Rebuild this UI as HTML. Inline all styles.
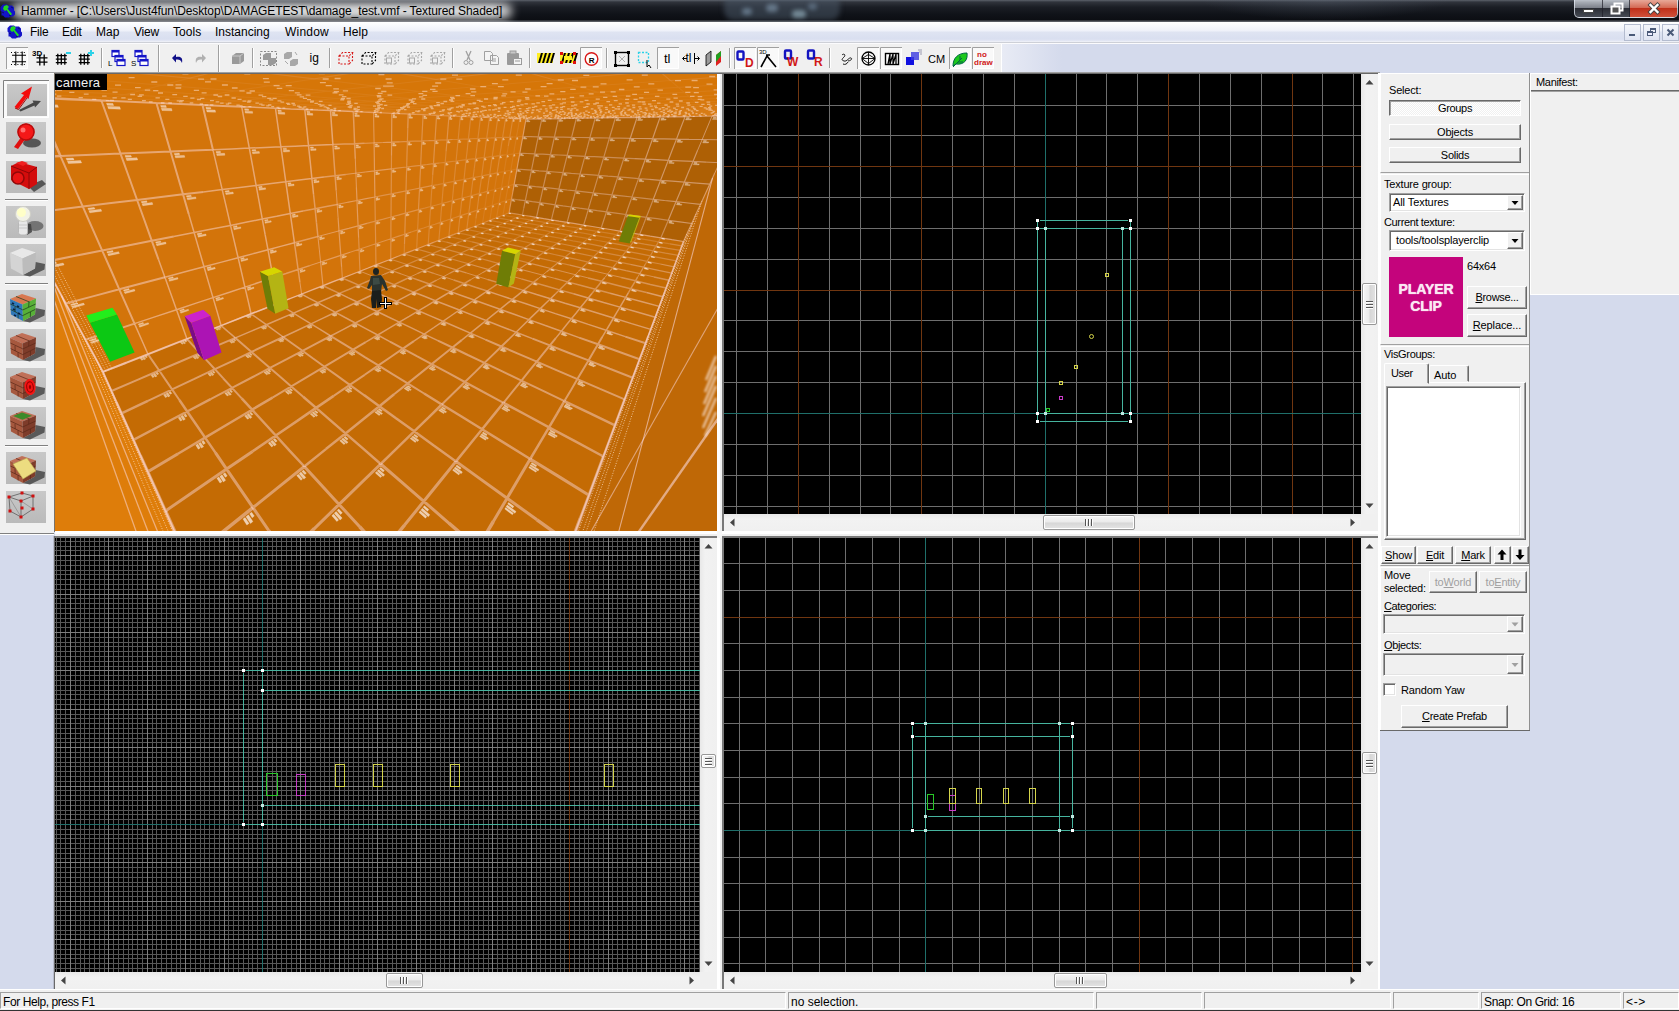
<!DOCTYPE html><html><head><meta charset="utf-8"><title>Hammer</title><style>html,body{margin:0;padding:0;background:#d4daec;overflow:hidden}body{width:1679px;height:1011px;position:relative;font-family:"Liberation Sans",sans-serif}u{text-decoration:underline}</style></head><body>
<div style="position:absolute;left:0px;top:0px;width:1679px;height:1011px;background:#d4daec"></div><div style="position:absolute;left:55px;top:73px;width:1325px;height:917px;background:#f0f0f0"></div><div style="position:absolute;left:0px;top:72px;width:1380px;height:1px;background:#a0a0a0"></div><div style="position:absolute;left:54px;top:73px;width:1326px;height:1px;background:#696969"></div><div style="position:absolute;left:52px;top:74px;width:2px;height:457px;background:#f8f8f8"></div><div style="position:absolute;left:54px;top:73px;width:1px;height:459px;background:#7a7268"></div><div style="position:absolute;left:717px;top:74px;width:3px;height:916px;background:#fff"></div><div style="position:absolute;left:720px;top:74px;width:2px;height:916px;background:#f0f0f0"></div><div style="position:absolute;left:722px;top:74px;width:2px;height:916px;background:#787878"></div><div style="position:absolute;left:55px;top:531px;width:1323px;height:3px;background:#fff"></div><div style="position:absolute;left:55px;top:534px;width:1323px;height:2px;background:#f0f0f0"></div><div style="position:absolute;left:55px;top:536px;width:1323px;height:2px;background:#787878"></div><div style="position:absolute;left:717px;top:531px;width:5px;height:7px;background:#f6f6f6"></div><div style="position:absolute;left:54px;top:536px;width:1px;height:454px;background:#696969"></div><div style="position:absolute;left:53px;top:536px;width:1px;height:454px;background:#b8bccb"></div><div style="position:absolute;left:1361px;top:74px;width:17px;height:440px;background:linear-gradient(90deg,#e8e8e8,#f2f2f2 30%,#f0f0f0)"></div><svg style="position:absolute;left:1361px;top:74px" width="17" height="440"><polygon points="4.5,10.5 12.5,10.5 8.5,6.0" fill="#444"/><polygon points="4.5,429.5 12.5,429.5 8.5,434.0" fill="#444"/></svg><div style="position:absolute;left:1362px;top:283px;width:13px;height:40px;border:1px solid #979797;border-radius:2px;background:linear-gradient(90deg,#f6f6f6,#eaeaea 48%,#d6d6d6 52%,#e4e4e4);box-shadow:inset 0 0 0 1px #fff"><div style="position:absolute;left:3px;top:17px;width:7px;height:1px;background:#555;border-bottom:1px solid #fff"></div><div style="position:absolute;left:3px;top:20px;width:7px;height:1px;background:#555;border-bottom:1px solid #fff"></div><div style="position:absolute;left:3px;top:23px;width:7px;height:1px;background:#555;border-bottom:1px solid #fff"></div></div><div style="position:absolute;left:724px;top:514px;width:637px;height:17px;background:linear-gradient(180deg,#e8e8e8,#f2f2f2 30%,#f0f0f0)"></div><svg style="position:absolute;left:724px;top:514px" width="637" height="17"><polygon points="10.5,4.5 10.5,12.5 6.0,8.5" fill="#444"/><polygon points="626.5,4.5 626.5,12.5 631.0,8.5" fill="#444"/></svg><div style="position:absolute;left:1043px;top:515px;width:90px;height:13px;border:1px solid #979797;border-radius:2px;background:linear-gradient(180deg,#f6f6f6,#eaeaea 48%,#d6d6d6 52%,#e4e4e4);box-shadow:inset 0 0 0 1px #fff"><div style="position:absolute;top:3px;left:41px;height:7px;width:1px;background:#555;border-right:1px solid #fff"></div><div style="position:absolute;top:3px;left:44px;height:7px;width:1px;background:#555;border-right:1px solid #fff"></div><div style="position:absolute;top:3px;left:47px;height:7px;width:1px;background:#555;border-right:1px solid #fff"></div></div><div style="position:absolute;left:1361px;top:514px;width:17px;height:17px;background:#f0f0f0"></div><div style="position:absolute;left:700px;top:538px;width:17px;height:434px;background:linear-gradient(90deg,#e8e8e8,#f2f2f2 30%,#f0f0f0)"></div><svg style="position:absolute;left:700px;top:538px" width="17" height="434"><polygon points="4.5,10.5 12.5,10.5 8.5,6.0" fill="#444"/><polygon points="4.5,423.5 12.5,423.5 8.5,428.0" fill="#444"/></svg><div style="position:absolute;left:701px;top:754px;width:13px;height:12px;border:1px solid #979797;border-radius:2px;background:linear-gradient(90deg,#f6f6f6,#eaeaea 48%,#d6d6d6 52%,#e4e4e4);box-shadow:inset 0 0 0 1px #fff"><div style="position:absolute;left:3px;top:3px;width:7px;height:1px;background:#555;border-bottom:1px solid #fff"></div><div style="position:absolute;left:3px;top:6px;width:7px;height:1px;background:#555;border-bottom:1px solid #fff"></div><div style="position:absolute;left:3px;top:9px;width:7px;height:1px;background:#555;border-bottom:1px solid #fff"></div></div><div style="position:absolute;left:55px;top:972px;width:645px;height:17px;background:linear-gradient(180deg,#e8e8e8,#f2f2f2 30%,#f0f0f0)"></div><svg style="position:absolute;left:55px;top:972px" width="645" height="17"><polygon points="10.5,4.5 10.5,12.5 6.0,8.5" fill="#444"/><polygon points="634.5,4.5 634.5,12.5 639.0,8.5" fill="#444"/></svg><div style="position:absolute;left:386px;top:973px;width:35px;height:13px;border:1px solid #979797;border-radius:2px;background:linear-gradient(180deg,#f6f6f6,#eaeaea 48%,#d6d6d6 52%,#e4e4e4);box-shadow:inset 0 0 0 1px #fff"><div style="position:absolute;top:3px;left:13px;height:7px;width:1px;background:#555;border-right:1px solid #fff"></div><div style="position:absolute;top:3px;left:16px;height:7px;width:1px;background:#555;border-right:1px solid #fff"></div><div style="position:absolute;top:3px;left:19px;height:7px;width:1px;background:#555;border-right:1px solid #fff"></div></div><div style="position:absolute;left:700px;top:972px;width:17px;height:17px;background:#f0f0f0"></div><div style="position:absolute;left:1361px;top:538px;width:17px;height:434px;background:linear-gradient(90deg,#e8e8e8,#f2f2f2 30%,#f0f0f0)"></div><svg style="position:absolute;left:1361px;top:538px" width="17" height="434"><polygon points="4.5,10.5 12.5,10.5 8.5,6.0" fill="#444"/><polygon points="4.5,423.5 12.5,423.5 8.5,428.0" fill="#444"/></svg><div style="position:absolute;left:1362px;top:752px;width:13px;height:20px;border:1px solid #979797;border-radius:2px;background:linear-gradient(90deg,#f6f6f6,#eaeaea 48%,#d6d6d6 52%,#e4e4e4);box-shadow:inset 0 0 0 1px #fff"><div style="position:absolute;left:3px;top:7px;width:7px;height:1px;background:#555;border-bottom:1px solid #fff"></div><div style="position:absolute;left:3px;top:10px;width:7px;height:1px;background:#555;border-bottom:1px solid #fff"></div><div style="position:absolute;left:3px;top:13px;width:7px;height:1px;background:#555;border-bottom:1px solid #fff"></div></div><div style="position:absolute;left:724px;top:972px;width:637px;height:17px;background:linear-gradient(180deg,#e8e8e8,#f2f2f2 30%,#f0f0f0)"></div><svg style="position:absolute;left:724px;top:972px" width="637" height="17"><polygon points="10.5,4.5 10.5,12.5 6.0,8.5" fill="#444"/><polygon points="626.5,4.5 626.5,12.5 631.0,8.5" fill="#444"/></svg><div style="position:absolute;left:1054px;top:973px;width:51px;height:13px;border:1px solid #979797;border-radius:2px;background:linear-gradient(180deg,#f6f6f6,#eaeaea 48%,#d6d6d6 52%,#e4e4e4);box-shadow:inset 0 0 0 1px #fff"><div style="position:absolute;top:3px;left:21px;height:7px;width:1px;background:#555;border-right:1px solid #fff"></div><div style="position:absolute;top:3px;left:24px;height:7px;width:1px;background:#555;border-right:1px solid #fff"></div><div style="position:absolute;top:3px;left:27px;height:7px;width:1px;background:#555;border-right:1px solid #fff"></div></div><div style="position:absolute;left:1361px;top:972px;width:17px;height:17px;background:#f0f0f0"></div><div style="position:absolute;left:1378px;top:73px;width:2px;height:917px;background:#fff"></div>
<div style="position:absolute;left:0px;top:0px;width:1679px;height:22px;background:linear-gradient(180deg,#5d626b 0,#30343c 2px,#1b1e25 7px,#101319 14px,#0c0e13 20px,#585c63 21px)"></div><div style="position:absolute;left:724px;top:-6px;width:116px;height:26px;background:rgba(78,92,108,.5);border-radius:9px;filter:blur(2.500px)"></div><div style="position:absolute;left:742px;top:8px;width:10px;height:7px;background:rgba(140,165,190,.55);border-radius:4px;filter:blur(2px)"></div><div style="position:absolute;left:766px;top:4px;width:12px;height:8px;background:rgba(150,175,200,.5);border-radius:4px;filter:blur(2px)"></div><div style="position:absolute;left:792px;top:10px;width:14px;height:8px;background:rgba(170,200,215,.55);border-radius:4px;filter:blur(2px)"></div><div style="position:absolute;left:808px;top:3px;width:9px;height:7px;background:rgba(130,155,180,.45);border-radius:4px;filter:blur(2px)"></div><div style="position:absolute;left:1200px;top:0px;width:250px;height:20px;background:radial-gradient(ellipse at 50% 0%,rgba(90,100,115,.35),rgba(0,0,0,0) 70%)"></div><div style="position:absolute;left:12px;top:3px;width:500px;height:16px;background:rgba(255,255,255,.78);filter:blur(5px);border-radius:8px"></div><div style="position:absolute;left:24px;top:6px;width:474px;height:10px;background:rgba(255,255,255,.4);filter:blur(3px);border-radius:6px"></div><svg style="position:absolute;left:0px;top:3px" width="16" height="16" viewBox="0 0 16 16"><path d="M3 1.5h4l1 1h4l2 2v3l1 1v3l-2 2h-3l-1 1H5l-2-2H1.5v-4l-1-1V4z" fill="#1414c8"/><path d="M4 3l3-1 2 2-1.5 1.5L12 11l-1.5 1.5L6.5 7 5 8 3 6z" fill="#22d822"/><path d="M2 9l2 1M11 4l2 1M9 12l2 1" stroke="#0a0a70" stroke-width="1"/></svg><div style="position:absolute;left:21px;top:4px;font:12px 'Liberation Sans',sans-serif;color:#000;white-space:nowrap;letter-spacing:-0.092px">Hammer - [C:\Users\Just4fun\Desktop\DAMAGETEST\damage_test.vmf - Textured Shaded]</div><div style="position:absolute;left:1574px;top:0px;width:104px;height:18px;border:1px solid rgba(230,235,245,.75);border-top:none;border-radius:0 0 5px 5px;box-sizing:border-box;background:linear-gradient(180deg,rgba(205,210,218,.85) 0,rgba(150,155,165,.8) 45%,rgba(45,48,56,.85) 50%,rgba(80,85,95,.85) 100%)"></div><div style="position:absolute;left:1630px;top:0px;width:47px;height:17px;border-radius:0 0 4px 0;background:linear-gradient(180deg,#e8a898 0,#d46a55 45%,#c0301a 50%,#d0503a 100%)"></div><div style="position:absolute;left:1602px;top:0px;width:1px;height:17px;background:rgba(30,30,40,.7)"></div><div style="position:absolute;left:1629px;top:0px;width:1px;height:17px;background:rgba(30,30,40,.7)"></div><svg style="position:absolute;left:1574px;top:0" width="104" height="18"><rect x="9.5" y="9.5" width="10" height="3" fill="#fff" stroke="#444" stroke-width="1"/><rect x="40.500" y="3.5" width="8" height="7" fill="none" stroke="#fff" stroke-width="2"/><rect x="37.5" y="6.500" width="8" height="7" fill="#555" stroke="#fff" stroke-width="2"/><path d="M76.500 5l7 7M83.500 5l-7 7" stroke="#444" stroke-width="4.200" stroke-linecap="square"/><path d="M76.500 5l7 7M83.500 5l-7 7" stroke="#fff" stroke-width="2.400" stroke-linecap="square"/></svg>
<div style="position:absolute;left:0px;top:22px;width:1679px;height:21px;background:linear-gradient(180deg,#fff 0,#fbfcfe 2px,#eef1f9 9px,#dfe4f2 10px,#d9dff0 17px,#e4e8f4 19px,#f4f5f9 20px,#a7abb5 21px)"></div><svg style="position:absolute;left:7px;top:24px" width="16" height="16" viewBox="0 0 16 16"><path d="M3 1.5h4l1 1h4l2 2v3l1 1v3l-2 2h-3l-1 1H5l-2-2H1.5v-4l-1-1V4z" fill="#1414c8"/><path d="M4 3l3-1 2 2-1.5 1.5L12 11l-1.5 1.5L6.5 7 5 8 3 6z" fill="#22d822"/><path d="M2 9l2 1M11 4l2 1M9 12l2 1" stroke="#0a0a70" stroke-width="1"/></svg><span style="position:absolute;left:30px;top:25px;font:12px 'Liberation Sans',sans-serif;color:#000;white-space:nowrap;letter-spacing:-0.261px">File</span><span style="position:absolute;left:62px;top:25px;font:12px 'Liberation Sans',sans-serif;color:#000;white-space:nowrap;letter-spacing:-0.243px">Edit</span><span style="position:absolute;left:96px;top:25px;font:12px 'Liberation Sans',sans-serif;color:#000;white-space:nowrap;letter-spacing:-0.015px">Map</span><span style="position:absolute;left:134px;top:25px;font:12px 'Liberation Sans',sans-serif;color:#000;white-space:nowrap;letter-spacing:-0.199px">View</span><span style="position:absolute;left:173px;top:25px;font:12px 'Liberation Sans',sans-serif;color:#000;white-space:nowrap;letter-spacing:0.057px">Tools</span><span style="position:absolute;left:215px;top:25px;font:12px 'Liberation Sans',sans-serif;color:#000;white-space:nowrap;letter-spacing:0.001px">Instancing</span><span style="position:absolute;left:285px;top:25px;font:12px 'Liberation Sans',sans-serif;color:#000;white-space:nowrap;letter-spacing:0.219px">Window</span><span style="position:absolute;left:343px;top:25px;font:12px 'Liberation Sans',sans-serif;color:#000;white-space:nowrap;letter-spacing:0.078px">Help</span><div style="position:absolute;left:1624px;top:24px;width:17px;height:17px;border:1px solid #b4bccf;box-sizing:border-box;background:linear-gradient(180deg,#f4f6fb,#dfe4f2)"></div><div style="position:absolute;left:1643px;top:24px;width:17px;height:17px;border:1px solid #b4bccf;box-sizing:border-box;background:linear-gradient(180deg,#f4f6fb,#dfe4f2)"></div><div style="position:absolute;left:1662px;top:24px;width:17px;height:17px;border:1px solid #b4bccf;box-sizing:border-box;background:linear-gradient(180deg,#f4f6fb,#dfe4f2)"></div><svg style="position:absolute;left:1624px;top:24px" width="56" height="17"><rect x="5" y="10" width="6" height="2" fill="#4a5a78"/><rect x="26.5" y="4.500" width="5" height="4" fill="none" stroke="#4a5a78"/><rect x="23.5" y="7.500" width="5" height="4" fill="#eef" stroke="#4a5a78"/><rect x="26" y="4" width="6" height="2" fill="#4a5a78"/><rect x="23" y="7" width="6" height="2" fill="#4a5a78"/><path d="M43.500 5.500l6 6M49.500 5.500l-6 6" stroke="#4a5a78" stroke-width="2"/></svg>
<div style="position:absolute;left:0px;top:43px;width:1679px;height:30px;background:#d4daec"></div><div style="position:absolute;left:0px;top:43px;width:1001px;height:30px;background:#f0f0f0;border-right:1px solid #fff"></div><div style="position:absolute;left:1002px;top:43px;width:60px;height:30px;background:linear-gradient(90deg,#e8ebf5,#d4daec)"></div><div style="position:absolute;left:0px;top:43px;width:1679px;height:1px;background:#fbfbfd"></div><div style="position:absolute;left:0px;top:72px;width:1380px;height:1px;background:#a0a0a0"></div><svg style="position:absolute;left:0;top:43px" width="1001" height="30" viewBox="0 43 1001 30"><path d="M158.5 45V72" stroke="#a0a0a0"/><path d="M159.5 45V72" stroke="#fff"/><path d="M218.5 45V72" stroke="#a0a0a0"/><path d="M219.5 45V72" stroke="#fff"/><path d="M101.5 48V68" stroke="#a0a0a0"/><path d="M102.5 48V68" stroke="#fff"/><path d="M252.5 48V68" stroke="#a0a0a0"/><path d="M253.5 48V68" stroke="#fff"/><path d="M329.5 48V68" stroke="#a0a0a0"/><path d="M330.5 48V68" stroke="#fff"/><path d="M452.5 48V68" stroke="#a0a0a0"/><path d="M453.5 48V68" stroke="#fff"/><path d="M529.5 48V68" stroke="#a0a0a0"/><path d="M530.5 48V68" stroke="#fff"/><path d="M606.5 48V68" stroke="#a0a0a0"/><path d="M607.5 48V68" stroke="#fff"/><path d="M729.5 48V68" stroke="#a0a0a0"/><path d="M730.5 48V68" stroke="#fff"/><path d="M829.5 48V68" stroke="#a0a0a0"/><path d="M830.5 48V68" stroke="#fff"/><rect x="6" y="47" width="22" height="22" fill="#f9f9f9"/><path d="M6.5 69V47.5H28" stroke="#a0a0a0" fill="none"/><path d="M27.5 48V68.5H7" stroke="#fff" fill="none"/><path d="M15.8 51.5V65.5M22.2 51.5V65.5M12 55.3H26M12 61.7H26" stroke="#000" stroke-width="1.1" fill="none"/><path d="M11 52.500h16M11 64.500h16" stroke="#000" stroke-dasharray="1 2.200"/><text x="32" y="56" font-family="Liberation Sans, sans-serif" font-size="8" fill="#000" font-weight="bold">3D</text><path d="M39.8 54.5V65.5M44.2 54.5V65.5M36.5 57.8H47.5M36.5 62.2H47.5" stroke="#000" stroke-width="1.3" fill="none"/><path d="M57.8 53.7V64.7M55.8 55.7H66.8M61.3 53.7V64.7M55.8 59.2H66.8M64.8 53.7V64.7M55.8 62.7H66.8" stroke="#000" stroke-width="1.300" fill="none"/><rect x="66" y="52" width="5" height="2" fill="#2cd2e8"/><path d="M80.8 53.7V64.7M78.8 55.7H89.8M84.3 53.7V64.7M78.8 59.2H89.8M87.8 53.7V64.7M78.8 62.7H89.8" stroke="#000" stroke-width="1.300" fill="none"/><path d="M88 53h6M91 50v6" stroke="#2cd2e8" stroke-width="2"/><rect x="112" y="50.500" width="7" height="6" fill="#fff" stroke="#1414c8" stroke-width="1.200"/><rect x="115" y="55.500" width="8" height="6" fill="#fff" stroke="#1414c8" stroke-width="1.200"/><rect x="117" y="59.500" width="8" height="6" fill="#fff" stroke="#1414c8" stroke-width="1.200"/><path d="M112 51.500h7M115 56.500h8M117 60.500h8" stroke="#1414c8" stroke-width="2"/><text x="108" y="65.5" font-family="Liberation Sans, sans-serif" font-size="8" fill="#000" >L</text><rect x="135" y="50.500" width="7" height="6" fill="#fff" stroke="#1414c8" stroke-width="1.200"/><rect x="138" y="55.500" width="8" height="6" fill="#fff" stroke="#1414c8" stroke-width="1.200"/><rect x="140" y="59.500" width="8" height="6" fill="#fff" stroke="#1414c8" stroke-width="1.200"/><path d="M135 51.500h7M138 56.500h8M140 60.500h8" stroke="#1414c8" stroke-width="2"/><text x="131" y="65.5" font-family="Liberation Sans, sans-serif" font-size="8" fill="#000" >S</text><path d="M172 58l4-4v3c5-1 7 1 6 6c-1-3-3-4-6-3.500v3z" fill="#101088"/><path d="M206 58l-4-4v3c-5-1-7 1-6 6c1-3 3-4 6-3.500v3z" fill="#b0b0b0"/><path d="M232 56l4-3h8v8l-4 3h-8z" fill="#9a9a9a"/><path d="M232 56h8l4-3M240 56v8" stroke="#c8c8c8" fill="none"/><rect x="260.500" y="51.500" width="16" height="14" fill="none" stroke="#8a8a8a" stroke-dasharray="2 1.500"/><path d="M263 55l3-2h5v5l-3 2h-5zM268 60l3-2h5v5l-3 2h-5z" fill="#9a9a9a"/><path d="M284 54l3-2h5v5l-3 2h-5zM290 61l3-2h5v5l-3 2h-5z" fill="#a8a8a8"/><path d="M295 52l2 3M285 61l3 3" stroke="#a8a8a8"/><text x="309.5" y="62" font-family="Liberation Sans, sans-serif" font-size="12" fill="#000" >ig</text><path d="M339.0 56.0h10v8h-10zM339.0 56.0l3.500-3.500h10l-3.500 3.500M352.5 52.5v8l-3.500 3.500" stroke="#d81818" stroke-width="1.100" fill="none" stroke-dasharray="2 1.5"/><path d="M362.0 56.0h10v8h-10zM362.0 56.0l3.500-3.500h10l-3.500 3.500M375.5 52.5v8l-3.500 3.500" stroke="#000" stroke-width="1.100" fill="none" stroke-dasharray="2 1.5"/><path d="M385.0 56.0h10v8h-10zM385.0 56.0l3.500-3.500h10l-3.500 3.500M398.5 52.5v8l-3.500 3.500" stroke="#a8a8a8" stroke-width="1.100" fill="none" stroke-dasharray="2 1.5"/><rect x="386.5" y="58" width="5" height="5" fill="none" stroke="#a8a8a8"/><path d="M408.0 56.0h10v8h-10zM408.0 56.0l3.500-3.500h10l-3.500 3.500M421.5 52.5v8l-3.500 3.500" stroke="#a8a8a8" stroke-width="1.100" fill="none" stroke-dasharray="2 1.5"/><rect x="409.5" y="58" width="5" height="5" fill="none" stroke="#a8a8a8"/><path d="M431.0 56.0h10v8h-10zM431.0 56.0l3.500-3.500h10l-3.500 3.500M444.5 52.5v8l-3.500 3.500" stroke="#a8a8a8" stroke-width="1.100" fill="none" stroke-dasharray="2 1.5"/><rect x="432.5" y="58" width="5" height="5" fill="none" stroke="#a8a8a8"/><path d="M466 51l4 9M471 51l-4 9" stroke="#a0a0a0" stroke-width="1.300"/><circle cx="466" cy="62.500" r="2" fill="none" stroke="#a0a0a0"/><circle cx="471" cy="62.500" r="2" fill="none" stroke="#a0a0a0"/><path d="M484.500 51.500h6l2 2v7h-8zM490.500 55.500h6l2 2v7h-8z" fill="#f4f4f4" stroke="#a0a0a0"/><path d="M492 59h4M492 61h4" stroke="#a0a0a0"/><rect x="507" y="53" width="12" height="12" rx="1" fill="#9a9a9a"/><rect x="510" y="51" width="6" height="3" fill="#c8c8c8" stroke="#9a9a9a"/><rect x="513.500" y="58.500" width="8" height="6" fill="#f4f4f4" stroke="#9a9a9a"/><path d="M515 61h5" stroke="#9a9a9a"/><rect x="537" y="53" width="16" height="10" fill="#ffee22"/><path d="M538 63l3-10h2l-3 10z" fill="#000"/><path d="M542 63l3-10h2l-3 10z" fill="#000"/><path d="M546 63l3-10h2l-3 10z" fill="#000"/><path d="M550 63l3-10h2l-3 10z" fill="#000"/><rect x="560" y="53" width="16" height="10" fill="#ffee22"/><path d="M561 63l3-10h2l-3 10z" fill="#000"/><path d="M565 63l3-10h2l-3 10z" fill="#000"/><path d="M569 63l3-10h2l-3 10z" fill="#000"/><path d="M573 63l3-10h2l-3 10z" fill="#000"/><rect x="560" y="52" width="3" height="3" fill="#e01010"/><rect x="573" y="52" width="3" height="3" fill="#e01010"/><rect x="560" y="61" width="3" height="3" fill="#e01010"/><rect x="573" y="61" width="3" height="3" fill="#e01010"/><rect x="564" y="56" width="8" height="4" fill="#ffee22"/><rect x="580" y="47" width="22" height="22" fill="#f9f9f9"/><path d="M580.5 69V47.5H602" stroke="#a0a0a0" fill="none"/><path d="M601.5 48V68.5H581" stroke="#fff" fill="none"/><circle cx="591.500" cy="59" r="6.300" fill="#fff" stroke="#d81818" stroke-width="1.400"/><text x="588.7" y="62.5" font-family="Liberation Sans, sans-serif" font-size="8" fill="#000" font-weight="bold">R</text><rect x="615.500" y="52.500" width="13" height="13" fill="none" stroke="#000" stroke-width="1.400"/><path d="M619 56l6 6M625 56l-6 6" stroke="#b0b0b0"/><rect x="614" y="51" width="3" height="3" fill="#000"/><rect x="627" y="51" width="3" height="3" fill="#000"/><rect x="614" y="64" width="3" height="3" fill="#000"/><rect x="627" y="64" width="3" height="3" fill="#000"/><rect x="638.500" y="52.500" width="10" height="10" fill="none" stroke="#2cd2e8" stroke-width="1.300" stroke-dasharray="2 1.500"/><path d="M647 60v7l2-2 2 3" stroke="#000" fill="none"/><rect x="657" y="47" width="22" height="22" fill="#f9f9f9"/><path d="M657.5 69V47.5H679" stroke="#a0a0a0" fill="none"/><path d="M678.5 48V68.5H658" stroke="#fff" fill="none"/><text x="664" y="63" font-family="Liberation Sans, sans-serif" font-size="13" fill="#000" >tl</text><text x="685.5" y="62" font-family="Liberation Sans, sans-serif" font-size="12" fill="#000" >tl</text><path d="M683 58.500h4M682.500 58.500l2-2M682.500 58.500l2 2M695 58.500h4M699.500 58.500l-2-2M699.500 58.500l-2 2M694.500 53v11" stroke="#000" fill="none"/><path d="M706 55l5-4v11l-5 4z" fill="#9a9a9a" stroke="#000" stroke-width=".8"/><path d="M716 55l5-4v11l-5 4z" fill="#e02020"/><path d="M716 55l5-4v5l-5 6z" fill="#20a020"/><rect x="734" y="47" width="22" height="22" fill="#f9f9f9"/><path d="M734.5 69V47.5H756" stroke="#a0a0a0" fill="none"/><path d="M755.5 48V68.5H735" stroke="#fff" fill="none"/><rect x="737.5" y="51.5" width="6" height="8" rx="1" fill="none" stroke="#1414c0" stroke-width="2.400"/><text x="745" y="67" font-family="Liberation Sans, sans-serif" font-size="12" fill="#d01818" font-weight="bold">D</text><rect x="757" y="47" width="22" height="22" fill="#f9f9f9"/><path d="M757.5 69V47.5H779" stroke="#a0a0a0" fill="none"/><path d="M778.5 48V68.5H758" stroke="#fff" fill="none"/><text x="759" y="54" font-family="Liberation Sans, sans-serif" font-size="6" fill="#000" >3D</text><path d="M761 67l6-11 9 11M766 55h4" stroke="#000" stroke-width="1.600" fill="none"/><rect x="785" y="50.5" width="6" height="8" rx="1" fill="none" stroke="#1414c0" stroke-width="2.400"/><text x="787" y="66" font-family="Liberation Sans, sans-serif" font-size="12" fill="#d01818" font-weight="bold">W</text><rect x="808" y="50.5" width="6" height="8" rx="1" fill="none" stroke="#1414c0" stroke-width="2.400"/><text x="814" y="66" font-family="Liberation Sans, sans-serif" font-size="12" fill="#d01818" font-weight="bold">R</text><path d="M842 55c2-2 4 0 2 2s-3 3 0 4 5-4 7-3-1 3-3 3M843 64c2 1 4 0 5-2" stroke="#000" fill="none" stroke-width=".9"/><rect x="857" y="47" width="22" height="22" fill="#f9f9f9"/><path d="M857.5 69V47.5H879" stroke="#a0a0a0" fill="none"/><path d="M878.5 48V68.5H858" stroke="#fff" fill="none"/><circle cx="868.500" cy="58.500" r="6.500" fill="none" stroke="#000" stroke-width="1.300"/><path d="M862 58.500l6.500-4 6.500 4-6.500 5zM868.500 52v13M862 58.500h13" stroke="#000" fill="none" stroke-width=".9"/><rect x="880" y="47" width="22" height="22" fill="#f9f9f9"/><path d="M880.5 69V47.5H902" stroke="#a0a0a0" fill="none"/><path d="M901.5 48V68.5H881" stroke="#fff" fill="none"/><rect x="885.500" y="53.500" width="13" height="11" fill="#fff" stroke="#000" stroke-width="1.400"/><path d="M888 64l2-10v10l3-10v10l3-10v10" stroke="#000" fill="none" stroke-width="1.300"/><rect x="906" y="57" width="8" height="8" fill="#1010e0"/><rect x="911" y="52" width="8" height="8" fill="#3c3ce0" fill-opacity=".8"/><path d="M918 50l4 0M919 52h3M920 54h2" stroke="#9a9ab0"/><text x="928" y="62.5" font-family="Liberation Sans, sans-serif" font-size="11" fill="#000" >CM</text><rect x="949" y="47" width="22" height="22" fill="#f9f9f9"/><path d="M949.5 69V47.5H971" stroke="#a0a0a0" fill="none"/><path d="M970.5 48V68.5H950" stroke="#fff" fill="none"/><path d="M953 66c0-8 5-13 14-13c1 7-3 12-11 11z" fill="#1cc81c" stroke="#064" stroke-width="1"/><path d="M953 67l9-9M958 62h5M960 60v-4" stroke="#064" fill="none"/><rect x="972" y="47" width="22" height="22" fill="#f9f9f9"/><path d="M972.5 69V47.5H994" stroke="#a0a0a0" fill="none"/><path d="M993.5 48V68.5H973" stroke="#fff" fill="none"/><text x="977" y="57" font-family="Liberation Sans, sans-serif" font-size="8" fill="#d01818" font-weight="bold">no</text><text x="974" y="65" font-family="Liberation Sans, sans-serif" font-size="8" fill="#d01818" font-weight="bold">draw</text></svg>
<div style="position:absolute;left:0px;top:73px;width:54px;height:461px;background:#f0f0f0;border-top:1px solid #fff;border-bottom:1px solid #808080;box-sizing:border-box"></div><div style="position:absolute;left:0px;top:534px;width:54px;height:1px;background:#fff"></div><svg style="position:absolute;left:0;top:73px" width="54" height="459" viewBox="0 73 54 459"><defs><linearGradient id="ibg" x1="0" y1="0" x2="0" y2="1"><stop offset="0" stop-color="#c8c8c8"/><stop offset="1" stop-color="#bababa"/></linearGradient></defs><rect x="3" y="80" width="46" height="38" fill="#fafafa"/><path d="M3.500 118V80.500H49" stroke="#808080" fill="none"/><path d="M48.500 81V117.500H4" stroke="#fff" fill="none"/><rect x="7" y="84" width="40" height="32" fill="url(#ibg)"/><rect x="6" y="122" width="40" height="32" fill="url(#ibg)"/><rect x="6" y="161" width="40" height="32" fill="url(#ibg)"/><rect x="6" y="206" width="40" height="32" fill="url(#ibg)"/><rect x="6" y="244" width="40" height="32" fill="url(#ibg)"/><rect x="6" y="290" width="40" height="32" fill="url(#ibg)"/><rect x="6" y="329" width="40" height="32" fill="url(#ibg)"/><rect x="6" y="368" width="40" height="32" fill="url(#ibg)"/><rect x="6" y="407" width="40" height="32" fill="url(#ibg)"/><rect x="6" y="452" width="40" height="32" fill="url(#ibg)"/><rect x="6" y="491" width="40" height="32" fill="url(#ibg)"/><path d="M5 199.5H48" stroke="#808080"/><path d="M5 200.5H48" stroke="#fff"/><path d="M5 283.5H48" stroke="#808080"/><path d="M5 284.5H48" stroke="#fff"/><path d="M5 445.5H48" stroke="#808080"/><path d="M5 446.5H48" stroke="#fff"/><path d="M19 110l1.500 1.500 14-6 .5 2 6-6.500-8.500-.5 1 2z" fill="#3a3a3a" fill-opacity=".9"/><path d="M14.500 107l9.500-12-3-1.500 11-7-3.500 12.500-2-1.500-8.500 11.500z" fill="#f40c0c"/><path d="M15 108l3.500 1.500 8.500-11.500" stroke="#a40808" fill="none"/><ellipse cx="32" cy="143" rx="9" ry="4.500" fill="#3c3c3c" fill-opacity=".8"/><path d="M14 147l8-11 4 2-8 11z" fill="#e01010"/><circle cx="26" cy="132" r="8.500" fill="#f41818"/><circle cx="26" cy="132" r="8" fill="none" stroke="#b80c0c" stroke-width="1.500"/><circle cx="23" cy="130" r="2.500" fill="#ff7070"/><path d="M28 186l14-6 4 4-12 8z" fill="#3c3c3c" fill-opacity=".8"/><path d="M11 166l8-4 18 5 0 17-8 5-18-9z" fill="#d40c0c"/><path d="M11 166l18 7 8-6M29 173v16" stroke="#8c0606" fill="none"/><circle cx="18" cy="178" r="6" fill="#e81414" stroke="#900808" stroke-width="1.500"/><path d="M16 163l6-2 6 2-5 3z" fill="#f02020"/><ellipse cx="35" cy="226" rx="8.500" ry="5" fill="#5a5a5a" fill-opacity=".75"/><path d="M26 224l5 0 1 8-5 3z" fill="#3a3a3a" fill-opacity=".8"/><rect x="18.500" y="220" width="9" height="15" rx="2.500" fill="#e8e8e8" stroke="#b8b8b8"/><path d="M19 225h8M19 228h8" stroke="#c0c0c0" stroke-width=".8"/><circle cx="23" cy="214" r="7.500" fill="#f2f2e6" stroke="#d0d0c8"/><circle cx="21.500" cy="212.500" r="4.500" fill="#ffffc8"/><path d="M23 275l12-6.500 .5-6.500 9.500 2-.5 5.500-14.500 7z" fill="#484848" fill-opacity=".85"/><path d="M10 253l12-5 14 4.500-13.500 6z" fill="#e8e8e8"/><path d="M10 253l12.500 5.500 .5 16.500-12-6.500z" fill="#d4d4d4"/><path d="M22.5 258.5l13.500-6-1 16-12 6.500z" fill="#bcbcbc"/><path d="M23 321l12-6.500 .5-6.500 9.500 2-.5 5.500-14.500 7z" fill="#484848" fill-opacity=".85"/><path d="M10 299l12-5 14 4.500-13.500 6z" fill="#d87850"/><path d="M10 299l12.500 5.500 .5 16.500-12-6.500z" fill="#3078b8"/><path d="M22.5 304.5l13.500-6-1 16-12 6.500z" fill="#58b038"/><path d="M10.3 304l12.400 5.800M10.6 309.5l12.200 6.200M22.7 310l13-6M22.9 315.5l12.500-6.200M16 296.5l13.500 5.500M15 307l.2 5M18 313.5l.2 5M29 301.5l-.3 5.500M30.5 312l-.2 5" stroke="#1a3a1a" stroke-width=".7" fill="none"/><path d="M12 303l2 1M17 306l2 1M13 309l2 1M18 313l2 1M14 315l2 1" stroke="#0a2040" stroke-width="1.800"/><path d="M23 360l12-6.500 .5-6.500 9.500 2-.5 5.500-14.500 7z" fill="#484848" fill-opacity=".85"/><path d="M10 338l12-5 14 4.500-13.500 6z" fill="#c07058"/><path d="M10 338l12.500 5.500 .5 16.500-12-6.500z" fill="#a6583e"/><path d="M22.5 343.5l13.500-6-1 16-12 6.500z" fill="#7e3c2a"/><path d="M10.3 343l12.400 5.800M10.6 348.5l12.200 6.200M22.7 349l13-6M22.9 354.5l12.500-6.200M16 335.5l13.500 5.500M15 346l.2 5M18 352.5l.2 5M29 340.5l-.3 5.500M30.5 351l-.2 5" stroke="#5a2818" stroke-width=".7" fill="none"/><path d="M23 399l12-6.500 .5-6.500 9.500 2-.5 5.500-14.500 7z" fill="#484848" fill-opacity=".85"/><path d="M10 377l12-5 14 4.500-13.500 6z" fill="#c07058"/><path d="M10 377l12.500 5.500 .5 16.500-12-6.500z" fill="#a6583e"/><path d="M22.5 382.5l13.500-6-1 16-12 6.500z" fill="#7e3c2a"/><path d="M10.3 382l12.400 5.800M10.6 387.5l12.200 6.200M22.7 388l13-6M22.9 393.5l12.500-6.200M16 374.5l13.500 5.500M15 385l.2 5M18 391.5l.2 5M29 379.5l-.3 5.500M30.5 390l-.2 5" stroke="#5a2818" stroke-width=".7" fill="none"/><ellipse cx="30" cy="387" rx="5.500" ry="8" fill="#f41414" transform="rotate(-8 30 387)"/><ellipse cx="30" cy="387" rx="3.300" ry="5.200" fill="none" stroke="#900" stroke-width="1.100" transform="rotate(-8 30 387)"/><ellipse cx="30" cy="387" rx="1.200" ry="2" fill="#900"/><path d="M23 438l12-6.500 .5-6.500 9.500 2-.5 5.500-14.500 7z" fill="#484848" fill-opacity=".85"/><path d="M10 416l12-5 14 4.500-13.500 6z" fill="#c07058"/><path d="M10 416l12.500 5.500 .5 16.500-12-6.500z" fill="#a6583e"/><path d="M22.5 421.5l13.500-6-1 16-12 6.500z" fill="#7e3c2a"/><path d="M10.3 421l12.400 5.800M10.6 426.5l12.200 6.200M22.7 427l13-6M22.9 432.5l12.500-6.200M16 413.5l13.500 5.500M15 424l.2 5M18 430.5l.2 5M29 418.5l-.3 5.500M30.5 429l-.2 5" stroke="#5a2818" stroke-width=".7" fill="none"/><path d="M13 416l9-3.500 10 3.200-9.500 4z" fill="#3e8a2a"/><path d="M23 483l12-6.500 .5-6.500 9.500 2-.5 5.500-14.500 7z" fill="#484848" fill-opacity=".85"/><path d="M10 461l12-5 14 4.500-13.500 6z" fill="#c07058"/><path d="M10 461l12.500 5.500 .5 16.500-12-6.500z" fill="#a6583e"/><path d="M22.5 466.5l13.500-6-1 16-12 6.500z" fill="#7e3c2a"/><path d="M10.3 466l12.400 5.800M10.6 471.5l12.200 6.200M22.7 472l13-6M22.9 477.5l12.500-6.200M16 458.5l13.500 5.500M15 469l.2 5M18 475.5l.2 5M29 463.5l-.3 5.500M30.5 474l-.2 5" stroke="#5a2818" stroke-width=".7" fill="none"/><path d="M13 464l14-6 9 13-13 8z" fill="#ecdc80" stroke="#b8a850" stroke-width=".6"/><path d="M9 497l12 4v16l-11-6zM21 501l12-5v13l-12 8M9 497l13-4 11 3" stroke="#686868" fill="none" stroke-width=".9"/><path d="M9 497l12 20M21 501l12 8" stroke="#8a8a8a" fill="none" stroke-width=".7"/><rect x="7.5" y="495.5" width="3" height="3" fill="#d01010"/><rect x="19.5" y="499.5" width="3" height="3" fill="#d01010"/><rect x="31.5" y="494.5" width="3" height="3" fill="#d01010"/><rect x="20.5" y="491.5" width="3" height="3" fill="#d01010"/><rect x="8.5" y="509.5" width="3" height="3" fill="#d01010"/><rect x="19.5" y="515.5" width="3" height="3" fill="#d01010"/><rect x="31.5" y="507.5" width="3" height="3" fill="#d01010"/><rect x="20.5" y="506.5" width="3" height="3" fill="#d01010"/></svg>
<svg style="position:absolute;left:55px;top:74px" width="662" height="457" viewBox="55 74 662 457">
<rect x="55" y="74" width="662" height="457" fill="#d9760b"/>
<polygon points="-48.1,94.0 -3704.5,-2916.0 4476.3,-2916.0 741.0,115.7 526.0,119.2" fill="#d67608" />
<polygon points="102.9,371.9 393.9,1018.7 683.5,241.5 509.1,212.8" fill="#c46b04" />
<polygon points="509.1,212.8 683.5,241.5 741.0,115.7 526.0,119.2" fill="#ae6005" />
<polygon points="102.9,371.9 509.1,212.8 526.0,119.2 -48.1,94.0" fill="#d3740a" />
<polygon points="393.9,1018.7 683.5,241.5 741.0,115.7 4476.3,-2916.0 681.9,5624.7" fill="#bf6806" />
<polygon points="102.9,371.9 393.9,1018.7 681.9,5624.7 -3704.5,-2916.0 -48.1,94.0" fill="#de7d0a" />
<path d="M-48.1 94.0L34.7 97.6M34.7 97.6L101.4 100.6M101.4 100.6L156.4 103.0M156.4 103.0L202.5 105.0M202.5 105.0L241.7 106.7M241.7 106.7L275.4 108.2M275.4 108.2L304.8 109.5M304.8 109.5L330.5 110.6M330.5 110.6L353.3 111.6M353.3 111.6L373.6 112.5M373.6 112.5L391.8 113.3M391.8 113.3L408.2 114.0M408.2 114.0L423.1 114.7M423.1 114.7L436.6 115.3M436.6 115.3L449.0 115.8M449.0 115.8L460.4 116.3M460.4 116.3L470.8 116.8M470.8 116.8L480.5 117.2M480.5 117.2L489.5 117.6M489.5 117.6L497.8 118.0M497.8 118.0L505.6 118.3M505.6 118.3L512.8 118.6M512.8 118.6L519.6 118.9M519.6 118.9L526.0 119.2M-53.3 89.7L39.2 94.3M39.2 94.3L112.1 97.9M112.1 97.9L171.0 100.7M171.0 100.7L219.5 103.1M219.5 103.1L260.3 105.1M260.3 105.1L295.0 106.8M295.0 106.8L324.9 108.3M324.9 108.3L350.8 109.6M350.8 109.6L373.7 110.7M373.7 110.7L393.9 111.7M393.9 111.7L411.9 112.6M411.9 112.6L428.1 113.4M428.1 113.4L442.6 114.1M442.6 114.1L455.9 114.7M455.9 114.7L467.9 115.3M467.9 115.3L478.9 115.9M478.9 115.9L489.0 116.4M489.0 116.4L498.3 116.8M498.3 116.8L506.9 117.2M506.9 117.2L514.9 117.6M514.9 117.6L522.3 118.0M522.3 118.0L529.3 118.3M529.3 118.3L535.7 118.7M535.7 118.7L541.8 119.0M-59.9 84.3L44.9 90.1M44.9 90.1L125.1 94.6M125.1 94.6L188.4 98.1M188.4 98.1L239.6 100.9M239.6 100.9L281.9 103.3M281.9 103.3L317.4 105.3M317.4 105.3L347.7 106.9M347.7 106.9L373.8 108.4M373.8 108.4L396.5 109.7M396.5 109.7L416.5 110.8M416.5 110.8L434.2 111.8M434.2 111.8L449.9 112.6M449.9 112.6L464.1 113.4M464.1 113.4L476.9 114.1M476.9 114.1L488.4 114.8M488.4 114.8L499.0 115.4M499.0 115.4L508.7 115.9M508.7 115.9L517.5 116.4M517.5 116.4L525.7 116.9M525.7 116.9L533.2 117.3M533.2 117.3L540.2 117.7M540.2 117.7L546.8 118.0M546.8 118.0L552.8 118.4M552.8 118.4L558.5 118.7M-68.8 76.9L52.3 84.7M52.3 84.7L141.3 90.4M141.3 90.4L209.6 94.8M209.6 94.8L263.6 98.3M263.6 98.3L307.3 101.1M307.3 101.1L343.5 103.4M343.5 103.4L374.0 105.4M374.0 105.4L399.9 107.1M399.9 107.1L422.3 108.5M422.3 108.5L441.8 109.7M441.8 109.7L458.9 110.8M458.9 110.8L474.1 111.8M474.1 111.8L487.7 112.7M487.7 112.7L499.9 113.5M499.9 113.5L510.8 114.2M510.8 114.2L520.8 114.8M520.8 114.8L529.9 115.4M529.9 115.4L538.2 115.9M538.2 115.9L545.8 116.4M545.8 116.4L552.9 116.9M552.9 116.9L559.4 117.3M559.4 117.3L565.4 117.7M565.4 117.7L571.0 118.0M571.0 118.0L576.3 118.4M62.0 77.6L162.1 85.2M162.1 85.2L236.0 90.8M236.0 90.8L292.7 95.1M292.7 95.1L337.7 98.5M337.7 98.5L374.2 101.3M374.2 101.3L404.4 103.6M404.4 103.6L429.8 105.5M429.8 105.5L451.6 107.2M451.6 107.2L470.3 108.6M470.3 108.6L486.6 109.8M486.6 109.8L501.0 110.9M501.0 110.9L513.8 111.9M513.8 111.9L525.1 112.7M525.1 112.7L535.4 113.5M535.4 113.5L544.6 114.2M544.6 114.2L553.0 114.9M553.0 114.9L560.6 115.4M560.6 115.4L567.6 116.0M567.6 116.0L574.0 116.5M574.0 116.5L579.9 116.9M579.9 116.9L585.4 117.3M585.4 117.3L590.5 117.7M590.5 117.7L595.2 118.1M189.7 78.2L269.7 85.6M269.7 85.6L328.9 91.1M328.9 91.1L374.5 95.4M374.5 95.4L410.7 98.7M410.7 98.7L440.1 101.5M440.1 101.5L464.6 103.7M464.6 103.7L485.1 105.6M485.1 105.6L502.7 107.3M502.7 107.3L517.9 108.7M517.9 108.7L531.1 109.9M531.1 109.9L542.8 111.0M542.8 111.0L553.1 111.9M553.1 111.9L562.3 112.8M562.3 112.8L570.6 113.6M570.6 113.6L578.1 114.3M578.1 114.3L584.9 114.9M584.9 114.9L591.1 115.5M591.1 115.5L596.8 116.0M596.8 116.0L602.0 116.5M602.0 116.5L606.8 116.9M606.8 116.9L611.3 117.4M611.3 117.4L615.4 117.7M314.2 78.8L375.0 86.1M375.0 86.1L420.1 91.5M420.1 91.5L455.0 95.6M455.0 95.6L482.7 98.9M482.7 98.9L505.3 101.6M505.3 101.6L524.0 103.9M524.0 103.9L539.8 105.8M539.8 105.8L553.3 107.4M553.3 107.4L565.0 108.8M565.0 108.8L575.2 110.0M575.2 110.0L584.1 111.1M584.1 111.1L592.1 112.0M592.1 112.0L599.2 112.9M599.2 112.9L605.6 113.6M605.6 113.6L611.4 114.3M611.4 114.3L616.7 114.9M616.7 114.9L621.5 115.5M621.5 115.5L625.9 116.0M625.9 116.0L629.9 116.5M629.9 116.5L633.6 117.0M633.6 117.0L637.1 117.4M435.8 79.4L478.2 86.5M478.2 86.5L509.7 91.8M509.7 91.8L534.2 95.9M534.2 95.9L553.6 99.1M553.6 99.1L569.5 101.8M569.5 101.8L582.7 104.0M582.7 104.0L593.9 105.9M593.9 105.9L603.4 107.5M603.4 107.5L611.6 108.9M611.6 108.9L618.8 110.1M618.8 110.1L625.2 111.1M625.2 111.1L630.8 112.1M630.8 112.1L635.9 112.9M635.9 112.9L640.4 113.7M640.4 113.7L644.5 114.4M644.5 114.4L648.2 115.0M648.2 115.0L651.6 115.6M651.6 115.6L654.7 116.1M654.7 116.1L657.6 116.6M657.6 116.6L660.2 117.0M554.5 80.0L579.2 86.9M579.2 86.9L597.8 92.1M597.8 92.1L612.1 96.1M612.1 96.1L623.6 99.3M623.6 99.3L633.0 102.0M633.0 102.0L640.8 104.2M640.8 104.2L647.3 106.0M647.3 106.0L653.0 107.6M653.0 107.6L657.9 108.9M657.9 108.9L662.1 110.1M662.1 110.1L665.9 111.2M665.9 111.2L669.2 112.1M669.2 112.1L672.2 113.0M672.2 113.0L674.9 113.7M674.9 113.7L677.4 114.4M677.4 114.4L679.6 115.0M679.6 115.0L681.6 115.6M681.6 115.6L683.4 116.1M683.4 116.1L685.1 116.6M670.4 80.5L678.3 87.3M678.3 87.3L684.3 92.4M684.3 92.4L688.9 96.4M688.9 96.4L692.6 99.5M692.6 99.5L695.6 102.1M695.6 102.1L698.1 104.3M698.1 104.3L700.2 106.1M700.2 106.1L702.1 107.7M702.1 107.7L703.7 109.0M703.7 109.0L705.0 110.2M705.0 110.2L706.3 111.3M706.3 111.3L707.4 112.2M707.4 112.2L708.3 113.0M708.3 113.0L709.2 113.8M709.2 113.8L710.0 114.5M710.0 114.5L710.7 115.1M710.7 115.1L711.4 115.6M711.4 115.6L712.0 116.1M757.4 102.3L754.8 104.4M754.8 104.4L752.6 106.2M752.6 106.2L750.7 107.8M750.7 107.8L749.0 109.1M749.0 109.1L747.6 110.3M747.6 110.3L746.3 111.3M746.3 111.3L745.2 112.3M745.2 112.3L744.2 113.1M744.2 113.1L743.2 113.8M743.2 113.8L742.4 114.5M742.4 114.5L741.7 115.1M741.7 115.1L741.0 115.7M34.7 97.6L39.2 94.3M39.2 94.3L44.9 90.1M44.9 90.1L52.3 84.7M52.3 84.7L62.0 77.6M101.4 100.6L112.1 97.9M112.1 97.9L125.1 94.6M125.1 94.6L141.3 90.4M141.3 90.4L162.1 85.2M162.1 85.2L189.7 78.2M156.4 103.0L171.0 100.7M171.0 100.7L188.4 98.1M188.4 98.1L209.6 94.8M209.6 94.8L236.0 90.8M236.0 90.8L269.7 85.6M269.7 85.6L314.2 78.8M202.5 105.0L219.5 103.1M219.5 103.1L239.6 100.9M239.6 100.9L263.6 98.3M263.6 98.3L292.7 95.1M292.7 95.1L328.9 91.1M328.9 91.1L375.0 86.1M375.0 86.1L435.8 79.4M241.7 106.7L260.3 105.1M260.3 105.1L281.9 103.3M281.9 103.3L307.3 101.1M307.3 101.1L337.7 98.5M337.7 98.5L374.5 95.4M374.5 95.4L420.1 91.5M420.1 91.5L478.2 86.5M478.2 86.5L554.5 80.0M275.4 108.2L295.0 106.8M295.0 106.8L317.4 105.3M317.4 105.3L343.5 103.4M343.5 103.4L374.2 101.3M374.2 101.3L410.7 98.7M410.7 98.7L455.0 95.6M455.0 95.6L509.7 91.8M509.7 91.8L579.2 86.9M579.2 86.9L670.4 80.5M304.8 109.5L324.9 108.3M324.9 108.3L347.7 106.9M347.7 106.9L374.0 105.4M374.0 105.4L404.4 103.6M404.4 103.6L440.1 101.5M440.1 101.5L482.7 98.9M482.7 98.9L534.2 95.9M534.2 95.9L597.8 92.1M597.8 92.1L678.3 87.3M678.3 87.3L783.6 81.1M330.5 110.6L350.8 109.6M350.8 109.6L373.8 108.4M373.8 108.4L399.9 107.1M399.9 107.1L429.8 105.5M429.8 105.5L464.6 103.7M464.6 103.7L505.3 101.6M505.3 101.6L553.6 99.1M553.6 99.1L612.1 96.1M612.1 96.1L684.3 92.4M684.3 92.4L775.4 87.7M353.3 111.6L373.7 110.7M373.7 110.7L396.5 109.7M396.5 109.7L422.3 108.5M422.3 108.5L451.6 107.2M451.6 107.2L485.1 105.6M485.1 105.6L524.0 103.9M524.0 103.9L569.5 101.8M569.5 101.8L623.6 99.3M623.6 99.3L688.9 96.4M688.9 96.4L769.2 92.7M373.6 112.5L393.9 111.7M393.9 111.7L416.5 110.8M416.5 110.8L441.8 109.7M441.8 109.7L470.3 108.6M470.3 108.6L502.7 107.3M502.7 107.3L539.8 105.8M539.8 105.8L582.7 104.0M582.7 104.0L633.0 102.0M633.0 102.0L692.6 99.5M692.6 99.5L764.4 96.6M391.8 113.3L411.9 112.6M411.9 112.6L434.2 111.8M434.2 111.8L458.9 110.8M458.9 110.8L486.6 109.8M486.6 109.8L517.9 108.7M517.9 108.7L553.3 107.4M553.3 107.4L593.9 105.9M593.9 105.9L640.8 104.2M640.8 104.2L695.6 102.1M695.6 102.1L760.6 99.7M408.2 114.0L428.1 113.4M428.1 113.4L449.9 112.6M449.9 112.6L474.1 111.8M474.1 111.8L501.0 110.9M501.0 110.9L531.1 109.9M531.1 109.9L565.0 108.8M565.0 108.8L603.4 107.5M603.4 107.5L647.3 106.0M647.3 106.0L698.1 104.3M698.1 104.3L757.4 102.3M423.1 114.7L442.6 114.1M442.6 114.1L464.1 113.4M464.1 113.4L487.7 112.7M487.7 112.7L513.8 111.9M513.8 111.9L542.8 111.0M542.8 111.0L575.2 110.0M575.2 110.0L611.6 108.9M611.6 108.9L653.0 107.6M653.0 107.6L700.2 106.1M700.2 106.1L754.8 104.4M436.6 115.3L455.9 114.7M455.9 114.7L476.9 114.1M476.9 114.1L499.9 113.5M499.9 113.5L525.1 112.7M525.1 112.7L553.1 111.9M553.1 111.9L584.1 111.1M584.1 111.1L618.8 110.1M618.8 110.1L657.9 108.9M657.9 108.9L702.1 107.7M702.1 107.7L752.6 106.2M449.0 115.8L467.9 115.3M467.9 115.3L488.4 114.8M488.4 114.8L510.8 114.2M510.8 114.2L535.4 113.5M535.4 113.5L562.3 112.8M562.3 112.8L592.1 112.0M592.1 112.0L625.2 111.1M625.2 111.1L662.1 110.1M662.1 110.1L703.7 109.0M703.7 109.0L750.7 107.8M460.4 116.3L478.9 115.9M478.9 115.9L499.0 115.4M499.0 115.4L520.8 114.8M520.8 114.8L544.6 114.2M544.6 114.2L570.6 113.6M570.6 113.6L599.2 112.9M599.2 112.9L630.8 112.1M630.8 112.1L665.9 111.2M665.9 111.2L705.0 110.2M705.0 110.2L749.0 109.1M470.8 116.8L489.0 116.4M489.0 116.4L508.7 115.9M508.7 115.9L529.9 115.4M529.9 115.4L553.0 114.9M553.0 114.9L578.1 114.3M578.1 114.3L605.6 113.6M605.6 113.6L635.9 112.9M635.9 112.9L669.2 112.1M669.2 112.1L706.3 111.3M706.3 111.3L747.6 110.3M480.5 117.2L498.3 116.8M498.3 116.8L517.5 116.4M517.5 116.4L538.2 115.9M538.2 115.9L560.6 115.4M560.6 115.4L584.9 114.9M584.9 114.9L611.4 114.3M611.4 114.3L640.4 113.7M640.4 113.7L672.2 113.0M672.2 113.0L707.4 112.2M707.4 112.2L746.3 111.3M489.5 117.6L506.9 117.2M506.9 117.2L525.7 116.9M525.7 116.9L545.8 116.4M545.8 116.4L567.6 116.0M567.6 116.0L591.1 115.5M591.1 115.5L616.7 114.9M616.7 114.9L644.5 114.4M644.5 114.4L674.9 113.7M674.9 113.7L708.3 113.0M708.3 113.0L745.2 112.3M497.8 118.0L514.9 117.6M514.9 117.6L533.2 117.3M533.2 117.3L552.9 116.9M552.9 116.9L574.0 116.5M574.0 116.5L596.8 116.0M596.8 116.0L621.5 115.5M621.5 115.5L648.2 115.0M648.2 115.0L677.4 114.4M677.4 114.4L709.2 113.8M709.2 113.8L744.2 113.1M505.6 118.3L522.3 118.0M522.3 118.0L540.2 117.7M540.2 117.7L559.4 117.3M559.4 117.3L579.9 116.9M579.9 116.9L602.0 116.5M602.0 116.5L625.9 116.0M625.9 116.0L651.6 115.6M651.6 115.6L679.6 115.0M679.6 115.0L710.0 114.5M710.0 114.5L743.2 113.8M512.8 118.6L529.3 118.3M529.3 118.3L546.8 118.0M546.8 118.0L565.4 117.7M565.4 117.7L585.4 117.3M585.4 117.3L606.8 116.9M606.8 116.9L629.9 116.5M629.9 116.5L654.7 116.1M654.7 116.1L681.6 115.6M681.6 115.6L710.7 115.1M710.7 115.1L742.4 114.5M519.6 118.9L535.7 118.7M535.7 118.7L552.8 118.4M552.8 118.4L571.0 118.0M571.0 118.0L590.5 117.7M590.5 117.7L611.3 117.4M611.3 117.4L633.6 117.0M633.6 117.0L657.6 116.6M657.6 116.6L683.4 116.1M683.4 116.1L711.4 115.6M711.4 115.6L741.7 115.1M526.0 119.2L541.8 119.0M541.8 119.0L558.5 118.7M558.5 118.7L576.3 118.4M576.3 118.4L595.2 118.1M595.2 118.1L615.4 117.7M615.4 117.7L637.1 117.4M637.1 117.4L660.2 117.0M660.2 117.0L685.1 116.6M685.1 116.6L712.0 116.1M712.0 116.1L741.0 115.7" stroke="#ffe2ec" stroke-width="1.2" stroke-opacity="0.06" fill="none"/>
<path d="M-81.3 66.7L62.0 77.6M-100.0 51.3L75.7 67.6M75.7 67.6L189.7 78.2M96.0 52.7L228.0 68.5M228.0 68.5L314.2 78.8M129.6 28.1L284.8 54.1M284.8 54.1L375.9 69.4M375.9 69.4L435.8 79.4M377.9 30.5L466.9 55.4M466.9 55.4L519.6 70.2M519.6 70.2L554.5 80.0M614.6 32.8L642.5 56.7M642.5 56.7L659.2 71.0M659.2 71.0L670.4 80.5M62.0 77.6L75.7 67.6M75.7 67.6L96.0 52.7M189.7 78.2L228.0 68.5M228.0 68.5L284.8 54.1M284.8 54.1L377.9 30.5M314.2 78.8L375.9 69.4M375.9 69.4L466.9 55.4M466.9 55.4L614.6 32.8M435.8 79.4L519.6 70.2M519.6 70.2L642.5 56.7M642.5 56.7L840.4 35.0M554.5 80.0L659.2 71.0M659.2 71.0L812.1 57.9M670.4 80.5L795.0 71.8" stroke="#ffe2ec" stroke-width="1.2" stroke-opacity="0.12" fill="none"/>
<path d="M-131.2 25.6L96.0 52.7M96.0 52.7L129.6 28.1" stroke="#ffe2ec" stroke-width="1.2" stroke-opacity="0.18" fill="none"/>
<path d="M78.6 97.6h4.3M92.2 99.3h4.1M56.9 96.1h4.5M105.8 100.7h3.9M110.0 100.5h3.9M142.0 100.7h3.9M148.9 101.8h3.7M127.8 99.4h4.1M160.9 103.0h3.6M168.3 103.0h3.6M189.7 102.9h3.6M199.7 104.0h3.4M178.9 101.9h3.7M204.9 105.1h3.3M210.1 105.0h3.3M236.4 105.1h3.3M239.5 105.8h3.2M225.8 104.1h3.4M242.5 106.8h3.0M248.4 106.7h3.0M271.2 106.7h3.0M276.5 107.5h2.9M266.2 105.9h3.1M277.9 108.3h2.8M282.5 108.2h2.8M301.7 108.2h2.8M305.6 108.9h2.7M298.8 107.5h2.9M305.8 109.5h2.6M310.3 109.5h2.6M330.2 109.6h2.6M333.5 110.0h2.6M326.9 108.9h2.7M333.6 110.6h2.5M338.3 110.6h2.5M356.1 110.6h2.5M354.9 111.1h2.4M355.8 111.6h2.3M360.3 111.7h2.3M376.2 111.6h2.3M373.9 111.1h2.4M373.7 112.5h2.2M379.7 112.5h2.2M396.5 112.6h2.2M393.2 112.9h2.1M392.2 113.3h2.1M397.8 113.3h2.1M411.8 112.9h2.1M408.6 114.1h2.0M429.1 114.1h2.0M428.6 113.7h2.0M442.1 114.7h2.0M440.1 115.0h2.0M454.5 115.2h2.0M452.8 115.5h2.0M454.5 115.1h2.0M450.1 115.8h2.0M453.0 115.9h2.0M464.7 115.8h2.0M462.9 116.1h2.0M461.2 116.4h2.0M464.4 116.4h2.0M475.8 116.3h2.0M473.1 116.6h2.0M472.0 116.8h2.0M473.9 116.8h2.0M486.2 116.8h2.0M484.5 117.0h2.0M487.8 116.5h2.0M483.4 117.2h2.0M495.1 117.2h2.0M490.4 117.6h2.0M501.6 117.8h2.0M511.6 118.0h2.0M509.2 118.1h2.0M518.4 118.3h2.0M516.2 118.5h2.0M514.1 118.6h2.0M526.2 118.5h2.0M519.2 118.9h2.0M51.5 94.1h4.8M83.8 94.1h4.8M102.1 96.1h4.5M69.3 92.3h5.1M112.5 97.9h4.3M121.3 97.9h4.3M155.5 97.8h4.3M165.3 99.3h4.1M137.6 96.4h4.5M176.7 100.8h3.9M180.0 100.7h3.9M210.0 100.7h3.9M215.6 101.9h3.7M196.9 99.5h4.1M220.1 103.1h3.5M227.9 103.1h3.5M255.4 103.2h3.5M259.1 104.1h3.4M246.9 102.2h3.7M261.3 105.1h3.3M268.1 105.0h3.3M292.7 105.1h3.3M296.9 106.1h3.1M287.0 104.3h3.4M298.4 107.0h3.0M303.4 106.8h3.0M323.5 106.9h3.0M325.8 107.6h2.9M319.5 106.0h3.1M327.0 108.3h2.8M333.5 108.3h2.8M353.5 108.4h2.8M355.0 109.0h2.7M349.0 107.6h2.9M353.5 109.6h2.6M357.3 109.6h2.6M375.5 109.6h2.6M376.9 110.1h2.6M374.8 108.9h2.7M373.8 110.7h2.5M397.9 110.7h2.5M396.1 110.1h2.5M397.3 111.7h2.3M417.2 111.7h2.3M415.2 111.2h2.4M412.5 112.6h2.2M433.6 112.5h2.2M433.2 112.2h2.2M430.7 113.4h2.1M432.9 113.4h2.1M447.8 113.4h2.1M447.6 113.0h2.1M448.6 114.1h2.0M463.0 114.1h2.0M461.7 114.7h2.0M472.6 115.0h2.0M475.2 114.4h2.0M467.8 115.3h2.0M482.5 115.6h2.0M486.8 115.1h2.0M479.3 115.9h2.0M497.0 115.9h2.0M497.2 115.6h2.0M492.9 116.4h2.0M505.3 116.3h2.0M513.6 116.9h2.0M510.7 117.1h2.0M508.2 117.2h2.0M520.8 117.2h2.0M519.1 117.5h2.0M522.9 117.0h2.0M515.3 117.7h2.0M518.8 117.6h2.0M528.2 117.6h2.0M523.0 118.0h2.0M525.4 118.0h2.0M536.8 118.0h2.0M537.5 117.8h2.0M532.7 118.3h2.0M538.9 118.5h2.0M538.1 118.7h2.0M549.6 118.5h2.0M50.9 90.5h5.3M56.7 90.0h5.4M101.5 90.2h5.4M112.5 92.1h5.1M73.7 87.3h5.8M130.2 94.5h4.8M139.1 94.9h4.7M172.3 94.6h4.8M183.2 96.3h4.5M158.0 93.0h5.0M190.3 98.1h4.2M200.2 98.3h4.2M231.5 98.0h4.3M237.5 99.4h4.1M217.7 96.5h4.5M242.5 101.1h3.8M247.6 100.9h3.9M277.5 100.9h3.9M280.5 102.1h3.7M269.3 99.8h4.0M286.1 103.4h3.5M291.4 103.5h3.5M314.4 103.3h3.5M317.8 104.4h3.4M310.0 102.2h3.7M321.3 105.2h3.2M328.4 105.3h3.2M349.5 105.3h3.2M349.2 106.2h3.1M346.3 104.3h3.4M347.7 107.0h3.0M356.9 107.0h3.0M377.0 106.9h3.0M378.1 107.7h2.9M372.9 106.2h3.1M377.3 108.5h2.8M381.2 108.5h2.8M401.5 108.4h2.8M400.5 109.0h2.7M400.0 107.7h2.9M398.2 109.6h2.6M403.9 109.7h2.6M422.9 109.7h2.6M421.0 109.0h2.7M417.9 110.8h2.5M423.1 110.7h2.5M441.8 110.8h2.4M439.2 111.3h2.4M441.8 110.2h2.5M457.7 111.8h2.3M456.2 111.3h2.4M450.0 112.7h2.2M472.7 112.7h2.2M468.9 113.1h2.1M473.5 112.2h2.2M465.5 113.4h2.1M468.4 113.5h2.1M481.7 114.2h2.0M493.6 114.5h2.0M489.7 114.8h2.0M494.3 114.8h2.0M507.3 114.8h2.0M508.5 114.5h2.0M499.4 115.4h2.0M503.4 115.4h2.0M518.0 115.4h2.0M518.5 115.1h2.0M525.0 115.9h2.0M522.6 116.1h2.0M518.1 116.4h2.0M536.6 116.2h2.0M530.2 116.9h2.0M534.0 117.3h2.0M544.4 117.5h2.0M540.2 117.7h2.0M554.2 117.7h2.0M547.7 118.0h2.0M560.9 118.0h2.0M557.0 118.2h2.0M563.6 118.5h2.0M568.7 118.2h2.0M58.2 84.6h6.0M65.6 84.4h6.0M115.0 85.1h6.0M135.0 87.7h5.7M91.0 81.3h6.0M144.8 90.2h5.4M153.1 90.6h5.3M193.8 90.4h5.3M201.6 92.8h5.0M175.5 88.0h5.7M213.4 95.0h4.7M224.7 95.0h4.7M258.5 95.1h4.7M261.9 96.7h4.5M246.4 93.0h5.0M267.2 98.3h4.2M272.5 98.3h4.2M302.9 98.3h4.2M306.9 99.7h4.0M299.6 96.8h4.4M310.2 101.2h3.8M318.8 101.3h3.8M347.3 101.1h3.8M347.0 102.2h3.7M340.2 99.8h4.0M347.7 103.4h3.5M354.3 103.4h3.5M376.3 103.5h3.5M379.4 104.5h3.3M375.2 102.3h3.7M377.1 105.4h3.2M384.1 105.3h3.2M405.5 105.6h3.2M403.2 106.3h3.1M406.1 104.5h3.4M402.4 107.1h3.0M407.0 107.1h3.0M429.8 107.0h3.0M425.7 107.8h2.9M429.4 106.2h3.1M423.8 108.6h2.8M430.8 108.5h2.8M449.4 108.5h2.8M447.0 109.1h2.7M450.8 107.8h2.9M442.4 109.8h2.6M448.4 109.8h2.6M468.2 109.7h2.6M464.3 110.3h2.5M467.1 109.2h2.7M460.3 110.8h2.4M465.7 110.8h2.4M482.0 110.9h2.4M479.9 111.4h2.4M484.4 110.4h2.5M476.7 111.8h2.3M479.9 111.8h2.3M497.7 111.4h2.4M509.2 112.7h2.2M507.0 113.1h2.1M512.1 112.3h2.2M504.6 113.5h2.1M519.5 113.5h2.1M517.0 113.9h2.0M522.2 113.1h2.1M520.4 114.8h2.0M546.9 115.4h2.0M544.7 115.6h2.0M543.0 115.9h2.0M554.8 116.0h2.0M550.4 116.2h2.0M557.3 115.7h2.0M546.3 116.4h2.0M558.9 116.6h2.0M554.7 116.9h2.0M557.5 116.9h2.0M568.1 116.9h2.0M570.8 116.7h2.0M563.8 117.3h2.0M573.3 117.3h2.0M576.2 117.1h2.0M566.2 117.7h2.0M568.6 117.7h2.0M572.0 118.1h2.0M575.2 118.0h2.0M581.6 118.2h2.0M586.5 117.9h2.0M74.6 78.3h6.0M77.5 77.6h6.0M128.6 77.7h6.0M151.3 82.0h6.0M111.3 73.0h6.0M167.3 85.0h6.0M175.5 84.9h6.0M221.9 85.0h6.0M231.9 88.0h5.7M205.0 81.9h6.0M239.4 90.8h5.3M249.6 91.0h5.3M288.8 90.7h5.3M294.8 92.8h5.0M276.7 88.3h5.6M296.8 94.9h4.7M305.7 95.1h4.7M338.8 94.8h4.7M341.9 96.7h4.5M332.5 92.9h5.0M340.8 98.5h4.2M346.5 98.5h4.2M379.4 98.8h4.2M378.1 99.9h4.0M377.0 96.9h4.4M376.8 101.3h3.8M382.0 101.3h3.8M410.9 101.3h3.8M410.2 102.4h3.6M408.7 100.0h4.0M406.6 103.7h3.5M413.0 103.7h3.5M440.4 103.5h3.5M436.6 104.7h3.3M436.2 102.6h3.6M433.6 105.6h3.2M436.9 105.5h3.2M461.6 105.5h3.2M458.4 106.2h3.1M461.5 104.6h3.3M455.9 107.2h3.0M460.0 107.2h3.0M482.8 107.2h3.0M475.6 107.9h2.9M481.2 106.4h3.1M473.6 108.6h2.8M476.1 108.6h2.8M497.8 108.5h2.8M494.5 109.2h2.7M497.7 107.9h2.9M488.3 109.8h2.6M492.1 109.8h2.6M511.5 109.8h2.6M513.3 109.2h2.7M506.5 111.0h2.4M524.6 111.0h2.4M519.2 111.4h2.4M526.9 110.4h2.5M531.4 112.3h2.2M538.3 111.5h2.3M526.2 112.7h2.2M531.0 112.8h2.2M542.9 113.1h2.1M549.2 112.4h2.2M550.5 113.9h2.0M558.1 113.1h2.1M548.8 114.2h2.0M563.4 114.3h2.0M560.3 114.6h2.0M567.3 113.9h2.0M555.1 114.9h2.0M570.7 114.9h2.0M575.2 114.5h2.0M566.1 115.4h2.0M577.2 115.5h2.0M573.4 115.7h2.0M571.1 116.0h2.0M583.7 116.0h2.0M580.2 116.2h2.0M587.5 115.7h2.0M578.0 116.5h2.0M590.0 116.5h2.0M592.7 116.3h2.0M579.8 116.9h2.0M583.3 116.9h2.0M596.1 116.9h2.0M601.1 117.3h2.0M602.4 117.1h2.0M589.9 117.7h2.0M593.9 117.7h2.0M601.1 117.9h2.0M606.5 117.5h2.0M182.4 73.9h6.0M198.1 79.1h6.0M210.5 79.0h6.0M262.9 78.7h6.0M263.8 82.2h6.0M244.3 73.9h6.0M273.6 85.6h6.0M285.7 85.6h6.0M325.7 85.7h6.0M333.3 88.9h5.6M319.9 82.6h6.0M333.8 91.6h5.2M342.8 90.8h5.3M381.2 91.5h5.2M377.7 93.3h4.9M375.2 88.5h5.6M376.6 95.6h4.6M387.5 95.1h4.7M422.5 95.3h4.6M418.9 96.9h4.4M418.4 93.6h4.9M411.9 98.8h4.2M421.2 99.0h4.1M450.7 98.7h4.2M449.0 100.0h4.0M450.0 97.4h4.4M443.4 101.5h3.8M450.5 101.4h3.8M479.0 101.4h3.8M472.6 102.8h3.6M476.7 100.3h3.9M468.3 103.9h3.4M472.4 103.7h3.5M499.9 103.8h3.4M492.9 104.7h3.3M501.9 102.7h3.6M488.0 105.6h3.2M493.9 105.5h3.2M516.4 105.7h3.2M512.0 106.5h3.1M520.3 104.8h3.3M503.6 107.3h2.9M510.0 107.3h3.0M531.8 107.3h2.9M527.9 107.9h2.9M534.2 106.5h3.1M518.7 108.7h2.7M525.9 108.7h2.8M544.8 108.8h2.7M539.4 109.2h2.7M549.5 108.0h2.8M531.8 110.0h2.6M536.1 110.0h2.6M554.4 109.9h2.6M552.0 110.4h2.5M560.2 109.4h2.6M545.5 111.0h2.4M562.0 111.5h2.4M569.8 110.5h2.5M555.8 111.9h2.3M559.3 112.0h2.3M570.3 112.4h2.2M564.0 112.8h2.2M567.9 112.8h2.2M582.6 112.8h2.2M579.8 113.2h2.1M587.8 112.3h2.2M570.7 113.6h2.0M574.8 113.6h2.1M591.8 113.6h2.1M594.2 113.2h2.1M578.7 114.3h2.0M583.7 114.3h2.0M596.3 114.3h2.0M586.2 114.9h2.0M603.0 114.9h2.0M599.2 115.2h2.0M611.9 115.2h2.0M597.0 116.1h2.0M601.6 116.0h2.0M614.5 116.0h2.0M609.5 116.2h2.0M616.6 115.8h2.0M602.3 116.5h2.0M606.5 116.5h2.0M612.8 116.7h2.0M608.3 116.9h2.0M609.7 116.9h2.0M611.8 117.3h2.0M615.2 117.4h2.0M318.8 73.7h6.0M322.7 79.0h6.0M334.6 78.5h6.0M385.6 79.0h6.0M386.7 82.9h6.0M378.4 74.6h6.0M383.1 86.2h5.9M387.8 86.2h6.0M432.1 86.1h6.0M430.0 89.3h5.5M435.2 83.0h6.0M422.2 91.3h5.2M432.4 91.4h5.2M471.1 91.8h5.2M465.6 93.7h4.9M469.9 89.0h5.6M455.5 95.7h4.6M470.4 95.7h4.6M501.3 95.8h4.6M493.5 97.5h4.3M502.3 93.9h4.9M484.0 99.0h4.1M493.4 98.9h4.1M525.4 99.1h4.1M517.4 100.1h4.0M524.9 97.6h4.3M509.8 101.7h3.7M516.9 101.6h3.8M541.4 101.6h3.7M536.3 102.8h3.6M547.8 100.3h3.9M524.5 103.9h3.4M531.5 103.9h3.4M559.7 103.9h3.4M551.9 104.8h3.3M562.4 102.8h3.6M542.4 105.7h3.2M548.7 105.8h3.2M571.1 105.8h3.2M562.2 106.6h3.0M574.0 105.0h3.3M555.5 107.5h2.9M560.1 107.4h2.9M583.2 107.3h2.9M573.6 108.2h2.8M585.4 106.7h3.0M567.1 108.8h2.7M570.6 108.9h2.7M590.8 108.8h2.7M597.7 108.0h2.8M575.9 110.0h2.6M599.0 110.0h2.6M593.9 110.5h2.5M605.3 109.4h2.7M585.2 111.1h2.4M608.0 111.1h2.4M600.0 111.6h2.3M612.1 110.6h2.5M594.9 112.0h2.3M607.7 112.4h2.2M620.7 111.6h2.3M599.5 112.9h2.1M604.6 112.9h2.2M619.7 112.9h2.1M613.7 113.2h2.1M624.1 112.5h2.2M609.7 113.6h2.0M624.2 113.6h2.0M620.4 113.9h2.0M625.5 114.6h2.0M634.1 114.0h2.0M620.4 115.0h2.0M635.6 115.0h2.0M628.0 115.2h2.0M638.4 114.7h2.0M622.6 115.5h2.0M626.5 115.5h2.0M632.6 115.8h2.0M644.2 115.2h2.0M642.0 116.1h2.0M638.2 116.3h2.0M647.3 115.8h2.0M630.1 116.5h2.0M648.9 116.3h2.0M635.5 117.0h2.0M637.8 117.0h2.0M648.1 117.0h2.0M643.6 117.2h2.0M652.3 116.8h2.0M452.0 75.1h6.0M440.3 79.1h6.0M456.3 79.1h6.0M502.3 79.8h6.0M491.9 83.7h6.0M515.8 75.2h6.0M480.3 86.6h5.9M497.9 86.6h5.9M540.6 86.6h5.9M525.1 89.0h5.6M546.6 83.6h6.0M510.5 91.9h5.1M522.4 92.1h5.1M560.2 91.6h5.2M549.4 93.9h4.9M570.2 89.4h5.5M535.4 95.9h4.6M544.0 96.1h4.5M579.5 95.8h4.6M569.8 97.3h4.4M588.7 93.8h4.9M556.8 99.1h4.1M561.9 99.2h4.1M595.7 99.2h4.1M584.6 100.4h3.9M603.1 97.4h4.3M570.8 102.0h3.7M579.7 101.9h3.7M606.4 101.7h3.7M595.4 103.0h3.6M613.8 100.7h3.9M586.4 104.0h3.4M593.1 104.0h3.4M618.6 103.9h3.4M609.0 104.9h3.3M625.2 103.0h3.6M597.2 105.8h3.2M599.8 105.9h3.1M626.5 105.8h3.2M617.1 106.6h3.0M631.9 105.1h3.3M604.8 107.4h2.9M611.8 107.4h2.9M632.4 107.5h2.9M623.5 108.2h2.8M638.3 106.8h3.0M614.5 108.9h2.7M617.5 109.0h2.7M639.1 108.8h2.7M628.7 109.5h2.6M644.6 108.2h2.8M622.0 110.1h2.5M627.4 110.1h2.5M645.6 110.1h2.5M636.9 110.5h2.5M651.2 109.5h2.6M631.2 111.2h2.4M640.2 111.6h2.3M631.6 112.1h2.3M652.9 112.1h2.3M644.2 112.6h2.2M660.3 111.6h2.3M637.1 112.9h2.1M642.4 112.9h2.2M655.5 113.0h2.1M648.4 113.3h2.1M662.8 112.5h2.2M645.2 113.7h2.0M652.9 114.1h2.0M664.7 113.3h2.1M644.4 114.4h2.0M650.5 114.4h2.0M663.1 114.4h2.0M656.5 114.7h2.0M648.1 115.0h2.0M653.6 115.0h2.0M667.6 114.9h2.0M659.2 115.3h2.0M671.0 114.7h2.0M652.2 115.6h2.0M668.0 115.6h2.0M662.3 115.9h2.0M673.3 115.3h2.0M659.1 116.1h2.0M672.5 116.1h2.0M666.5 116.3h2.0M674.7 115.8h2.0M657.4 116.6h2.0M673.5 116.6h2.0M667.2 116.8h2.0M583.3 75.3h6.0M557.8 80.0h6.0M572.0 80.5h6.0M626.6 79.8h6.0M600.5 83.8h6.0M641.8 75.2h6.0M580.5 87.1h5.8M592.8 86.8h5.9M633.8 86.9h5.9M618.9 89.5h5.5M648.3 83.9h6.0M600.0 92.2h5.1M610.6 91.9h5.1M644.0 92.3h5.1M632.2 94.4h4.8M657.5 90.2h5.4M612.6 96.3h4.5M625.9 96.2h4.5M654.9 96.4h4.5M639.1 97.9h4.3M672.4 94.3h4.8M625.1 99.4h4.1M633.5 99.4h4.1M666.3 99.2h4.1M652.1 100.7h3.9M673.5 98.1h4.3M637.6 101.9h3.7M641.6 102.0h3.7M669.6 102.0h3.7M657.0 103.2h3.5M678.9 101.0h3.8M642.5 104.1h3.4M648.0 104.2h3.4M675.6 104.1h3.4M664.4 105.0h3.3M686.3 103.0h3.6M649.7 106.1h3.1M653.9 106.1h3.1M676.2 106.1h3.1M667.2 106.8h3.0M687.3 105.2h3.2M654.9 107.6h2.9M661.7 107.6h2.9M681.2 107.5h2.9M673.1 108.2h2.8M691.3 106.8h3.0M658.5 109.0h2.7M665.3 108.9h2.7M686.2 108.9h2.7M675.2 109.6h2.6M692.9 108.4h2.8M662.6 110.2h2.5M668.7 110.2h2.5M688.0 110.1h2.5M679.5 110.6h2.5M693.8 109.6h2.6M667.1 111.3h2.4M670.8 111.3h2.4M690.8 111.1h2.4M678.7 111.7h2.3M696.0 110.7h2.5M669.6 112.1h2.3M674.8 112.2h2.2M684.6 112.5h2.2M673.5 113.0h2.1M678.7 113.0h2.1M691.9 113.0h2.1M685.3 113.3h2.1M674.7 113.7h2.0M679.1 113.8h2.0M695.5 113.7h2.0M688.0 114.0h2.0M700.7 113.4h2.1M678.2 114.4h2.0M703.3 114.1h2.0M684.5 115.1h2.0M698.7 115.0h2.0M689.1 115.3h2.0M682.6 115.6h2.0M704.9 115.3h2.0M683.4 116.1h2.0M699.7 116.1h2.0M692.7 116.4h2.0M709.2 76.5h6.0M675.0 80.6h6.0M691.6 80.5h6.0M706.5 84.1h6.0M685.3 87.2h5.8M693.1 87.6h5.8M713.6 89.9h5.4M685.3 92.4h5.1M693.8 92.6h5.0M714.1 94.5h4.8M690.0 96.3h4.5M697.7 96.6h4.5M716.4 98.1h4.3M697.7 99.4h4.1M700.3 99.8h4.0M718.1 100.7h3.9M694.9 102.4h3.6M706.5 102.1h3.7M718.1 103.1h3.5M701.2 104.4h3.4M707.0 104.4h3.4M715.1 105.3h3.2M699.6 106.3h3.1M709.1 106.1h3.1M719.2 106.9h3.0M703.7 107.8h2.9M708.0 107.7h2.9M719.0 108.4h2.8M705.7 109.0h2.7M708.8 109.0h2.7M708.3 110.2h2.5M710.4 110.3h2.5M712.7 111.3h2.4M712.0 112.3h2.2M710.6 113.0h2.1M720.2 113.4h2.1M715.1 113.8h2.0M720.6 114.1h2.0M714.0 114.4h2.0M714.6 115.1h2.0M719.8 115.4h2.0M712.4 115.6h2.0M716.0 115.6h2.0" stroke="#ffe4d6" stroke-width="1.300" stroke-opacity=".5" fill="none"/>
<path d="M342.4 278.1L351.4 274.6M351.4 274.6L360.0 271.2M376.3 277.6L384.5 274.1M410.0 277.1L417.4 273.6M436.6 280.2L443.5 276.6M443.5 276.6L450.0 273.1M470.7 279.7L476.7 276.1M476.7 276.1L482.5 272.7M504.5 279.2L509.7 275.6M509.7 275.6L514.7 272.2M538.1 278.7L542.6 275.1M542.6 275.1L546.8 271.7M571.5 278.2L575.2 274.7M575.2 274.7L578.6 271.3M604.7 277.7L607.5 274.2M607.5 274.2L610.2 270.8M637.6 277.2L639.7 273.7M669.0 280.3L670.4 276.7M670.4 276.7L671.7 273.2M360.0 271.2L368.0 274.3M368.0 274.3L376.3 277.6M401.0 273.9L410.0 277.1M433.7 273.4L443.5 276.6M443.5 276.6L453.7 280.0M466.3 272.9L476.7 276.1M476.7 276.1L487.6 279.5M498.6 272.4L509.7 275.6M509.7 275.6L521.4 278.9M530.8 272.0L542.6 275.1M542.6 275.1L554.9 278.4M562.7 271.5L575.2 274.7M575.2 274.7L588.1 277.9M594.4 271.1L607.5 274.2M607.5 274.2L621.2 277.4M639.7 273.7L654.0 276.9" stroke="#ffe2ec" stroke-width="1.0" stroke-opacity="0.34" fill="none"/>
<path d="M499.8 216.5L503.0 215.2M503.0 215.2L506.1 214.0M506.1 214.0L509.1 212.8M516.6 217.5L519.5 216.3M519.5 216.3L522.4 215.0M503.0 215.2L509.7 216.4M509.7 216.4L516.6 217.5M509.1 212.8L515.7 213.9M515.7 213.9L522.4 215.0M522.4 215.0L529.4 216.2M529.4 216.2L536.5 217.4" stroke="#ffe2ec" stroke-width="1.2" stroke-opacity="0.09" fill="none"/>
<path d="M433.6 242.4L438.9 240.3M438.9 240.3L444.0 238.3M444.0 238.3L448.9 236.4M448.9 236.4L453.6 234.6M453.6 234.6L458.2 232.8M458.2 232.8L462.6 231.0M462.6 231.0L466.8 229.4M466.8 229.4L471.0 227.8M471.0 227.8L475.0 226.2M475.0 226.2L478.9 224.7M478.9 224.7L482.6 223.2M482.6 223.2L486.3 221.8M486.3 221.8L489.8 220.4M489.8 220.4L493.3 219.0M493.3 219.0L496.6 217.7M496.6 217.7L499.8 216.5M459.3 242.1L464.1 240.0M464.1 240.0L468.7 238.1M468.7 238.1L473.1 236.2M473.1 236.2L477.4 234.3M477.4 234.3L481.6 232.5M481.6 232.5L485.6 230.8M485.6 230.8L489.5 229.1M489.5 229.1L493.3 227.5M493.3 227.5L496.9 226.0M496.9 226.0L500.4 224.5M500.4 224.5L503.9 223.0M503.9 223.0L507.2 221.6M507.2 221.6L510.4 220.2M510.4 220.2L513.5 218.8M513.5 218.8L516.6 217.5M480.3 243.9L484.8 241.8M484.8 241.8L489.1 239.8M489.1 239.8L493.3 237.8M493.3 237.8L497.3 235.9M497.3 235.9L501.2 234.1M501.2 234.1L504.9 232.3M504.9 232.3L508.5 230.6M508.5 230.6L512.0 228.9M512.0 228.9L515.4 227.3M515.4 227.3L518.7 225.8M518.7 225.8L521.9 224.3M521.9 224.3L525.0 222.8M525.0 222.8L528.0 221.4M528.0 221.4L530.9 220.0M530.9 220.0L533.8 218.7M533.8 218.7L536.5 217.4M506.2 243.6L510.2 241.5M510.2 241.5L514.0 239.5M514.0 239.5L517.7 237.5M517.7 237.5L521.3 235.6M521.3 235.6L524.8 233.8M524.8 233.8L528.1 232.0M528.1 232.0L531.4 230.3M531.4 230.3L534.5 228.7M534.5 228.7L537.5 227.1M537.5 227.1L540.5 225.5M540.5 225.5L543.3 224.0M543.3 224.0L546.1 222.6M546.1 222.6L548.8 221.2M548.8 221.2L551.4 219.8M531.9 243.3L535.4 241.2M535.4 241.2L538.8 239.2M538.8 239.2L542.1 237.2M542.1 237.2L545.2 235.4M545.2 235.4L548.3 233.6M548.3 233.6L551.2 231.8M551.2 231.8L554.1 230.1M554.1 230.1L556.8 228.5M556.8 228.5L559.5 226.9M559.5 226.9L562.1 225.3M562.1 225.3L564.6 223.8M564.6 223.8L567.1 222.4M557.5 243.0L560.5 240.9M560.5 240.9L563.5 238.9M563.5 238.9L566.3 237.0M566.3 237.0L569.0 235.1M569.0 235.1L571.7 233.3M571.7 233.3L574.2 231.6M574.2 231.6L576.7 229.9M576.7 229.9L579.1 228.2M579.1 228.2L581.4 226.7M581.4 226.7L583.6 225.1M582.9 242.7L585.5 240.6M585.5 240.6L588.0 238.6M588.0 238.6L590.4 236.7M590.4 236.7L592.7 234.9M592.7 234.9L595.0 233.1M595.0 233.1L597.1 231.3M597.1 231.3L599.2 229.6M599.2 229.6L601.2 228.0M608.3 242.4L610.4 240.4M610.4 240.4L612.4 238.4M612.4 238.4L614.4 236.5M614.4 236.5L616.3 234.6M616.3 234.6L618.1 232.8M618.1 232.8L619.9 231.1M633.5 242.1L635.1 240.1M635.1 240.1L636.7 238.1M636.7 238.1L638.3 236.2M638.3 236.2L639.7 234.3M658.5 241.8L659.7 239.8M659.7 239.8L660.9 237.8M682.7 243.6L683.5 241.5M438.9 240.3L446.5 242.2M448.9 236.4L456.3 238.2M456.3 238.2L464.1 240.0M464.1 240.0L472.1 241.9M458.2 232.8L465.5 234.4M465.5 234.4L473.1 236.2M473.1 236.2L481.0 237.9M481.0 237.9L489.1 239.8M489.1 239.8L497.5 241.6M497.5 241.6L506.2 243.6M466.8 229.4L474.1 230.9M474.1 230.9L481.6 232.5M481.6 232.5L489.3 234.2M489.3 234.2L497.3 235.9M497.3 235.9L505.5 237.7M505.5 237.7L514.0 239.5M514.0 239.5L522.8 241.4M522.8 241.4L531.9 243.3M475.0 226.2L482.1 227.6M482.1 227.6L489.5 229.1M489.5 229.1L497.1 230.7M497.1 230.7L504.9 232.3M504.9 232.3L513.0 233.9M513.0 233.9L521.3 235.6M521.3 235.6L529.9 237.4M529.9 237.4L538.8 239.2M538.8 239.2L548.0 241.1M548.0 241.1L557.5 243.0M482.6 223.2L489.7 224.6M489.7 224.6L496.9 226.0M496.9 226.0L504.4 227.4M504.4 227.4L512.0 228.9M512.0 228.9L520.0 230.5M520.0 230.5L528.1 232.0M528.1 232.0L536.5 233.7M536.5 233.7L545.2 235.4M545.2 235.4L554.2 237.1M554.2 237.1L563.5 238.9M563.5 238.9L573.0 240.8M573.0 240.8L582.9 242.7M489.8 220.4L496.7 221.7M496.7 221.7L503.9 223.0M503.9 223.0L511.2 224.4M511.2 224.4L518.7 225.8M518.7 225.8L526.5 227.2M526.5 227.2L534.5 228.7M534.5 228.7L542.7 230.2M542.7 230.2L551.2 231.8M551.2 231.8L560.0 233.4M560.0 233.4L569.0 235.1M569.0 235.1L578.4 236.9M578.4 236.9L588.0 238.6M588.0 238.6L598.0 240.5M598.0 240.5L608.3 242.4M496.6 217.7L503.4 218.9M503.4 218.9L510.4 220.2M510.4 220.2L517.6 221.5M517.6 221.5L525.0 222.8M525.0 222.8L532.6 224.1M532.6 224.1L540.5 225.5M540.5 225.5L548.5 227.0M548.5 227.0L556.8 228.5M556.8 228.5L565.4 230.0M565.4 230.0L574.2 231.6M574.2 231.6L583.3 233.2M583.3 233.2L592.7 234.9M592.7 234.9L602.4 236.6M602.4 236.6L612.4 238.4M612.4 238.4L622.8 240.2M622.8 240.2L633.5 242.1M516.6 217.5L523.7 218.8M523.7 218.8L530.9 220.0M530.9 220.0L538.4 221.3M538.4 221.3L546.1 222.6M546.1 222.6L554.0 223.9M554.0 223.9L562.1 225.3M562.1 225.3L570.5 226.8M570.5 226.8L579.1 228.2M579.1 228.2L588.0 229.8M588.0 229.8L597.1 231.3M597.1 231.3L606.6 232.9M606.6 232.9L616.3 234.6M616.3 234.6L626.3 236.3M626.3 236.3L636.7 238.1M636.7 238.1L647.4 239.9M647.4 239.9L658.5 241.8M658.5 241.8L670.0 243.8M536.5 217.4L543.8 218.6M543.8 218.6L551.4 219.8M551.4 219.8L559.1 221.1M559.1 221.1L567.1 222.4M567.1 222.4L575.2 223.7M575.2 223.7L583.6 225.1M583.6 225.1L592.3 226.5M592.3 226.5L601.2 228.0M601.2 228.0L610.4 229.5M610.4 229.5L619.9 231.1M619.9 231.1L629.7 232.7M629.7 232.7L639.7 234.3M639.7 234.3L650.2 236.1M650.2 236.1L660.9 237.8M660.9 237.8L672.0 239.7M672.0 239.7L683.5 241.5" stroke="#ffe2ec" stroke-width="1.2" stroke-opacity="0.17" fill="none"/>
<path d="M376.0 264.9L383.5 262.0M383.5 262.0L390.7 259.2M390.7 259.2L397.6 256.5M397.6 256.5L404.2 253.9M404.2 253.9L410.6 251.4M410.6 251.4L416.7 249.0M416.7 249.0L422.5 246.7M422.5 246.7L428.2 244.5M428.2 244.5L433.6 242.4M406.9 264.5L413.7 261.6M413.7 261.6L420.2 258.8M420.2 258.8L426.5 256.1M426.5 256.1L432.5 253.5M432.5 253.5L438.3 251.1M438.3 251.1L443.8 248.7M443.8 248.7L449.2 246.4M449.2 246.4L454.3 244.2M454.3 244.2L459.3 242.1M437.5 264.1L443.7 261.2M443.7 261.2L449.6 258.4M449.6 258.4L455.2 255.8M455.2 255.8L460.6 253.2M460.6 253.2L465.8 250.7M465.8 250.7L470.9 248.4M470.9 248.4L475.7 246.1M475.7 246.1L480.3 243.9M468.0 263.7L473.5 260.8M473.5 260.8L478.7 258.0M478.7 258.0L483.8 255.4M483.8 255.4L488.6 252.8M488.6 252.8L493.3 250.4M493.3 250.4L497.7 248.0M497.7 248.0L502.0 245.8M502.0 245.8L506.2 243.6M498.3 263.3L503.1 260.4M503.1 260.4L507.7 257.7M507.7 257.7L512.2 255.0M512.2 255.0L516.4 252.5M516.4 252.5L520.5 250.1M520.5 250.1L524.5 247.7M524.5 247.7L528.2 245.5M528.2 245.5L531.9 243.3M528.4 262.9L532.6 260.0M532.6 260.0L536.6 257.3M536.6 257.3L540.4 254.7M540.4 254.7L544.1 252.1M544.1 252.1L547.6 249.7M547.6 249.7L551.0 247.4M551.0 247.4L554.3 245.2M554.3 245.2L557.5 243.0M558.3 262.5L561.9 259.6M561.9 259.6L565.2 256.9M565.2 256.9L568.5 254.3M568.5 254.3L571.6 251.8M571.6 251.8L574.6 249.4M574.6 249.4L577.5 247.1M577.5 247.1L580.3 244.9M580.3 244.9L582.9 242.7M585.1 265.0L588.1 262.1M588.1 262.1L591.0 259.2M591.0 259.2L593.8 256.5M593.8 256.5L596.4 254.0M596.4 254.0L599.0 251.5M599.0 251.5L601.4 249.1M601.4 249.1L603.8 246.8M603.8 246.8L606.1 244.5M606.1 244.5L608.3 242.4M615.3 264.6L617.7 261.7M617.7 261.7L619.9 258.9M619.9 258.9L622.1 256.2M622.1 256.2L624.2 253.6M624.2 253.6L626.2 251.1M626.2 251.1L628.1 248.7M628.1 248.7L630.0 246.5M630.0 246.5L631.7 244.2M631.7 244.2L633.5 242.1M645.3 264.2L647.1 261.3M647.1 261.3L648.7 258.5M648.7 258.5L650.3 255.8M650.3 255.8L651.8 253.2M651.8 253.2L653.2 250.8M653.2 250.8L654.6 248.4M654.6 248.4L656.0 246.1M656.0 246.1L657.3 243.9M657.3 243.9L658.5 241.8M675.2 263.8L676.3 260.9M676.3 260.9L677.3 258.1M677.3 258.1L678.3 255.4M678.3 255.4L679.2 252.9M679.2 252.9L680.2 250.4M680.2 250.4L681.0 248.1M681.0 248.1L681.9 245.8M681.9 245.8L682.7 243.6M390.7 259.2L398.6 261.8M398.6 261.8L406.9 264.5M404.2 253.9L412.1 256.3M412.1 256.3L420.2 258.8M420.2 258.8L428.7 261.4M428.7 261.4L437.5 264.1M416.7 249.0L424.4 251.2M424.4 251.2L432.5 253.5M432.5 253.5L440.9 255.9M440.9 255.9L449.6 258.4M449.6 258.4L458.6 261.0M458.6 261.0L468.0 263.7M428.2 244.5L435.9 246.6M435.9 246.6L443.8 248.7M443.8 248.7L452.1 250.9M452.1 250.9L460.6 253.2M460.6 253.2L469.5 255.6M469.5 255.6L478.7 258.0M478.7 258.0L488.3 260.6M488.3 260.6L498.3 263.3M446.5 242.2L454.3 244.2M454.3 244.2L462.4 246.2M462.4 246.2L470.9 248.4M470.9 248.4L479.6 250.6M479.6 250.6L488.6 252.8M488.6 252.8L498.0 255.2M498.0 255.2L507.7 257.7M507.7 257.7L517.9 260.2M517.9 260.2L528.4 262.9M472.1 241.9L480.3 243.9M480.3 243.9L488.9 245.9M488.9 245.9L497.7 248.0M497.7 248.0L506.9 250.2M506.9 250.2L516.4 252.5M516.4 252.5L526.3 254.8M526.3 254.8L536.6 257.3M536.6 257.3L547.2 259.8M547.2 259.8L558.3 262.5M558.3 262.5L569.9 265.2M506.2 243.6L515.2 245.6M515.2 245.6L524.5 247.7M524.5 247.7L534.1 249.9M534.1 249.9L544.1 252.1M544.1 252.1L554.5 254.5M554.5 254.5L565.2 256.9M565.2 256.9L576.4 259.4M576.4 259.4L588.1 262.1M588.1 262.1L600.2 264.8M531.9 243.3L541.3 245.3M541.3 245.3L551.0 247.4M551.0 247.4L561.1 249.6M561.1 249.6L571.6 251.8M571.6 251.8L582.5 254.1M582.5 254.1L593.8 256.5M593.8 256.5L605.5 259.1M605.5 259.1L617.7 261.7M617.7 261.7L630.3 264.4M557.5 243.0L567.3 245.0M567.3 245.0L577.5 247.1M577.5 247.1L588.0 249.2M588.0 249.2L599.0 251.5M599.0 251.5L610.3 253.8M610.3 253.8L622.1 256.2M622.1 256.2L634.3 258.7M634.3 258.7L647.1 261.3M647.1 261.3L660.3 264.0M582.9 242.7L593.2 244.7M593.2 244.7L603.8 246.8M603.8 246.8L614.8 248.9M614.8 248.9L626.2 251.1M626.2 251.1L638.0 253.4M638.0 253.4L650.3 255.8M650.3 255.8L663.0 258.3M663.0 258.3L676.3 260.9M608.3 242.4L618.9 244.4M618.9 244.4L630.0 246.5M630.0 246.5L641.4 248.6M641.4 248.6L653.2 250.8M653.2 250.8L665.5 253.1M665.5 253.1L678.3 255.4M633.5 242.1L644.5 244.1M644.5 244.1L656.0 246.1M656.0 246.1L667.9 248.3M667.9 248.3L680.2 250.4M670.0 243.8L681.9 245.8" stroke="#ffe2ec" stroke-width="1.2" stroke-opacity="0.26" fill="none"/>
<path d="M360.0 271.2L368.2 268.0M368.2 268.0L376.0 264.9M384.5 274.1L392.3 270.8M392.3 270.8L399.7 267.6M399.7 267.6L406.9 264.5M417.4 273.6L424.4 270.3M424.4 270.3L431.1 267.1M431.1 267.1L437.5 264.1M450.0 273.1L456.3 269.9M456.3 269.9L462.3 266.7M462.3 266.7L468.0 263.7M482.5 272.7L488.0 269.4M488.0 269.4L493.3 266.3M493.3 266.3L498.3 263.3M514.7 272.2L519.5 269.0M519.5 269.0L524.1 265.8M524.1 265.8L528.4 262.9M546.8 271.7L550.8 268.5M550.8 268.5L554.7 265.4M554.7 265.4L558.3 262.5M578.6 271.3L581.9 268.1M581.9 268.1L585.1 265.0M610.2 270.8L612.8 267.6M612.8 267.6L615.3 264.6M639.7 273.7L641.7 270.4M641.7 270.4L643.5 267.2M643.5 267.2L645.3 264.2M671.7 273.2L672.9 269.9M672.9 269.9L674.1 266.8M674.1 266.8L675.2 263.8M376.0 264.9L384.0 267.8M384.0 267.8L392.3 270.8M392.3 270.8L401.0 273.9M406.9 264.5L415.4 267.4M415.4 267.4L424.4 270.3M424.4 270.3L433.7 273.4M437.5 264.1L446.7 266.9M446.7 266.9L456.3 269.9M456.3 269.9L466.3 272.9M468.0 263.7L477.8 266.5M477.8 266.5L488.0 269.4M488.0 269.4L498.6 272.4M498.3 263.3L508.7 266.1M508.7 266.1L519.5 269.0M519.5 269.0L530.8 272.0M528.4 262.9L539.4 265.6M539.4 265.6L550.8 268.5M550.8 268.5L562.7 271.5M569.9 265.2L581.9 268.1M581.9 268.1L594.4 271.1M600.2 264.8L612.8 267.6M612.8 267.6L626.0 270.6M626.0 270.6L639.7 273.7M630.3 264.4L643.5 267.2M643.5 267.2L657.3 270.1M657.3 270.1L671.7 273.2M660.3 264.0L674.1 266.8" stroke="#ffe2ec" stroke-width="1.2" stroke-opacity="0.34" fill="none"/>
<path d="M301.6 294.1L312.6 289.8M312.6 289.8L323.0 285.7M323.0 285.7L332.9 281.8M332.9 281.8L342.4 278.1M339.3 293.4L349.3 289.2M349.3 289.2L358.7 285.1M358.7 285.1L367.7 281.3M367.7 281.3L376.3 277.6M376.7 292.8L385.6 288.6M385.6 288.6L394.2 284.6M394.2 284.6L402.3 280.7M402.3 280.7L410.0 277.1M413.8 292.2L421.8 288.0M421.8 288.0L429.4 284.0M429.4 284.0L436.6 280.2M450.6 291.6L457.6 287.5M457.6 287.5L464.3 283.5M464.3 283.5L470.7 279.7M487.2 291.0L493.3 286.9M493.3 286.9L499.0 282.9M499.0 282.9L504.5 279.2M523.5 290.4L528.6 286.3M528.6 286.3L533.5 282.4M533.5 282.4L538.1 278.7M555.1 294.2L559.5 289.9M559.5 289.9L563.7 285.8M563.7 285.8L567.7 281.9M567.7 281.9L571.5 278.2M591.9 293.5L595.3 289.3M595.3 289.3L598.6 285.2M598.6 285.2L601.7 281.3M601.7 281.3L604.7 277.7M628.3 292.9L630.8 288.7M630.8 288.7L633.2 284.7M633.2 284.7L635.5 280.8M635.5 280.8L637.6 277.2M664.5 292.3L666.1 288.1M666.1 288.1L667.6 284.1M667.6 284.1L669.0 280.3M323.0 285.7L331.0 289.5M331.0 289.5L339.3 293.4M342.4 278.1L350.4 281.5M350.4 281.5L358.7 285.1M358.7 285.1L367.5 288.9M367.5 288.9L376.7 292.8M376.3 277.6L385.0 281.0M385.0 281.0L394.2 284.6M394.2 284.6L403.7 288.3M403.7 288.3L413.8 292.2M410.0 277.1L419.5 280.5M419.5 280.5L429.4 284.0M429.4 284.0L439.7 287.7M439.7 287.7L450.6 291.6M453.7 280.0L464.3 283.5M464.3 283.5L475.5 287.2M475.5 287.2L487.2 291.0M487.6 279.5L499.0 282.9M499.0 282.9L511.0 286.6M511.0 286.6L523.5 290.4M521.4 278.9L533.5 282.4M533.5 282.4L546.2 286.0M546.2 286.0L559.5 289.9M559.5 289.9L573.5 293.8M554.9 278.4L567.7 281.9M567.7 281.9L581.2 285.5M581.2 285.5L595.3 289.3M595.3 289.3L610.1 293.2M588.1 277.9L601.7 281.3M601.7 281.3L615.9 284.9M615.9 284.9L630.8 288.7M630.8 288.7L646.5 292.6M621.2 277.4L635.5 280.8M635.5 280.8L650.4 284.4M650.4 284.4L666.1 288.1M654.0 276.9L669.0 280.3" stroke="#ffe2ec" stroke-width="1.5" stroke-opacity="0.34" fill="none"/>
<path d="M187.0 338.9L204.6 332.0M204.6 332.0L221.1 325.6M221.1 325.6L236.6 319.5M236.6 319.5L251.1 313.8M251.1 313.8L264.9 308.5M264.9 308.5L277.8 303.4M277.8 303.4L290.0 298.6M290.0 298.6L301.6 294.1M235.4 337.9L251.3 331.1M251.3 331.1L266.3 324.7M266.3 324.7L280.3 318.7M280.3 318.7L293.5 313.1M293.5 313.1L305.9 307.7M305.9 307.7L317.7 302.7M317.7 302.7L328.8 298.0M328.8 298.0L339.3 293.4M283.2 337.0L297.6 330.2M297.6 330.2L311.0 323.9M311.0 323.9L323.6 317.9M323.6 317.9L335.5 312.3M335.5 312.3L346.7 307.0M346.7 307.0L357.2 302.0M357.2 302.0L367.2 297.3M367.2 297.3L376.7 292.8M330.7 336.0L343.4 329.3M343.4 329.3L355.3 323.0M355.3 323.0L366.6 317.1M366.6 317.1L377.1 311.5M377.1 311.5L387.1 306.3M387.1 306.3L396.5 301.3M396.5 301.3L405.4 296.7M405.4 296.7L413.8 292.2M365.7 342.1L377.7 335.0M377.7 335.0L388.8 328.4M388.8 328.4L399.3 322.1M399.3 322.1L409.2 316.3M409.2 316.3L418.4 310.8M418.4 310.8L427.2 305.6M427.2 305.6L435.4 300.7M435.4 300.7L443.2 296.0M443.2 296.0L450.6 291.6M413.9 341.1L424.2 334.1M424.2 334.1L433.9 327.5M433.9 327.5L442.9 321.3M442.9 321.3L451.4 315.5M451.4 315.5L459.4 310.0M459.4 310.0L466.9 304.9M466.9 304.9L474.1 300.0M474.1 300.0L480.8 295.4M480.8 295.4L487.2 291.0M461.7 340.1L470.4 333.1M470.4 333.1L478.5 326.6M478.5 326.6L486.1 320.5M486.1 320.5L493.3 314.7M493.3 314.7L500.0 309.3M500.0 309.3L506.4 304.2M506.4 304.2L512.4 299.4M512.4 299.4L518.1 294.8M518.1 294.8L523.5 290.4M509.0 339.1L516.1 332.2M516.1 332.2L522.7 325.7M522.7 325.7L528.9 319.6M528.9 319.6L534.8 313.9M534.8 313.9L540.3 308.6M540.3 308.6L545.5 303.5M545.5 303.5L550.5 298.7M550.5 298.7L555.1 294.2M555.8 338.1L561.4 331.2M561.4 331.2L566.5 324.8M566.5 324.8L571.4 318.8M571.4 318.8L576.0 313.2M576.0 313.2L580.3 307.8M580.3 307.8L584.4 302.8M584.4 302.8L588.2 298.0M588.2 298.0L591.9 293.5M602.2 337.1L606.2 330.3M606.2 330.3L610.0 324.0M610.0 324.0L613.5 318.0M613.5 318.0L616.8 312.4M616.8 312.4L620.0 307.1M620.0 307.1L622.9 302.1M622.9 302.1L625.7 297.4M625.7 297.4L628.3 292.9M648.2 336.1L650.7 329.4M650.7 329.4L653.1 323.1M653.1 323.1L655.3 317.2M655.3 317.2L657.3 311.6M657.3 311.6L659.3 306.4M659.3 306.4L661.1 301.4M661.1 301.4L662.9 296.8M662.9 296.8L664.5 292.3M221.1 325.6L228.0 331.6M228.0 331.6L235.4 337.9M251.1 313.8L258.5 319.1M258.5 319.1L266.3 324.7M266.3 324.7L274.5 330.6M274.5 330.6L283.2 337.0M277.8 303.4L285.4 308.1M285.4 308.1L293.5 313.1M293.5 313.1L302.0 318.3M302.0 318.3L311.0 323.9M311.0 323.9L320.5 329.7M320.5 329.7L330.7 336.0M301.6 294.1L309.4 298.3M309.4 298.3L317.7 302.7M317.7 302.7L326.3 307.4M326.3 307.4L335.5 312.3M335.5 312.3L345.1 317.5M345.1 317.5L355.3 323.0M355.3 323.0L366.2 328.8M366.2 328.8L377.7 335.0M377.7 335.0L389.9 341.6M339.3 293.4L348.0 297.6M348.0 297.6L357.2 302.0M357.2 302.0L366.9 306.7M366.9 306.7L377.1 311.5M377.1 311.5L387.9 316.7M387.9 316.7L399.3 322.1M399.3 322.1L411.4 327.9M411.4 327.9L424.2 334.1M424.2 334.1L437.9 340.6M376.7 292.8L386.3 297.0M386.3 297.0L396.5 301.3M396.5 301.3L407.1 305.9M407.1 305.9L418.4 310.8M418.4 310.8L430.3 315.9M430.3 315.9L442.9 321.3M442.9 321.3L456.2 327.0M456.2 327.0L470.4 333.1M470.4 333.1L485.4 339.6M413.8 292.2L424.3 296.3M424.3 296.3L435.4 300.7M435.4 300.7L447.1 305.2M447.1 305.2L459.4 310.0M459.4 310.0L472.4 315.1M472.4 315.1L486.1 320.5M486.1 320.5L500.6 326.2M500.6 326.2L516.1 332.2M516.1 332.2L532.5 338.6M450.6 291.6L462.0 295.7M462.0 295.7L474.1 300.0M474.1 300.0L486.7 304.5M486.7 304.5L500.0 309.3M500.0 309.3L514.1 314.3M514.1 314.3L528.9 319.6M528.9 319.6L544.7 325.3M544.7 325.3L561.4 331.2M561.4 331.2L579.1 337.6M487.2 291.0L499.5 295.1M499.5 295.1L512.4 299.4M512.4 299.4L526.0 303.8M526.0 303.8L540.3 308.6M540.3 308.6L555.4 313.6M555.4 313.6L571.4 318.8M571.4 318.8L588.3 324.4M588.3 324.4L606.2 330.3M606.2 330.3L625.3 336.6M523.5 290.4L536.6 294.5M536.6 294.5L550.5 298.7M550.5 298.7L565.0 303.2M565.0 303.2L580.3 307.8M580.3 307.8L596.5 312.8M596.5 312.8L613.5 318.0M613.5 318.0L631.6 323.6M631.6 323.6L650.7 329.4M573.5 293.8L588.2 298.0M588.2 298.0L603.7 302.5M603.7 302.5L620.0 307.1M620.0 307.1L637.1 312.0M637.1 312.0L655.3 317.2M610.1 293.2L625.7 297.4M625.7 297.4L642.1 301.8M642.1 301.8L659.3 306.4M646.5 292.6L662.9 296.8" stroke="#ffe2ec" stroke-width="1.5" stroke-opacity="0.43" fill="none"/>
<path d="M102.9 371.9L126.3 362.7M126.3 362.7L148.0 354.2M148.0 354.2L168.2 346.3M168.2 346.3L187.0 338.9M111.5 391.0L136.3 380.3M136.3 380.3L159.2 370.5M159.2 370.5L180.4 361.5M180.4 361.5L200.0 353.1M200.0 353.1L218.3 345.2M218.3 345.2L235.4 337.9M147.9 400.8L172.1 389.4M172.1 389.4L194.4 378.9M194.4 378.9L214.9 369.2M214.9 369.2L233.9 360.3M233.9 360.3L251.5 351.9M251.5 351.9L267.9 344.2M267.9 344.2L283.2 337.0M210.6 399.2L232.0 387.9M232.0 387.9L251.8 377.5M251.8 377.5L270.0 367.9M270.0 367.9L286.8 359.1M286.8 359.1L302.5 350.8M302.5 350.8L317.1 343.1M317.1 343.1L330.7 336.0M272.5 397.6L291.3 386.4M291.3 386.4L308.5 376.1M308.5 376.1L324.5 366.7M324.5 366.7L339.2 357.9M339.2 357.9L353.0 349.7M353.0 349.7L365.7 342.1M333.7 395.9L349.8 384.9M349.8 384.9L364.7 374.8M364.7 374.8L378.4 365.4M378.4 365.4L391.1 356.7M391.1 356.7L402.9 348.6M402.9 348.6L413.9 341.1M394.1 394.3L407.7 383.4M407.7 383.4L420.2 373.4M420.2 373.4L431.7 364.1M431.7 364.1L442.4 355.5M442.4 355.5L452.4 347.5M452.4 347.5L461.7 340.1M441.8 404.5L453.8 392.8M453.8 392.8L464.9 382.0M464.9 382.0L475.1 372.1M475.1 372.1L484.5 362.9M484.5 362.9L493.3 354.4M493.3 354.4L501.4 346.5M501.4 346.5L509.0 339.1M503.5 402.8L512.9 391.2M512.9 391.2L521.5 380.6M521.5 380.6L529.4 370.7M529.4 370.7L536.8 361.7M536.8 361.7L543.6 353.2M543.6 353.2L549.9 345.4M549.9 345.4L555.8 338.1M564.4 401.1L571.2 389.7M571.2 389.7L577.4 379.1M577.4 379.1L583.1 369.4M583.1 369.4L588.5 360.4M588.5 360.4L593.4 352.1M593.4 352.1L598.0 344.3M598.0 344.3L602.2 337.1M624.6 399.4L628.8 388.1M628.8 388.1L632.7 377.7M632.7 377.7L636.3 368.1M636.3 368.1L639.6 359.2M639.6 359.2L642.7 351.0M642.7 351.0L645.6 343.3M645.6 343.3L648.2 336.1M102.9 371.9L107.0 381.1M107.0 381.1L111.5 391.0M111.5 391.0L116.3 401.7M148.0 354.2L153.4 362.1M153.4 362.1L159.2 370.5M159.2 370.5L165.4 379.6M165.4 379.6L172.1 389.4M172.1 389.4L179.4 400.0M187.0 338.9L193.3 345.8M193.3 345.8L200.0 353.1M200.0 353.1L207.2 360.9M207.2 360.9L214.9 369.2M214.9 369.2L223.1 378.2M223.1 378.2L232.0 387.9M232.0 387.9L241.7 398.4M235.4 337.9L243.2 344.7M243.2 344.7L251.5 351.9M251.5 351.9L260.4 359.7M260.4 359.7L270.0 367.9M270.0 367.9L280.2 376.8M280.2 376.8L291.3 386.4M291.3 386.4L303.2 396.7M283.2 337.0L292.6 343.7M292.6 343.7L302.5 350.8M302.5 350.8L313.1 358.5M313.1 358.5L324.5 366.7M324.5 366.7L336.7 375.4M336.7 375.4L349.8 384.9M349.8 384.9L364.0 395.1M330.7 336.0L341.5 342.6M341.5 342.6L353.0 349.7M353.0 349.7L365.2 357.3M365.2 357.3L378.4 365.4M378.4 365.4L392.5 374.1M392.5 374.1L407.7 383.4M407.7 383.4L424.1 393.5M389.9 341.6L402.9 348.6M402.9 348.6L416.8 356.1M416.8 356.1L431.7 364.1M431.7 364.1L447.7 372.7M447.7 372.7L464.9 382.0M464.9 382.0L483.4 392.0M483.4 392.0L503.5 402.8M437.9 340.6L452.4 347.5M452.4 347.5L467.9 355.0M467.9 355.0L484.5 362.9M484.5 362.9L502.3 371.4M502.3 371.4L521.5 380.6M521.5 380.6L542.1 390.4M542.1 390.4L564.4 401.1M485.4 339.6L501.4 346.5M501.4 346.5L518.5 353.8M518.5 353.8L536.8 361.7M536.8 361.7L556.4 370.1M556.4 370.1L577.4 379.1M577.4 379.1L600.1 388.9M600.1 388.9L624.6 399.4M532.5 338.6L549.9 345.4M549.9 345.4L568.5 352.7M568.5 352.7L588.5 360.4M588.5 360.4L609.8 368.8M609.8 368.8L632.7 377.7M579.1 337.6L598.0 344.3M598.0 344.3L618.1 351.5M618.1 351.5L639.6 359.2M625.3 336.6L645.6 343.3" stroke="#ffe2ec" stroke-width="2.0" stroke-opacity="0.43" fill="none"/>
<path d="M121.5 413.3L147.9 400.8M133.5 439.8L161.6 425.0M161.6 425.0L187.2 411.5M187.2 411.5L210.6 399.2M178.0 453.8L205.1 437.6M205.1 437.6L229.7 423.0M229.7 423.0L252.1 409.7M252.1 409.7L272.5 397.6M252.5 451.4L275.8 435.5M275.8 435.5L296.9 421.1M296.9 421.1L316.1 407.9M316.1 407.9L333.7 395.9M304.3 466.5L325.9 449.1M325.9 449.1L345.5 433.4M345.5 433.4L363.2 419.2M363.2 419.2L379.4 406.2M379.4 406.2L394.1 394.3M380.7 464.0L398.3 446.8M398.3 446.8L414.2 431.3M414.2 431.3L428.7 417.3M428.7 417.3L441.8 404.5M456.0 461.4L469.7 444.5M469.7 444.5L482.1 429.3M482.1 429.3L493.3 415.4M493.3 415.4L503.5 402.8M530.2 459.0L540.1 442.3M540.1 442.3L549.0 427.3M549.0 427.3L557.1 413.6M557.1 413.6L564.4 401.1M603.4 456.5L609.5 440.1M609.5 440.1L615.0 425.3M615.0 425.3L620.0 411.8M620.0 411.8L624.6 399.4M116.3 401.7L121.5 413.3M121.5 413.3L127.2 426.0M127.2 426.0L133.5 439.8M133.5 439.8L140.3 455.0M179.4 400.0L187.2 411.5M187.2 411.5L195.8 424.0M195.8 424.0L205.1 437.6M205.1 437.6L215.4 452.6M241.7 398.4L252.1 409.7M252.1 409.7L263.4 422.0M263.4 422.0L275.8 435.5M275.8 435.5L289.3 450.3M289.3 450.3L304.3 466.5M303.2 396.7L316.1 407.9M316.1 407.9L330.2 420.1M330.2 420.1L345.5 433.4M345.5 433.4L362.3 447.9M362.3 447.9L380.7 464.0M364.0 395.1L379.4 406.2M379.4 406.2L396.0 418.2M396.0 418.2L414.2 431.3M414.2 431.3L434.1 445.7M434.1 445.7L456.0 461.4M424.1 393.5L441.8 404.5M441.8 404.5L461.1 416.3M461.1 416.3L482.1 429.3M482.1 429.3L505.0 443.4M505.0 443.4L530.2 459.0M503.5 402.8L525.3 414.5M525.3 414.5L549.0 427.3M549.0 427.3L574.9 441.2M574.9 441.2L603.4 456.5M564.4 401.1L588.6 412.7M588.6 412.7L615.0 425.3" stroke="#ffe2ec" stroke-width="2.5" stroke-opacity="0.43" fill="none"/>
<path d="M147.8 471.7L178.0 453.8M165.5 510.9L197.8 488.8M197.8 488.8L226.6 469.1M226.6 469.1L252.5 451.4M253.0 507.6L280.1 485.9M280.1 485.9L304.3 466.5M314.3 528.6L339.1 504.4M339.1 504.4L361.1 483.0M361.1 483.0L380.7 464.0M404.6 525.0L423.8 501.3M423.8 501.3L440.8 480.2M440.8 480.2L456.0 461.4M493.3 521.5L507.1 498.2M507.1 498.2L519.3 477.5M519.3 477.5L530.2 459.0M580.4 518.1L589.0 495.2M589.0 495.2L596.6 474.8M596.6 474.8L603.4 456.5M140.3 455.0L147.8 471.7M147.8 471.7L156.2 490.2M156.2 490.2L165.5 510.9M215.4 452.6L226.6 469.1M226.6 469.1L239.1 487.3M239.1 487.3L253.0 507.6M253.0 507.6L268.6 530.4M304.3 466.5L320.8 484.5M320.8 484.5L339.1 504.4M339.1 504.4L359.7 526.8M380.7 464.0L401.1 481.6M401.1 481.6L423.8 501.3M423.8 501.3L449.1 523.3M456.0 461.4L480.2 478.9M480.2 478.9L507.1 498.2M507.1 498.2L537.0 519.8M530.2 459.0L558.1 476.1M558.1 476.1L589.0 495.2" stroke="#ffe2ec" stroke-width="3.0" stroke-opacity="0.43" fill="none"/>
<path d="M187.6 560.2L222.4 532.2M222.4 532.2L253.0 507.6M253.8 587.5L286.2 556.0M286.2 556.0L314.3 528.6M357.8 582.8L382.8 552.0M382.8 552.0L404.6 525.0M459.8 578.3L477.7 548.0M477.7 548.0L493.3 521.5M559.7 573.8L570.7 544.1M570.7 544.1L580.4 518.1M165.5 510.9L175.9 534.0M175.9 534.0L187.6 560.2M187.6 560.2L201.0 589.9M268.6 530.4L286.2 556.0M286.2 556.0L306.1 585.2M359.7 526.8L382.8 552.0M382.8 552.0L409.1 580.5M449.1 523.3L477.7 548.0M477.7 548.0L510.0 576.0M537.0 519.8L570.7 544.1" stroke="#ffe2ec" stroke-width="3.5" stroke-opacity="0.43" fill="none"/>
<g fill="#fff6f4" stroke="#fff6f4" stroke-opacity=".25" stroke-width=".9"><polygon points="509.4,213.1 510.6,213.3 510.4,213.3 509.2,213.2" fill-opacity="0.35"/><polygon points="509.1,213.2 511.1,213.5 510.8,213.6 508.8,213.3" fill-opacity="0.35"/><polygon points="508.8,213.3 510.5,213.6 510.3,213.7 508.6,213.4" fill-opacity="0.35"/><polygon points="503.3,215.5 504.5,215.7 504.3,215.7 503.1,215.5" fill-opacity="0.35"/><polygon points="503.0,215.6 505.0,215.9 504.8,216.0 502.8,215.7" fill-opacity="0.35"/><polygon points="502.7,215.7 504.4,216.0 504.2,216.1 502.4,215.8" fill-opacity="0.36"/><polygon points="496.9,218.0 498.2,218.2 497.9,218.3 496.7,218.1" fill-opacity="0.36"/><polygon points="496.6,218.1 498.6,218.5 498.3,218.6 496.3,218.2" fill-opacity="0.36"/><polygon points="496.2,218.3 498.0,218.6 497.7,218.7 496.0,218.4" fill-opacity="0.36"/><polygon points="490.2,220.6 491.4,220.9 491.1,221.0 489.9,220.7" fill-opacity="0.36"/><polygon points="489.8,220.8 491.8,221.2 491.6,221.3 489.5,220.9" fill-opacity="0.36"/><polygon points="489.4,220.9 491.2,221.3 490.9,221.4 489.1,221.0" fill-opacity="0.36"/><polygon points="482.9,223.5 484.2,223.7 483.9,223.8 482.7,223.6" fill-opacity="0.36"/><polygon points="482.5,223.6 484.6,224.0 484.3,224.2 482.2,223.8" fill-opacity="0.36"/><polygon points="482.1,223.8 483.9,224.2 483.7,224.3 481.9,223.9" fill-opacity="0.36"/><polygon points="475.3,226.5 476.6,226.7 476.3,226.9 475.0,226.6" fill-opacity="0.37"/><polygon points="474.9,226.7 477.0,227.1 476.7,227.2 474.5,226.8" fill-opacity="0.37"/><polygon points="474.4,226.8 476.3,227.2 476.0,227.3 474.1,226.9" fill-opacity="0.37"/><polygon points="467.1,229.7 468.4,230.0 468.1,230.1 466.8,229.8" fill-opacity="0.37"/><polygon points="466.7,229.9 468.8,230.3 468.5,230.5 466.3,230.0" fill-opacity="0.37"/><polygon points="466.2,230.1 468.1,230.5 467.8,230.6 465.9,230.2" fill-opacity="0.37"/><polygon points="458.4,233.1 459.7,233.4 459.4,233.5 458.1,233.2" fill-opacity="0.38"/><polygon points="457.9,233.3 460.1,233.8 459.8,234.0 457.6,233.5" fill-opacity="0.38"/><polygon points="457.4,233.5 459.3,233.9 459.0,234.1 457.1,233.6" fill-opacity="0.38"/><polygon points="449.1,236.8 450.4,237.1 450.1,237.2 448.8,236.9" fill-opacity="0.38"/><polygon points="448.6,237.0 450.8,237.5 450.4,237.7 448.2,237.1" fill-opacity="0.38"/><polygon points="448.1,237.2 450.0,237.7 449.6,237.8 447.7,237.3" fill-opacity="0.38"/><polygon points="439.1,240.7 440.5,241.0 440.1,241.2 438.8,240.8" fill-opacity="0.38"/><polygon points="438.6,240.9 440.8,241.5 440.4,241.7 438.1,241.1" fill-opacity="0.39"/><polygon points="438.0,241.2 439.9,241.7 439.6,241.8 437.6,241.3" fill-opacity="0.39"/><polygon points="428.4,244.9 429.8,245.3 429.4,245.4 428.0,245.1" fill-opacity="0.39"/><polygon points="427.8,245.2 430.1,245.8 429.6,246.0 427.3,245.3" fill-opacity="0.39"/><polygon points="427.2,245.4 429.2,245.9 428.8,246.1 426.8,245.6" fill-opacity="0.39"/><polygon points="416.8,249.5 418.2,249.9 417.8,250.0 416.4,249.6" fill-opacity="0.40"/><polygon points="416.2,249.7 418.5,250.4 418.0,250.6 415.7,249.9" fill-opacity="0.40"/><polygon points="415.5,250.0 417.5,250.6 417.1,250.7 415.1,250.2" fill-opacity="0.40"/><polygon points="404.3,254.4 405.7,254.8 405.3,255.0 403.9,254.6" fill-opacity="0.40"/><polygon points="403.6,254.7 405.9,255.4 405.4,255.6 403.1,254.9" fill-opacity="0.40"/><polygon points="402.9,255.0 404.9,255.6 404.5,255.8 402.4,255.1" fill-opacity="0.40"/><polygon points="390.8,259.7 392.2,260.2 391.7,260.4 390.3,259.9" fill-opacity="0.41"/><polygon points="390.0,260.0 392.3,260.8 391.8,261.0 389.4,260.2" fill-opacity="0.41"/><polygon points="389.2,260.3 391.3,261.0 390.8,261.2 388.7,260.5" fill-opacity="0.41"/><polygon points="376.0,265.5 377.4,266.0 376.9,266.2 375.5,265.7" fill-opacity="0.41"/><polygon points="375.2,265.9 377.5,266.7 376.9,267.0 374.6,266.1" fill-opacity="0.42"/><polygon points="374.3,266.2 376.4,266.9 375.8,267.1 373.8,266.4" fill-opacity="0.42"/><polygon points="359.9,271.9 361.3,272.4 360.7,272.6 359.3,272.1" fill-opacity="0.42"/><polygon points="359.0,272.2 361.4,273.2 360.7,273.4 358.3,272.5" fill-opacity="0.42"/><polygon points="358.0,272.6 360.1,273.4 359.5,273.6 357.5,272.8" fill-opacity="0.42"/><polygon points="342.2,278.8 343.7,279.4 343.0,279.7 341.6,279.1" fill-opacity="0.43"/><polygon points="341.2,279.2 343.6,280.2 342.8,280.5 340.5,279.5" fill-opacity="0.43"/><polygon points="340.2,279.6 342.2,280.5 341.6,280.8 339.5,279.9" fill-opacity="0.43"/><polygon points="322.8,286.5 324.2,287.1 323.5,287.4 322.1,286.7" fill-opacity="0.44"/><polygon points="321.7,286.9 324.0,288.0 323.2,288.4 320.8,287.2" fill-opacity="0.44"/><polygon points="320.5,287.3 322.6,288.3 321.8,288.6 319.8,287.6" fill-opacity="0.44"/><polygon points="301.3,294.9 302.6,295.7 301.8,296.0 300.5,295.2" fill-opacity="0.45"/><polygon points="300.0,295.4 302.3,296.7 301.4,297.0 299.1,295.8" fill-opacity="0.45"/><polygon points="298.7,295.9 300.7,297.0 299.9,297.3 297.9,296.2" fill-opacity="0.45"/><polygon points="277.3,304.3 278.6,305.2 277.7,305.5 276.4,304.7" fill-opacity="0.46"/><polygon points="275.9,304.9 278.1,306.3 277.1,306.7 274.9,305.3" fill-opacity="0.46"/><polygon points="274.5,305.4 276.4,306.7 275.5,307.0 273.6,305.8" fill-opacity="0.46"/><polygon points="250.4,314.9 251.7,315.8 250.7,316.2 249.4,315.3" fill-opacity="0.47"/><polygon points="248.9,315.5 251.0,317.1 249.9,317.6 247.7,316.0" fill-opacity="0.48"/><polygon points="247.3,316.1 249.2,317.5 248.1,317.9 246.3,316.5" fill-opacity="0.48"/><polygon points="220.2,326.8 221.4,327.9 220.3,328.3 219.1,327.2" fill-opacity="0.49"/><polygon points="218.4,327.5 220.4,329.3 219.1,329.8 217.1,328.0" fill-opacity="0.49"/><polygon points="216.6,328.2 218.4,329.8 217.2,330.2 215.5,328.6" fill-opacity="0.49"/><polygon points="185.8,340.3 186.9,341.5 185.6,342.0 184.5,340.8" fill-opacity="0.50"/><polygon points="183.8,341.1 185.6,343.2 184.1,343.8 182.3,341.7" fill-opacity="0.51"/><polygon points="181.8,341.9 183.3,343.7 182.0,344.2 180.4,342.4" fill-opacity="0.51"/><polygon points="146.4,355.8 147.4,357.2 145.9,357.8 145.0,356.4" fill-opacity="0.52"/><polygon points="144.1,356.7 145.7,359.1 143.9,359.8 142.4,357.4" fill-opacity="0.52"/><polygon points="141.8,357.6 143.1,359.7 141.6,360.3 140.2,358.2" fill-opacity="0.53"/><polygon points="522.8,215.3 524.1,215.5 523.9,215.6 522.6,215.4" fill-opacity="0.35"/><polygon points="522.5,215.4 524.6,215.8 524.4,215.9 522.3,215.5" fill-opacity="0.35"/><polygon points="522.2,215.6 524.0,215.8 523.8,215.9 522.0,215.6" fill-opacity="0.35"/><polygon points="517.0,217.8 518.3,218.0 518.0,218.1 516.8,217.9" fill-opacity="0.36"/><polygon points="516.7,217.9 518.8,218.3 518.5,218.4 516.4,218.0" fill-opacity="0.36"/><polygon points="516.3,218.1 518.2,218.4 517.9,218.5 516.1,218.2" fill-opacity="0.36"/><polygon points="510.8,220.5 512.1,220.7 511.9,220.8 510.6,220.5" fill-opacity="0.36"/><polygon points="510.5,220.6 512.6,221.0 512.4,221.1 510.2,220.7" fill-opacity="0.36"/><polygon points="510.1,220.8 512.0,221.1 511.7,221.2 509.9,220.8" fill-opacity="0.36"/><polygon points="504.3,223.3 505.6,223.5 505.3,223.6 504.0,223.4" fill-opacity="0.36"/><polygon points="503.9,223.4 506.1,223.8 505.8,224.0 503.6,223.5" fill-opacity="0.36"/><polygon points="503.5,223.6 505.4,223.9 505.2,224.1 503.3,223.7" fill-opacity="0.36"/><polygon points="497.3,226.3 498.6,226.5 498.4,226.6 497.0,226.4" fill-opacity="0.37"/><polygon points="496.9,226.4 499.1,226.9 498.8,227.0 496.6,226.6" fill-opacity="0.37"/><polygon points="496.5,226.6 498.4,227.0 498.2,227.1 496.2,226.7" fill-opacity="0.37"/><polygon points="489.9,229.5 491.2,229.7 490.9,229.9 489.6,229.6" fill-opacity="0.37"/><polygon points="489.4,229.6 491.7,230.1 491.4,230.2 489.1,229.8" fill-opacity="0.37"/><polygon points="489.0,229.8 491.0,230.2 490.7,230.3 488.7,229.9" fill-opacity="0.37"/><polygon points="481.9,232.9 483.3,233.2 483.0,233.3 481.6,233.0" fill-opacity="0.38"/><polygon points="481.5,233.1 483.8,233.6 483.5,233.7 481.2,233.2" fill-opacity="0.38"/><polygon points="481.0,233.3 483.0,233.7 482.7,233.8 480.7,233.4" fill-opacity="0.38"/><polygon points="473.5,236.5 474.9,236.8 474.6,237.0 473.2,236.6" fill-opacity="0.38"/><polygon points="473.0,236.7 475.3,237.3 475.0,237.4 472.6,236.9" fill-opacity="0.38"/><polygon points="472.5,236.9 474.5,237.4 474.2,237.5 472.2,237.1" fill-opacity="0.38"/><polygon points="464.4,240.4 465.8,240.8 465.5,240.9 464.1,240.6" fill-opacity="0.38"/><polygon points="463.9,240.6 466.2,241.2 465.9,241.4 463.5,240.8" fill-opacity="0.38"/><polygon points="463.3,240.9 465.4,241.4 465.1,241.5 463.0,241.0" fill-opacity="0.39"/><polygon points="454.6,244.6 456.1,245.0 455.7,245.1 454.3,244.8" fill-opacity="0.39"/><polygon points="454.1,244.9 456.5,245.5 456.1,245.6 453.7,245.0" fill-opacity="0.39"/><polygon points="453.5,245.1 455.6,245.6 455.2,245.8 453.1,245.3" fill-opacity="0.39"/><polygon points="444.1,249.1 445.6,249.5 445.2,249.7 443.7,249.3" fill-opacity="0.40"/><polygon points="443.5,249.4 446.0,250.1 445.5,250.3 443.1,249.6" fill-opacity="0.40"/><polygon points="442.9,249.7 445.0,250.2 444.6,250.4 442.5,249.8" fill-opacity="0.40"/><polygon points="432.7,254.0 434.2,254.5 433.8,254.6 432.3,254.2" fill-opacity="0.40"/><polygon points="432.1,254.3 434.6,255.0 434.1,255.2 431.6,254.5" fill-opacity="0.40"/><polygon points="431.4,254.6 433.6,255.2 433.2,255.4 431.0,254.8" fill-opacity="0.40"/><polygon points="420.4,259.3 421.9,259.8 421.5,260.0 420.0,259.5" fill-opacity="0.41"/><polygon points="419.7,259.6 422.2,260.4 421.7,260.6 419.2,259.9" fill-opacity="0.41"/><polygon points="419.0,259.9 421.2,260.6 420.7,260.8 418.5,260.1" fill-opacity="0.41"/><polygon points="407.0,265.1 408.5,265.6 408.0,265.8 406.5,265.3" fill-opacity="0.41"/><polygon points="406.2,265.4 408.8,266.3 408.2,266.5 405.7,265.7" fill-opacity="0.41"/><polygon points="405.5,265.8 407.7,266.5 407.2,266.7 405.0,266.0" fill-opacity="0.42"/><polygon points="392.4,271.4 393.9,271.9 393.4,272.2 391.8,271.6" fill-opacity="0.42"/><polygon points="391.5,271.8 394.1,272.7 393.5,273.0 390.9,272.0" fill-opacity="0.42"/><polygon points="390.7,272.1 392.9,272.9 392.4,273.2 390.1,272.4" fill-opacity="0.42"/><polygon points="376.3,278.3 377.9,278.9 377.3,279.2 375.7,278.5" fill-opacity="0.43"/><polygon points="375.4,278.7 378.0,279.7 377.3,280.0 374.7,279.0" fill-opacity="0.43"/><polygon points="374.5,279.1 376.7,280.0 376.1,280.2 373.9,279.3" fill-opacity="0.43"/><polygon points="358.7,285.9 360.2,286.6 359.6,286.8 358.0,286.2" fill-opacity="0.44"/><polygon points="357.6,286.3 360.2,287.5 359.5,287.8 356.9,286.7" fill-opacity="0.44"/><polygon points="356.6,286.8 358.9,287.8 358.2,288.0 355.9,287.1" fill-opacity="0.44"/><polygon points="339.1,294.3 340.7,295.0 339.9,295.4 338.4,294.6" fill-opacity="0.45"/><polygon points="338.0,294.8 340.6,296.0 339.7,296.4 337.1,295.1" fill-opacity="0.45"/><polygon points="336.8,295.3 339.1,296.4 338.3,296.7 336.1,295.6" fill-opacity="0.45"/><polygon points="317.4,303.7 318.9,304.5 318.1,304.8 316.6,304.0" fill-opacity="0.46"/><polygon points="316.1,304.2 318.7,305.6 317.7,306.0 315.2,304.6" fill-opacity="0.46"/><polygon points="314.8,304.7 317.0,306.0 316.2,306.3 314.0,305.1" fill-opacity="0.46"/><polygon points="293.0,314.1 294.5,315.1 293.6,315.4 292.1,314.5" fill-opacity="0.47"/><polygon points="291.6,314.7 294.1,316.3 293.1,316.8 290.6,315.2" fill-opacity="0.47"/><polygon points="290.2,315.3 292.3,316.7 291.4,317.1 289.3,315.7" fill-opacity="0.47"/><polygon points="265.6,325.9 267.1,327.0 266.0,327.4 264.6,326.4" fill-opacity="0.49"/><polygon points="264.0,326.6 266.4,328.4 265.2,328.9 262.8,327.1" fill-opacity="0.49"/><polygon points="262.4,327.3 264.5,328.9 263.4,329.3 261.3,327.8" fill-opacity="0.49"/><polygon points="234.5,339.3 235.8,340.5 234.7,341.0 233.3,339.8" fill-opacity="0.50"/><polygon points="232.6,340.1 234.9,342.1 233.6,342.7 231.3,340.7" fill-opacity="0.50"/><polygon points="230.8,340.9 232.8,342.7 231.6,343.2 229.6,341.4" fill-opacity="0.51"/><polygon points="198.8,354.6 200.1,356.0 198.7,356.6 197.5,355.2" fill-opacity="0.52"/><polygon points="196.7,355.5 198.8,357.9 197.2,358.6 195.2,356.2" fill-opacity="0.52"/><polygon points="194.6,356.5 196.4,358.5 195.0,359.1 193.2,357.1" fill-opacity="0.52"/><polygon points="157.6,372.4 158.7,374.0 157.1,374.7 156.0,373.0" fill-opacity="0.54"/><polygon points="155.1,373.4 156.9,376.2 155.1,376.9 153.3,374.2" fill-opacity="0.55"/><polygon points="152.7,374.5 154.2,376.9 152.6,377.6 151.1,375.2" fill-opacity="0.55"/><polygon points="537.0,217.6 538.3,217.8 538.1,217.9 536.8,217.7" fill-opacity="0.36"/><polygon points="536.7,217.8 538.9,218.1 538.6,218.2 536.4,217.9" fill-opacity="0.36"/><polygon points="536.4,217.9 538.3,218.2 538.1,218.3 536.2,218.0" fill-opacity="0.36"/><polygon points="531.4,220.3 532.7,220.5 532.5,220.6 531.2,220.4" fill-opacity="0.36"/><polygon points="531.1,220.4 533.3,220.8 533.1,220.9 530.8,220.5" fill-opacity="0.36"/><polygon points="530.7,220.6 532.7,220.9 532.5,221.0 530.5,220.7" fill-opacity="0.36"/><polygon points="525.5,223.1 526.8,223.3 526.6,223.4 525.3,223.2" fill-opacity="0.36"/><polygon points="525.1,223.2 527.4,223.6 527.2,223.8 524.9,223.3" fill-opacity="0.36"/><polygon points="524.8,223.4 526.8,223.7 526.5,223.8 524.6,223.5" fill-opacity="0.36"/><polygon points="519.2,226.1 520.6,226.3 520.3,226.4 518.9,226.2" fill-opacity="0.37"/><polygon points="518.8,226.2 521.1,226.7 520.9,226.8 518.6,226.3" fill-opacity="0.37"/><polygon points="518.5,226.4 520.5,226.8 520.2,226.9 518.2,226.5" fill-opacity="0.37"/><polygon points="512.5,229.2 513.9,229.5 513.6,229.6 512.2,229.3" fill-opacity="0.37"/><polygon points="512.1,229.4 514.5,229.9 514.2,230.0 511.8,229.5" fill-opacity="0.37"/><polygon points="511.7,229.6 513.8,230.0 513.5,230.1 511.5,229.7" fill-opacity="0.37"/><polygon points="505.3,232.6 506.8,232.9 506.5,233.0 505.1,232.7" fill-opacity="0.38"/><polygon points="504.9,232.8 507.3,233.3 507.0,233.5 504.6,233.0" fill-opacity="0.38"/><polygon points="504.5,233.0 506.6,233.4 506.3,233.6 504.3,233.1" fill-opacity="0.38"/><polygon points="497.7,236.3 499.2,236.6 498.9,236.7 497.4,236.4" fill-opacity="0.38"/><polygon points="497.3,236.5 499.7,237.0 499.4,237.1 496.9,236.6" fill-opacity="0.38"/><polygon points="496.8,236.7 498.9,237.1 498.7,237.3 496.5,236.8" fill-opacity="0.38"/><polygon points="489.5,240.1 491.0,240.5 490.7,240.6 489.2,240.3" fill-opacity="0.38"/><polygon points="489.0,240.4 491.5,240.9 491.2,241.1 488.7,240.5" fill-opacity="0.38"/><polygon points="488.6,240.6 490.7,241.1 490.4,241.2 488.3,240.7" fill-opacity="0.38"/><polygon points="480.7,244.3 482.2,244.7 481.9,244.8 480.4,244.5" fill-opacity="0.39"/><polygon points="480.2,244.6 482.7,245.2 482.4,245.3 479.8,244.7" fill-opacity="0.39"/><polygon points="479.7,244.8 481.9,245.3 481.6,245.5 479.4,244.9" fill-opacity="0.39"/><polygon points="471.2,248.8 472.8,249.2 472.4,249.4 470.9,249.0" fill-opacity="0.39"/><polygon points="470.7,249.1 473.3,249.7 472.9,249.9 470.3,249.3" fill-opacity="0.40"/><polygon points="470.1,249.3 472.4,249.9 472.0,250.1 469.8,249.5" fill-opacity="0.40"/><polygon points="461.0,253.7 462.6,254.1 462.2,254.3 460.6,253.9" fill-opacity="0.40"/><polygon points="460.4,254.0 463.0,254.7 462.6,254.9 460.0,254.2" fill-opacity="0.40"/><polygon points="459.8,254.2 462.1,254.9 461.7,255.0 459.4,254.4" fill-opacity="0.40"/><polygon points="449.9,258.9 451.5,259.4 451.1,259.6 449.5,259.1" fill-opacity="0.41"/><polygon points="449.2,259.2 451.9,260.0 451.5,260.2 448.8,259.5" fill-opacity="0.41"/><polygon points="448.6,259.6 450.9,260.2 450.5,260.4 448.2,259.7" fill-opacity="0.41"/><polygon points="437.8,264.7 439.4,265.2 439.0,265.4 437.4,264.9" fill-opacity="0.41"/><polygon points="437.1,265.0 439.8,265.9 439.3,266.1 436.6,265.2" fill-opacity="0.41"/><polygon points="436.4,265.3 438.8,266.1 438.3,266.3 436.0,265.6" fill-opacity="0.41"/><polygon points="424.6,270.9 426.3,271.5 425.8,271.7 424.1,271.2" fill-opacity="0.42"/><polygon points="423.9,271.3 426.6,272.2 426.1,272.5 423.3,271.6" fill-opacity="0.42"/><polygon points="423.1,271.7 425.5,272.5 425.0,272.7 422.6,271.9" fill-opacity="0.42"/><polygon points="410.2,277.8 411.9,278.4 411.3,278.6 409.6,278.0" fill-opacity="0.43"/><polygon points="409.3,278.2 412.2,279.2 411.5,279.5 408.7,278.5" fill-opacity="0.43"/><polygon points="408.5,278.6 410.9,279.5 410.4,279.7 408.0,278.8" fill-opacity="0.43"/><polygon points="394.3,285.3 396.0,286.0 395.4,286.3 393.7,285.6" fill-opacity="0.44"/><polygon points="393.4,285.8 396.2,286.9 395.5,287.2 392.7,286.1" fill-opacity="0.44"/><polygon points="392.4,286.2 394.9,287.2 394.3,287.5 391.8,286.5" fill-opacity="0.44"/><polygon points="376.7,293.7 378.4,294.4 377.8,294.7 376.0,294.0" fill-opacity="0.45"/><polygon points="375.7,294.2 378.5,295.4 377.8,295.8 374.9,294.5" fill-opacity="0.45"/><polygon points="374.6,294.7 377.1,295.7 376.5,296.1 374.0,295.0" fill-opacity="0.45"/><polygon points="357.1,303.0 358.8,303.8 358.1,304.1 356.4,303.3" fill-opacity="0.46"/><polygon points="356.0,303.5 358.9,304.9 358.0,305.3 355.2,303.9" fill-opacity="0.46"/><polygon points="354.8,304.0 357.3,305.3 356.6,305.6 354.1,304.4" fill-opacity="0.46"/><polygon points="335.3,313.3 337.0,314.3 336.2,314.7 334.4,313.7" fill-opacity="0.47"/><polygon points="334.0,314.0 336.8,315.5 335.9,316.0 333.0,314.4" fill-opacity="0.47"/><polygon points="332.7,314.6 335.2,315.9 334.3,316.3 331.9,315.0" fill-opacity="0.47"/><polygon points="310.6,325.0 312.3,326.1 311.4,326.5 309.7,325.5" fill-opacity="0.49"/><polygon points="309.2,325.7 312.0,327.5 310.9,328.0 308.1,326.2" fill-opacity="0.49"/><polygon points="307.7,326.4 310.2,328.0 309.2,328.4 306.8,326.9" fill-opacity="0.49"/><polygon points="282.7,338.3 284.3,339.5 283.3,340.0 281.6,338.8" fill-opacity="0.50"/><polygon points="281.0,339.1 283.8,341.1 282.5,341.7 279.8,339.7" fill-opacity="0.50"/><polygon points="279.4,339.9 281.7,341.6 280.7,342.1 278.3,340.4" fill-opacity="0.50"/><polygon points="250.7,353.5 252.2,354.9 251.0,355.4 249.5,354.1" fill-opacity="0.52"/><polygon points="248.8,354.4 251.4,356.7 250.0,357.4 247.4,355.1" fill-opacity="0.52"/><polygon points="246.9,355.3 249.1,357.3 247.9,357.9 245.6,355.9" fill-opacity="0.52"/><polygon points="213.7,371.0 215.1,372.6 213.7,373.3 212.3,371.7" fill-opacity="0.54"/><polygon points="211.5,372.1 213.9,374.8 212.3,375.6 209.9,372.9" fill-opacity="0.54"/><polygon points="209.3,373.1 211.3,375.5 209.9,376.2 207.9,373.8" fill-opacity="0.54"/><polygon points="170.5,391.6 171.8,393.4 170.1,394.2 168.8,392.3" fill-opacity="0.57"/><polygon points="167.9,392.8 170.0,396.0 168.1,396.9 166.0,393.7" fill-opacity="0.57"/><polygon points="165.3,394.0 167.1,396.8 165.4,397.6 163.6,394.8" fill-opacity="0.57"/><polygon points="551.9,220.1 553.3,220.3 553.1,220.4 551.7,220.2" fill-opacity="0.36"/><polygon points="551.6,220.2 553.9,220.6 553.7,220.7 551.4,220.3" fill-opacity="0.36"/><polygon points="551.3,220.4 553.3,220.7 553.1,220.8 551.1,220.5" fill-opacity="0.36"/><polygon points="546.6,222.9 548.0,223.1 547.8,223.2 546.4,223.0" fill-opacity="0.36"/><polygon points="546.3,223.0 548.6,223.4 548.4,223.5 546.1,223.1" fill-opacity="0.36"/><polygon points="546.0,223.2 548.0,223.5 547.8,223.6 545.8,223.3" fill-opacity="0.36"/><polygon points="541.0,225.8 542.4,226.1 542.2,226.2 540.8,225.9" fill-opacity="0.37"/><polygon points="540.7,226.0 543.1,226.4 542.8,226.6 540.4,226.1" fill-opacity="0.37"/><polygon points="540.3,226.2 542.4,226.6 542.2,226.7 540.1,226.3" fill-opacity="0.37"/><polygon points="535.0,229.0 536.5,229.3 536.3,229.4 534.8,229.1" fill-opacity="0.37"/><polygon points="534.7,229.2 537.1,229.6 536.9,229.8 534.4,229.3" fill-opacity="0.37"/><polygon points="534.3,229.4 536.4,229.8 536.2,229.9 534.1,229.5" fill-opacity="0.37"/><polygon points="528.6,232.4 530.1,232.7 529.9,232.8 528.4,232.5" fill-opacity="0.37"/><polygon points="528.3,232.6 530.8,233.1 530.5,233.2 528.0,232.7" fill-opacity="0.38"/><polygon points="527.9,232.8 530.1,233.2 529.8,233.3 527.7,232.9" fill-opacity="0.38"/><polygon points="521.8,236.0 523.3,236.3 523.1,236.4 521.6,236.1" fill-opacity="0.38"/><polygon points="521.4,236.2 524.0,236.7 523.7,236.9 521.1,236.3" fill-opacity="0.38"/><polygon points="521.0,236.4 523.2,236.9 523.0,237.0 520.8,236.5" fill-opacity="0.38"/><polygon points="514.5,239.9 516.1,240.2 515.8,240.3 514.2,240.0" fill-opacity="0.38"/><polygon points="514.1,240.1 516.7,240.6 516.4,240.8 513.8,240.2" fill-opacity="0.38"/><polygon points="513.7,240.3 515.9,240.8 515.7,240.9 513.4,240.4" fill-opacity="0.38"/><polygon points="506.6,244.0 508.2,244.4 508.0,244.5 506.4,244.2" fill-opacity="0.39"/><polygon points="506.2,244.3 508.9,244.9 508.6,245.0 505.9,244.4" fill-opacity="0.39"/><polygon points="505.7,244.5 508.1,245.0 507.8,245.2 505.5,244.6" fill-opacity="0.39"/><polygon points="498.2,248.5 499.8,248.9 499.5,249.0 497.9,248.7" fill-opacity="0.39"/><polygon points="497.7,248.7 500.4,249.4 500.1,249.6 497.4,248.9" fill-opacity="0.39"/><polygon points="497.2,249.0 499.6,249.6 499.3,249.7 496.9,249.2" fill-opacity="0.39"/><polygon points="489.1,253.3 490.7,253.7 490.4,253.9 488.7,253.5" fill-opacity="0.40"/><polygon points="488.5,253.6 491.3,254.3 491.0,254.5 488.2,253.8" fill-opacity="0.40"/><polygon points="488.0,253.9 490.4,254.5 490.1,254.7 487.7,254.1" fill-opacity="0.40"/><polygon points="479.2,258.6 480.9,259.0 480.5,259.2 478.8,258.8" fill-opacity="0.41"/><polygon points="478.6,258.9 481.5,259.6 481.0,259.9 478.2,259.1" fill-opacity="0.41"/><polygon points="478.0,259.2 480.5,259.8 480.1,260.0 477.7,259.4" fill-opacity="0.41"/><polygon points="468.4,264.3 470.1,264.8 469.8,265.0 468.0,264.5" fill-opacity="0.41"/><polygon points="467.8,264.6 470.7,265.4 470.2,265.7 467.3,264.8" fill-opacity="0.41"/><polygon points="467.2,264.9 469.7,265.6 469.3,265.9 466.8,265.1" fill-opacity="0.41"/><polygon points="456.7,270.5 458.4,271.0 458.0,271.3 456.2,270.7" fill-opacity="0.42"/><polygon points="456.0,270.8 459.0,271.8 458.5,272.0 455.5,271.1" fill-opacity="0.42"/><polygon points="455.3,271.2 457.9,272.0 457.4,272.2 454.9,271.4" fill-opacity="0.42"/><polygon points="443.8,277.3 445.6,277.9 445.1,278.1 443.3,277.5" fill-opacity="0.43"/><polygon points="443.1,277.7 446.1,278.7 445.5,279.0 442.5,278.0" fill-opacity="0.43"/><polygon points="442.3,278.1 444.9,279.0 444.5,279.2 441.8,278.3" fill-opacity="0.43"/><polygon points="429.6,284.8 431.5,285.4 431.0,285.7 429.1,285.1" fill-opacity="0.44"/><polygon points="428.8,285.2 431.9,286.3 431.3,286.7 428.2,285.5" fill-opacity="0.44"/><polygon points="428.0,285.7 430.7,286.6 430.1,286.9 427.5,285.9" fill-opacity="0.44"/><polygon points="414.0,293.1 415.9,293.8 415.3,294.1 413.4,293.4" fill-opacity="0.45"/><polygon points="413.1,293.6 416.2,294.8 415.5,295.1 412.4,293.9" fill-opacity="0.45"/><polygon points="412.2,294.0 414.9,295.1 414.3,295.4 411.6,294.3" fill-opacity="0.45"/><polygon points="396.6,302.3 398.5,303.1 397.8,303.4 395.9,302.6" fill-opacity="0.46"/><polygon points="395.6,302.8 398.7,304.2 398.0,304.6 394.8,303.2" fill-opacity="0.46"/><polygon points="394.6,303.4 397.3,304.6 396.7,304.9 393.9,303.7" fill-opacity="0.46"/><polygon points="377.1,312.6 379.0,313.5 378.3,313.9 376.4,313.0" fill-opacity="0.47"/><polygon points="376.0,313.2 379.2,314.7 378.4,315.2 375.2,313.6" fill-opacity="0.47"/><polygon points="374.9,313.8 377.6,315.1 376.9,315.5 374.1,314.2" fill-opacity="0.47"/><polygon points="355.2,324.2 357.2,325.2 356.3,325.7 354.4,324.6" fill-opacity="0.49"/><polygon points="354.0,324.9 357.2,326.6 356.2,327.1 353.0,325.4" fill-opacity="0.49"/><polygon points="352.7,325.5 355.4,327.1 354.6,327.5 351.8,326.0" fill-opacity="0.49"/><polygon points="330.4,337.3 332.3,338.5 331.4,339.0 329.5,337.8" fill-opacity="0.50"/><polygon points="328.9,338.1 332.1,340.1 331.1,340.7 327.9,338.7" fill-opacity="0.50"/><polygon points="327.5,338.9 330.2,340.6 329.3,341.1 326.5,339.4" fill-opacity="0.50"/><polygon points="302.0,352.4 303.9,353.7 302.8,354.3 300.9,352.9" fill-opacity="0.52"/><polygon points="300.3,353.3 303.4,355.5 302.2,356.2 299.1,353.9" fill-opacity="0.52"/><polygon points="298.6,354.2 301.3,356.1 300.2,356.7 297.5,354.7" fill-opacity="0.52"/><polygon points="269.2,369.7 271.0,371.3 269.8,372.0 268.0,370.4" fill-opacity="0.54"/><polygon points="267.3,370.8 270.3,373.4 268.8,374.2 265.8,371.5" fill-opacity="0.54"/><polygon points="265.3,371.8 267.9,374.1 266.6,374.8 264.0,372.5" fill-opacity="0.54"/><polygon points="230.9,390.0 232.6,391.9 231.1,392.6 229.4,390.8" fill-opacity="0.56"/><polygon points="228.6,391.2 231.4,394.4 229.7,395.3 226.9,392.1" fill-opacity="0.57"/><polygon points="226.3,392.4 228.7,395.2 227.2,396.0 224.8,393.2" fill-opacity="0.57"/><polygon points="185.6,414.0 187.1,416.2 185.3,417.1 183.9,414.9" fill-opacity="0.59"/><polygon points="182.9,415.4 185.3,419.2 183.3,420.3 180.8,416.5" fill-opacity="0.60"/><polygon points="180.1,416.9 182.2,420.2 180.4,421.1 178.3,417.8" fill-opacity="0.60"/><polygon points="567.6,222.7 569.1,222.9 568.9,223.0 567.5,222.8" fill-opacity="0.36"/><polygon points="567.4,222.8 569.8,223.2 569.6,223.3 567.2,222.9" fill-opacity="0.36"/><polygon points="567.1,223.0 569.2,223.3 569.0,223.4 566.9,223.1" fill-opacity="0.36"/><polygon points="562.7,225.6 564.2,225.9 564.0,226.0 562.5,225.7" fill-opacity="0.37"/><polygon points="562.4,225.8 564.9,226.2 564.7,226.3 562.2,225.9" fill-opacity="0.37"/><polygon points="562.1,226.0 564.3,226.3 564.1,226.4 561.9,226.1" fill-opacity="0.37"/><polygon points="557.4,228.8 558.9,229.0 558.8,229.2 557.2,228.9" fill-opacity="0.37"/><polygon points="557.1,229.0 559.7,229.4 559.5,229.5 556.9,229.1" fill-opacity="0.37"/><polygon points="556.8,229.1 559.0,229.5 558.8,229.6 556.6,229.2" fill-opacity="0.37"/><polygon points="551.8,232.1 553.4,232.4 553.2,232.6 551.6,232.3" fill-opacity="0.37"/><polygon points="551.5,232.3 554.1,232.8 553.9,233.0 551.2,232.5" fill-opacity="0.37"/><polygon points="551.2,232.5 553.4,232.9 553.2,233.1 551.0,232.6" fill-opacity="0.38"/><polygon points="545.8,235.7 547.4,236.0 547.2,236.2 545.6,235.9" fill-opacity="0.38"/><polygon points="545.5,235.9 548.1,236.5 547.9,236.6 545.2,236.1" fill-opacity="0.38"/><polygon points="545.1,236.1 547.4,236.6 547.2,236.7 544.9,236.3" fill-opacity="0.38"/><polygon points="539.4,239.6 541.0,239.9 540.8,240.1 539.1,239.7" fill-opacity="0.38"/><polygon points="539.0,239.8 541.7,240.4 541.5,240.5 538.7,240.0" fill-opacity="0.38"/><polygon points="538.6,240.0 541.0,240.5 540.8,240.6 538.4,240.2" fill-opacity="0.38"/><polygon points="532.5,243.7 534.1,244.1 533.9,244.2 532.2,243.9" fill-opacity="0.39"/><polygon points="532.1,243.9 534.9,244.6 534.6,244.7 531.8,244.1" fill-opacity="0.39"/><polygon points="531.7,244.2 534.1,244.7 533.9,244.9 531.4,244.3" fill-opacity="0.39"/><polygon points="525.0,248.2 526.7,248.6 526.5,248.7 524.8,248.3" fill-opacity="0.39"/><polygon points="524.6,248.4 527.5,249.1 527.2,249.3 524.3,248.6" fill-opacity="0.39"/><polygon points="524.2,248.7 526.7,249.2 526.4,249.4 523.9,248.8" fill-opacity="0.39"/><polygon points="517.0,253.0 518.7,253.4 518.5,253.6 516.7,253.1" fill-opacity="0.40"/><polygon points="516.5,253.2 519.5,254.0 519.1,254.2 516.2,253.5" fill-opacity="0.40"/><polygon points="516.1,253.5 518.6,254.1 518.3,254.3 515.8,253.7" fill-opacity="0.40"/><polygon points="508.3,258.2 510.1,258.6 509.8,258.8 508.0,258.4" fill-opacity="0.41"/><polygon points="507.8,258.5 510.8,259.2 510.4,259.5 507.4,258.7" fill-opacity="0.41"/><polygon points="507.3,258.8 509.9,259.4 509.6,259.6 507.0,259.0" fill-opacity="0.41"/><polygon points="498.8,263.8 500.7,264.3 500.3,264.6 498.5,264.1" fill-opacity="0.41"/><polygon points="498.3,264.2 501.4,265.0 501.0,265.2 497.9,264.4" fill-opacity="0.41"/><polygon points="497.7,264.5 500.4,265.2 500.1,265.4 497.4,264.7" fill-opacity="0.41"/><polygon points="488.5,270.0 490.4,270.6 490.0,270.8 488.1,270.3" fill-opacity="0.42"/><polygon points="487.9,270.4 491.1,271.3 490.6,271.6 487.5,270.6" fill-opacity="0.42"/><polygon points="487.3,270.7 490.1,271.5 489.7,271.8 486.9,271.0" fill-opacity="0.42"/><polygon points="477.2,276.8 479.1,277.4 478.7,277.6 476.8,277.0" fill-opacity="0.43"/><polygon points="476.5,277.2 479.8,278.2 479.3,278.5 476.1,277.5" fill-opacity="0.43"/><polygon points="475.9,277.6 478.7,278.4 478.3,278.7 475.5,277.8" fill-opacity="0.43"/><polygon points="464.8,284.2 466.7,284.9 466.3,285.2 464.3,284.5" fill-opacity="0.44"/><polygon points="464.0,284.7 467.4,285.8 466.8,286.1 463.5,285.0" fill-opacity="0.44"/><polygon points="463.3,285.1 466.2,286.1 465.7,286.3 462.9,285.4" fill-opacity="0.44"/><polygon points="451.0,292.5 453.0,293.2 452.5,293.5 450.5,292.8" fill-opacity="0.45"/><polygon points="450.2,292.9 453.6,294.2 453.0,294.5 449.6,293.3" fill-opacity="0.45"/><polygon points="449.4,293.4 452.4,294.5 451.8,294.8 448.9,293.7" fill-opacity="0.45"/><polygon points="435.7,301.6 437.8,302.4 437.3,302.8 435.2,301.9" fill-opacity="0.46"/><polygon points="434.9,302.1 438.3,303.5 437.7,303.9 434.2,302.5" fill-opacity="0.46"/><polygon points="434.0,302.7 437.0,303.9 436.4,304.2 433.4,303.0" fill-opacity="0.46"/><polygon points="418.7,311.8 420.8,312.7 420.1,313.1 418.0,312.2" fill-opacity="0.47"/><polygon points="417.7,312.4 421.2,314.0 420.5,314.4 416.9,312.9" fill-opacity="0.47"/><polygon points="416.7,313.0 419.7,314.4 419.1,314.7 416.0,313.4" fill-opacity="0.47"/><polygon points="399.5,323.3 401.6,324.3 400.9,324.8 398.8,323.7" fill-opacity="0.48"/><polygon points="398.3,324.0 401.9,325.7 401.1,326.2 397.5,324.5" fill-opacity="0.49"/><polygon points="397.2,324.7 400.3,326.2 399.6,326.6 396.5,325.1" fill-opacity="0.49"/><polygon points="377.7,336.3 379.9,337.5 379.0,338.0 376.9,336.8" fill-opacity="0.50"/><polygon points="376.4,337.1 380.0,339.1 379.1,339.7 375.5,337.7" fill-opacity="0.50"/><polygon points="375.1,337.9 378.3,339.6 377.4,340.1 374.3,338.4" fill-opacity="0.50"/><polygon points="352.8,351.2 355.0,352.6 354.1,353.2 351.9,351.8" fill-opacity="0.52"/><polygon points="351.3,352.1 355.0,354.4 353.9,355.0 350.3,352.8" fill-opacity="0.52"/><polygon points="349.9,353.0 353.0,355.0 352.0,355.6 348.9,353.6" fill-opacity="0.52"/><polygon points="324.1,368.4 326.3,370.0 325.2,370.6 323.0,369.1" fill-opacity="0.54"/><polygon points="322.4,369.4 326.0,372.1 324.7,372.8 321.2,370.2" fill-opacity="0.54"/><polygon points="320.7,370.5 323.8,372.8 322.7,373.5 319.6,371.1" fill-opacity="0.54"/><polygon points="290.6,388.5 292.7,390.3 291.4,391.1 289.3,389.2" fill-opacity="0.56"/><polygon points="288.6,389.7 292.1,392.8 290.6,393.7 287.1,390.6" fill-opacity="0.56"/><polygon points="286.6,390.9 289.6,393.6 288.3,394.4 285.3,391.7" fill-opacity="0.57"/><polygon points="251.0,412.2 253.0,414.4 251.5,415.3 249.5,413.1" fill-opacity="0.59"/><polygon points="248.6,413.6 251.9,417.3 250.2,418.4 246.9,414.7" fill-opacity="0.59"/><polygon points="246.2,415.1 249.1,418.3 247.5,419.2 244.7,416.0" fill-opacity="0.60"/><polygon points="203.5,440.6 205.3,443.3 203.4,444.4 201.7,441.7" fill-opacity="0.63"/><polygon points="200.6,442.4 203.6,446.8 201.4,448.1 198.5,443.6" fill-opacity="0.63"/><polygon points="197.7,444.1 200.2,448.0 198.3,449.2 195.8,445.2" fill-opacity="0.63"/><polygon points="584.3,225.4 585.8,225.7 585.7,225.8 584.1,225.5" fill-opacity="0.37"/><polygon points="584.0,225.6 586.6,226.0 586.5,226.1 583.9,225.7" fill-opacity="0.37"/><polygon points="583.8,225.7 586.0,226.1 585.9,226.2 583.6,225.9" fill-opacity="0.37"/><polygon points="579.7,228.5 581.3,228.8 581.1,228.9 579.6,228.7" fill-opacity="0.37"/><polygon points="579.5,228.7 582.1,229.2 581.9,229.3 579.3,228.9" fill-opacity="0.37"/><polygon points="579.2,228.9 581.5,229.3 581.3,229.4 579.0,229.0" fill-opacity="0.37"/><polygon points="574.9,231.9 576.5,232.2 576.3,232.3 574.7,232.0" fill-opacity="0.37"/><polygon points="574.6,232.1 577.3,232.6 577.1,232.7 574.4,232.2" fill-opacity="0.37"/><polygon points="574.3,232.3 576.7,232.7 576.5,232.8 574.1,232.4" fill-opacity="0.37"/><polygon points="569.7,235.5 571.3,235.8 571.2,235.9 569.5,235.6" fill-opacity="0.38"/><polygon points="569.4,235.7 572.2,236.2 572.0,236.3 569.2,235.8" fill-opacity="0.38"/><polygon points="569.1,235.9 571.5,236.3 571.3,236.5 568.9,236.0" fill-opacity="0.38"/><polygon points="564.1,239.3 565.8,239.6 565.6,239.8 563.9,239.4" fill-opacity="0.38"/><polygon points="563.8,239.5 566.7,240.1 566.4,240.2 563.6,239.7" fill-opacity="0.38"/><polygon points="563.5,239.7 566.0,240.2 565.8,240.4 563.3,239.9" fill-opacity="0.38"/><polygon points="558.1,243.4 559.9,243.8 559.7,243.9 557.9,243.6" fill-opacity="0.39"/><polygon points="557.8,243.6 560.7,244.2 560.5,244.4 557.5,243.8" fill-opacity="0.39"/><polygon points="557.5,243.9 560.0,244.4 559.8,244.6 557.2,244.0" fill-opacity="0.39"/><polygon points="551.7,247.8 553.5,248.2 553.3,248.4 551.5,248.0" fill-opacity="0.39"/><polygon points="551.3,248.1 554.3,248.7 554.1,248.9 551.1,248.3" fill-opacity="0.39"/><polygon points="551.0,248.4 553.6,248.9 553.3,249.1 550.7,248.5" fill-opacity="0.39"/><polygon points="544.8,252.6 546.6,253.0 546.4,253.2 544.5,252.8" fill-opacity="0.40"/><polygon points="544.4,252.9 547.5,253.6 547.2,253.8 544.1,253.1" fill-opacity="0.40"/><polygon points="544.0,253.2 546.6,253.8 546.4,254.0 543.7,253.4" fill-opacity="0.40"/><polygon points="537.2,257.8 539.1,258.3 538.9,258.4 537.0,258.0" fill-opacity="0.41"/><polygon points="536.8,258.1 540.0,258.9 539.7,259.1 536.5,258.3" fill-opacity="0.41"/><polygon points="536.4,258.4 539.1,259.1 538.9,259.3 536.1,258.6" fill-opacity="0.41"/><polygon points="529.1,263.4 531.0,263.9 530.7,264.1 528.8,263.6" fill-opacity="0.41"/><polygon points="528.6,263.8 531.9,264.6 531.5,264.8 528.2,264.0" fill-opacity="0.41"/><polygon points="528.1,264.1 530.9,264.8 530.6,265.0 527.8,264.3" fill-opacity="0.41"/><polygon points="520.1,269.6 522.1,270.1 521.8,270.3 519.8,269.8" fill-opacity="0.42"/><polygon points="519.6,269.9 523.0,270.8 522.6,271.1 519.3,270.2" fill-opacity="0.42"/><polygon points="519.1,270.3 522.0,271.1 521.7,271.3 518.8,270.5" fill-opacity="0.42"/><polygon points="510.4,276.3 512.4,276.9 512.1,277.1 510.0,276.5" fill-opacity="0.43"/><polygon points="509.8,276.7 513.3,277.7 512.9,278.0 509.4,277.0" fill-opacity="0.43"/><polygon points="509.2,277.1 512.2,277.9 511.9,278.2 508.9,277.3" fill-opacity="0.43"/><polygon points="499.6,283.7 501.8,284.3 501.4,284.6 499.2,284.0" fill-opacity="0.44"/><polygon points="499.0,284.1 502.6,285.2 502.1,285.5 498.6,284.4" fill-opacity="0.44"/><polygon points="498.4,284.5 501.5,285.5 501.1,285.8 498.0,284.8" fill-opacity="0.44"/><polygon points="487.8,291.9 490.0,292.6 489.5,292.9 487.3,292.2" fill-opacity="0.45"/><polygon points="487.1,292.3 490.7,293.5 490.2,293.9 486.6,292.7" fill-opacity="0.45"/><polygon points="486.4,292.8 489.6,293.9 489.1,294.2 485.9,293.1" fill-opacity="0.45"/><polygon points="474.6,300.9 476.8,301.7 476.4,302.1 474.1,301.3" fill-opacity="0.46"/><polygon points="473.8,301.5 477.6,302.8 477.0,303.2 473.3,301.8" fill-opacity="0.46"/><polygon points="473.1,302.0 476.3,303.2 475.8,303.5 472.6,302.3" fill-opacity="0.46"/><polygon points="459.9,311.1 462.2,312.0 461.6,312.4 459.3,311.4" fill-opacity="0.47"/><polygon points="459.0,311.7 462.9,313.2 462.2,313.6 458.4,312.1" fill-opacity="0.47"/><polygon points="458.1,312.3 461.5,313.6 460.9,314.0 457.6,312.6" fill-opacity="0.47"/><polygon points="443.3,322.5 445.7,323.5 445.1,323.9 442.7,322.9" fill-opacity="0.48"/><polygon points="442.3,323.1 446.3,324.9 445.6,325.4 441.6,323.6" fill-opacity="0.48"/><polygon points="441.4,323.8 444.8,325.3 444.2,325.7 440.7,324.2" fill-opacity="0.49"/><polygon points="424.6,335.4 427.0,336.5 426.3,337.0 423.9,335.9" fill-opacity="0.50"/><polygon points="423.5,336.1 427.5,338.1 426.7,338.7 422.6,336.7" fill-opacity="0.50"/><polygon points="422.3,336.9 425.8,338.6 425.1,339.1 421.6,337.4" fill-opacity="0.50"/><polygon points="403.1,350.1 405.6,351.5 404.8,352.0 402.3,350.7" fill-opacity="0.52"/><polygon points="401.9,351.0 406.0,353.2 405.1,353.9 400.9,351.6" fill-opacity="0.52"/><polygon points="400.6,351.9 404.2,353.8 403.3,354.4 399.8,352.4" fill-opacity="0.52"/><polygon points="378.4,367.1 380.9,368.7 380.0,369.3 377.5,367.8" fill-opacity="0.54"/><polygon points="377.0,368.2 381.1,370.8 380.0,371.5 375.9,368.9" fill-opacity="0.54"/><polygon points="375.5,369.2 379.1,371.4 378.1,372.1 374.5,369.8" fill-opacity="0.54"/><polygon points="349.6,387.0 352.1,388.8 351.0,389.5 348.5,387.7" fill-opacity="0.56"/><polygon points="347.9,388.2 352.1,391.2 350.8,392.1 346.6,389.0" fill-opacity="0.56"/><polygon points="346.2,389.4 349.8,392.0 348.7,392.8 345.1,390.1" fill-opacity="0.56"/><polygon points="315.6,410.4 318.1,412.5 316.8,413.4 314.3,411.3" fill-opacity="0.59"/><polygon points="313.6,411.8 317.7,415.4 316.2,416.5 312.1,412.8" fill-opacity="0.59"/><polygon points="311.5,413.2 315.1,416.4 313.7,417.3 310.2,414.1" fill-opacity="0.59"/><polygon points="274.9,438.5 277.2,441.1 275.6,442.2 273.3,439.5" fill-opacity="0.62"/><polygon points="272.4,440.2 276.3,444.6 274.5,445.9 270.6,441.4" fill-opacity="0.63"/><polygon points="269.9,441.9 273.3,445.7 271.7,446.9 268.3,443.0" fill-opacity="0.63"/><polygon points="225.1,472.7 227.2,475.9 225.3,477.3 223.1,474.1" fill-opacity="0.66"/><polygon points="222.0,474.8 225.6,480.3 223.4,481.9 219.8,476.4" fill-opacity="0.67"/><polygon points="218.9,477.0 222.0,481.7 220.0,483.1 216.9,478.3" fill-opacity="0.67"/><polygon points="601.9,228.3 603.6,228.6 603.4,228.7 601.8,228.4" fill-opacity="0.37"/><polygon points="601.7,228.5 604.5,229.0 604.3,229.1 601.6,228.6" fill-opacity="0.37"/><polygon points="601.5,228.7 603.9,229.1 603.7,229.2 601.4,228.8" fill-opacity="0.37"/><polygon points="597.8,231.7 599.5,231.9 599.4,232.1 597.7,231.8" fill-opacity="0.37"/><polygon points="597.6,231.8 600.4,232.3 600.2,232.5 597.4,232.0" fill-opacity="0.37"/><polygon points="597.4,232.0 599.8,232.5 599.7,232.6 597.2,232.2" fill-opacity="0.37"/><polygon points="593.4,235.2 595.2,235.5 595.0,235.7 593.3,235.3" fill-opacity="0.38"/><polygon points="593.2,235.4 596.1,235.9 595.9,236.1 593.0,235.6" fill-opacity="0.38"/><polygon points="592.9,235.6 595.4,236.1 595.3,236.2 592.8,235.7" fill-opacity="0.38"/><polygon points="588.7,239.0 590.5,239.4 590.3,239.5 588.6,239.2" fill-opacity="0.38"/><polygon points="588.5,239.2 591.4,239.8 591.2,240.0 588.3,239.4" fill-opacity="0.38"/><polygon points="588.2,239.5 590.8,239.9 590.6,240.1 588.0,239.6" fill-opacity="0.38"/><polygon points="583.7,243.1 585.5,243.5 585.3,243.6 583.5,243.3" fill-opacity="0.39"/><polygon points="583.4,243.3 586.5,243.9 586.2,244.1 583.2,243.5" fill-opacity="0.39"/><polygon points="583.1,243.6 585.8,244.1 585.6,244.3 582.9,243.7" fill-opacity="0.39"/><polygon points="578.2,247.5 580.1,247.9 579.9,248.1 578.0,247.7" fill-opacity="0.39"/><polygon points="577.9,247.8 581.1,248.4 580.9,248.6 577.7,248.0" fill-opacity="0.39"/><polygon points="577.6,248.0 580.4,248.6 580.2,248.8 577.4,248.2" fill-opacity="0.39"/><polygon points="572.4,252.3 574.3,252.7 574.1,252.9 572.2,252.5" fill-opacity="0.40"/><polygon points="572.0,252.6 575.3,253.2 575.0,253.4 571.8,252.8" fill-opacity="0.40"/><polygon points="571.7,252.8 574.5,253.4 574.3,253.6 571.5,253.0" fill-opacity="0.40"/><polygon points="566.0,257.4 568.0,257.9 567.8,258.1 565.8,257.6" fill-opacity="0.40"/><polygon points="565.7,257.7 569.0,258.5 568.7,258.7 565.4,257.9" fill-opacity="0.41"/><polygon points="565.3,258.0 568.2,258.7 567.9,258.9 565.1,258.2" fill-opacity="0.41"/><polygon points="559.1,263.0 561.2,263.5 560.9,263.7 558.9,263.2" fill-opacity="0.41"/><polygon points="558.7,263.3 562.2,264.2 561.9,264.4 558.4,263.6" fill-opacity="0.41"/><polygon points="558.3,263.7 561.3,264.4 561.0,264.6 558.1,263.9" fill-opacity="0.41"/><polygon points="551.6,269.1 553.7,269.7 553.4,269.9 551.3,269.4" fill-opacity="0.42"/><polygon points="551.1,269.5 554.7,270.4 554.4,270.6 550.8,269.7" fill-opacity="0.42"/><polygon points="550.7,269.8 553.8,270.6 553.5,270.8 550.4,270.1" fill-opacity="0.42"/><polygon points="543.3,275.8 545.5,276.4 545.2,276.6 543.0,276.1" fill-opacity="0.43"/><polygon points="542.9,276.2 546.5,277.2 546.2,277.5 542.5,276.5" fill-opacity="0.43"/><polygon points="542.4,276.6 545.6,277.4 545.3,277.7 542.1,276.8" fill-opacity="0.43"/><polygon points="534.3,283.1 536.5,283.8 536.2,284.1 533.9,283.4" fill-opacity="0.44"/><polygon points="533.7,283.6 537.5,284.7 537.2,285.0 533.4,283.9" fill-opacity="0.44"/><polygon points="533.2,284.0 536.5,284.9 536.2,285.2 532.9,284.3" fill-opacity="0.44"/><polygon points="524.3,291.3 526.6,292.0 526.2,292.3 523.9,291.6" fill-opacity="0.45"/><polygon points="523.7,291.7 527.6,292.9 527.2,293.3 523.3,292.1" fill-opacity="0.45"/><polygon points="523.1,292.2 526.5,293.3 526.1,293.6 522.7,292.5" fill-opacity="0.45"/><polygon points="513.1,300.3 515.6,301.1 515.1,301.4 512.7,300.6" fill-opacity="0.46"/><polygon points="512.5,300.8 516.5,302.1 516.1,302.5 512.0,301.2" fill-opacity="0.46"/><polygon points="511.8,301.3 515.3,302.5 514.9,302.8 511.4,301.7" fill-opacity="0.46"/><polygon points="500.7,310.3 503.2,311.2 502.8,311.6 500.3,310.7" fill-opacity="0.47"/><polygon points="500.0,310.9 504.2,312.4 503.7,312.9 499.5,311.3" fill-opacity="0.47"/><polygon points="499.3,311.5 502.9,312.8 502.4,313.2 498.8,311.9" fill-opacity="0.47"/><polygon points="486.8,321.6 489.4,322.6 488.8,323.1 486.3,322.0" fill-opacity="0.48"/><polygon points="486.0,322.3 490.3,324.0 489.7,324.5 485.4,322.8" fill-opacity="0.48"/><polygon points="485.1,323.0 488.9,324.4 488.4,324.9 484.6,323.4" fill-opacity="0.48"/><polygon points="471.0,334.4 473.6,335.6 473.1,336.1 470.4,334.9" fill-opacity="0.50"/><polygon points="470.1,335.2 474.5,337.1 473.8,337.7 469.4,335.7" fill-opacity="0.50"/><polygon points="469.1,335.9 473.0,337.6 472.4,338.1 468.5,336.4" fill-opacity="0.50"/><polygon points="453.0,349.0 455.7,350.3 455.0,350.9 452.3,349.6" fill-opacity="0.52"/><polygon points="451.9,349.9 456.5,352.1 455.7,352.8 451.1,350.5" fill-opacity="0.52"/><polygon points="450.8,350.8 454.8,352.7 454.1,353.3 450.1,351.3" fill-opacity="0.52"/><polygon points="432.2,365.9 435.0,367.4 434.2,368.0 431.4,366.5" fill-opacity="0.54"/><polygon points="430.9,366.9 435.7,369.4 434.8,370.2 430.0,367.6" fill-opacity="0.54"/><polygon points="429.7,367.9 433.8,370.1 433.0,370.8 428.9,368.5" fill-opacity="0.54"/><polygon points="408.0,385.5 410.8,387.3 409.9,388.0 407.0,386.2" fill-opacity="0.56"/><polygon points="406.5,386.6 411.4,389.7 410.3,390.6 405.5,387.5" fill-opacity="0.56"/><polygon points="405.1,387.8 409.2,390.5 408.3,391.2 404.1,388.6" fill-opacity="0.56"/><polygon points="379.4,408.6 382.3,410.7 381.2,411.6 378.3,409.5" fill-opacity="0.59"/><polygon points="377.7,410.0 382.6,413.6 381.3,414.6 376.4,411.0" fill-opacity="0.59"/><polygon points="376.0,411.4 380.2,414.6 379.1,415.5 374.8,412.3" fill-opacity="0.59"/><polygon points="345.2,436.3 348.2,438.9 346.8,440.0 343.9,437.4" fill-opacity="0.62"/><polygon points="343.1,438.0 348.1,442.3 346.5,443.6 341.6,439.2" fill-opacity="0.62"/><polygon points="341.0,439.7 345.3,443.5 343.9,444.6 339.7,440.8" fill-opacity="0.63"/><polygon points="303.5,470.1 306.4,473.2 304.8,474.6 301.9,471.4" fill-opacity="0.66"/><polygon points="301.0,472.1 305.8,477.5 303.9,479.1 299.1,473.7" fill-opacity="0.67"/><polygon points="298.4,474.2 302.5,479.0 300.9,480.3 296.7,475.6" fill-opacity="0.67"/><polygon points="251.6,512.2 254.3,516.1 252.2,517.8 249.6,513.8" fill-opacity="0.71"/><polygon points="248.4,514.8 252.9,521.6 250.5,523.6 246.0,516.7" fill-opacity="0.72"/><polygon points="245.1,517.4 249.0,523.4 246.8,525.1 243.0,519.1" fill-opacity="0.72"/><polygon points="620.7,231.4 622.4,231.7 622.3,231.8 620.6,231.5" fill-opacity="0.37"/><polygon points="620.5,231.6 623.4,232.1 623.3,232.2 620.4,231.7" fill-opacity="0.37"/><polygon points="620.3,231.8 622.8,232.2 622.7,232.3 620.2,231.9" fill-opacity="0.37"/><polygon points="617.1,235.0 618.9,235.3 618.8,235.4 617.0,235.1" fill-opacity="0.38"/><polygon points="616.9,235.2 619.9,235.7 619.7,235.8 616.7,235.3" fill-opacity="0.38"/><polygon points="616.7,235.4 619.3,235.8 619.2,235.9 616.5,235.5" fill-opacity="0.38"/><polygon points="613.2,238.7 615.1,239.1 614.9,239.2 613.1,238.9" fill-opacity="0.38"/><polygon points="613.0,239.0 616.1,239.5 615.9,239.7 612.9,239.1" fill-opacity="0.38"/><polygon points="612.8,239.2 615.5,239.7 615.3,239.8 612.7,239.3" fill-opacity="0.38"/><polygon points="609.1,242.8 611.0,243.2 610.9,243.3 608.9,243.0" fill-opacity="0.39"/><polygon points="608.9,243.1 612.0,243.6 611.9,243.8 608.7,243.2" fill-opacity="0.39"/><polygon points="608.6,243.3 611.4,243.8 611.2,244.0 608.5,243.4" fill-opacity="0.39"/><polygon points="604.6,247.2 606.6,247.6 606.4,247.7 604.5,247.4" fill-opacity="0.39"/><polygon points="604.4,247.5 607.7,248.1 607.5,248.3 604.2,247.6" fill-opacity="0.39"/><polygon points="604.1,247.7 607.0,248.3 606.8,248.4 604.0,247.9" fill-opacity="0.39"/><polygon points="599.8,251.9 601.9,252.3 601.7,252.5 599.7,252.1" fill-opacity="0.40"/><polygon points="599.6,252.2 602.9,252.9 602.7,253.1 599.4,252.4" fill-opacity="0.40"/><polygon points="599.3,252.5 602.2,253.1 602.0,253.3 599.1,252.7" fill-opacity="0.40"/><polygon points="594.6,257.1 596.7,257.5 596.5,257.7 594.4,257.2" fill-opacity="0.40"/><polygon points="594.3,257.3 597.8,258.1 597.6,258.3 594.1,257.6" fill-opacity="0.41"/><polygon points="594.0,257.6 597.1,258.3 596.9,258.5 593.8,257.8" fill-opacity="0.41"/><polygon points="589.0,262.6 591.1,263.1 590.9,263.3 588.8,262.8" fill-opacity="0.41"/><polygon points="588.7,262.9 592.3,263.8 592.0,264.0 588.4,263.2" fill-opacity="0.41"/><polygon points="588.3,263.3 591.5,264.0 591.3,264.2 588.1,263.5" fill-opacity="0.41"/><polygon points="582.8,268.7 585.1,269.2 584.8,269.4 582.6,268.9" fill-opacity="0.42"/><polygon points="582.5,269.0 586.2,269.9 585.9,270.2 582.2,269.3" fill-opacity="0.42"/><polygon points="582.1,269.4 585.3,270.2 585.1,270.4 581.9,269.6" fill-opacity="0.42"/><polygon points="576.1,275.3 578.4,275.9 578.1,276.1 575.8,275.6" fill-opacity="0.43"/><polygon points="575.7,275.7 579.6,276.7 579.3,277.0 575.4,276.0" fill-opacity="0.43"/><polygon points="575.3,276.1 578.7,276.9 578.4,277.2 575.0,276.3" fill-opacity="0.43"/><polygon points="568.7,282.6 571.1,283.3 570.8,283.5 568.4,282.9" fill-opacity="0.44"/><polygon points="568.2,283.0 572.2,284.1 571.9,284.4 567.9,283.3" fill-opacity="0.44"/><polygon points="567.8,283.5 571.3,284.4 571.0,284.7 567.5,283.7" fill-opacity="0.44"/><polygon points="560.5,290.7 563.0,291.4 562.7,291.7 560.2,291.0" fill-opacity="0.44"/><polygon points="560.0,291.1 564.2,292.3 563.8,292.7 559.7,291.5" fill-opacity="0.45"/><polygon points="559.5,291.6 563.1,292.6 562.8,293.0 559.2,291.9" fill-opacity="0.45"/><polygon points="551.4,299.6 554.0,300.4 553.6,300.7 551.1,299.9" fill-opacity="0.46"/><polygon points="550.9,300.1 555.2,301.5 554.8,301.8 550.5,300.5" fill-opacity="0.46"/><polygon points="550.3,300.6 554.1,301.8 553.8,302.1 550.0,301.0" fill-opacity="0.46"/><polygon points="541.3,309.6 543.9,310.5 543.6,310.8 540.9,310.0" fill-opacity="0.47"/><polygon points="540.7,310.2 545.2,311.7 544.7,312.1 540.2,310.6" fill-opacity="0.47"/><polygon points="540.1,310.7 544.0,312.1 543.6,312.4 539.7,311.1" fill-opacity="0.47"/><polygon points="529.9,320.8 532.7,321.8 532.2,322.2 529.4,321.2" fill-opacity="0.48"/><polygon points="529.2,321.4 533.9,323.1 533.4,323.6 528.7,321.9" fill-opacity="0.48"/><polygon points="528.5,322.1 532.6,323.6 532.2,324.0 528.1,322.5" fill-opacity="0.48"/><polygon points="517.0,333.5 519.9,334.6 519.4,335.1 516.5,333.9" fill-opacity="0.50"/><polygon points="516.2,334.2 521.1,336.1 520.5,336.7 515.7,334.8" fill-opacity="0.50"/><polygon points="515.5,335.0 519.7,336.6 519.2,337.1 515.0,335.5" fill-opacity="0.50"/><polygon points="502.3,347.9 505.3,349.2 504.7,349.8 501.7,348.5" fill-opacity="0.51"/><polygon points="501.4,348.8 506.5,351.0 505.8,351.6 500.8,349.4" fill-opacity="0.52"/><polygon points="500.5,349.7 504.9,351.6 504.4,352.1 500.0,350.2" fill-opacity="0.52"/><polygon points="485.3,364.6 488.5,366.1 487.8,366.8 484.7,365.2" fill-opacity="0.53"/><polygon points="484.3,365.6 489.6,368.1 488.9,368.9 483.6,366.3" fill-opacity="0.54"/><polygon points="483.3,366.6 487.9,368.8 487.2,369.5 482.7,367.2" fill-opacity="0.54"/><polygon points="465.6,384.0 468.9,385.8 468.2,386.5 464.9,384.7" fill-opacity="0.56"/><polygon points="464.5,385.2 469.9,388.1 469.1,389.0 463.6,386.0" fill-opacity="0.56"/><polygon points="463.3,386.3 468.0,388.9 467.3,389.7 462.5,387.1" fill-opacity="0.56"/><polygon points="442.4,406.9 445.8,409.0 444.9,409.8 441.5,407.7" fill-opacity="0.58"/><polygon points="441.0,408.2 446.7,411.8 445.7,412.8 440.0,409.2" fill-opacity="0.59"/><polygon points="439.6,409.6 444.5,412.7 443.6,413.6 438.7,410.5" fill-opacity="0.59"/><polygon points="414.6,434.2 418.1,436.7 417.0,437.8 413.6,435.3" fill-opacity="0.62"/><polygon points="412.9,435.9 418.8,440.1 417.6,441.4 411.7,437.1" fill-opacity="0.62"/><polygon points="411.2,437.5 416.3,441.3 415.2,442.4 410.1,438.6" fill-opacity="0.62"/><polygon points="380.8,467.5 384.4,470.6 383.1,471.9 379.5,468.8" fill-opacity="0.66"/><polygon points="378.7,469.5 384.7,474.8 383.2,476.4 377.2,471.0" fill-opacity="0.66"/><polygon points="376.6,471.6 381.8,476.2 380.5,477.6 375.3,472.9" fill-opacity="0.66"/><polygon points="338.7,508.9 342.3,512.8 340.6,514.5 337.1,510.5" fill-opacity="0.71"/><polygon points="336.1,511.4 342.1,518.1 340.2,520.1 334.2,513.3" fill-opacity="0.71"/><polygon points="333.5,514.1 338.6,519.9 336.9,521.6 331.8,515.7" fill-opacity="0.72"/><polygon points="640.6,234.7 642.5,235.0 642.4,235.1 640.5,234.8" fill-opacity="0.38"/><polygon points="640.5,234.9 643.6,235.4 643.5,235.6 640.4,235.0" fill-opacity="0.38"/><polygon points="640.3,235.1 643.0,235.5 642.9,235.7 640.2,235.2" fill-opacity="0.38"/><polygon points="637.6,238.5 639.5,238.8 639.4,238.9 637.5,238.6" fill-opacity="0.38"/><polygon points="637.4,238.7 640.6,239.2 640.5,239.4 637.3,238.8" fill-opacity="0.38"/><polygon points="637.3,238.9 640.1,239.4 639.9,239.5 637.2,239.0" fill-opacity="0.38"/><polygon points="634.4,242.5 636.4,242.9 636.2,243.0 634.3,242.7" fill-opacity="0.39"/><polygon points="634.2,242.8 637.5,243.3 637.4,243.5 634.1,242.9" fill-opacity="0.39"/><polygon points="634.0,243.0 636.9,243.5 636.8,243.7 633.9,243.1" fill-opacity="0.39"/><polygon points="630.9,246.9 632.9,247.3 632.8,247.4 630.8,247.0" fill-opacity="0.39"/><polygon points="630.7,247.1 634.1,247.8 634.0,248.0 630.6,247.3" fill-opacity="0.39"/><polygon points="630.5,247.4 633.5,247.9 633.3,248.1 630.4,247.5" fill-opacity="0.39"/><polygon points="627.1,251.6 629.3,252.0 629.1,252.2 627.0,251.8" fill-opacity="0.40"/><polygon points="626.9,251.9 630.5,252.5 630.3,252.7 626.8,252.1" fill-opacity="0.40"/><polygon points="626.7,252.1 629.8,252.7 629.6,252.9 626.6,252.3" fill-opacity="0.40"/><polygon points="623.1,256.7 625.3,257.1 625.1,257.3 622.9,256.9" fill-opacity="0.40"/><polygon points="622.9,257.0 626.5,257.7 626.3,257.9 622.7,257.2" fill-opacity="0.40"/><polygon points="622.6,257.3 625.8,257.9 625.6,258.1 622.5,257.5" fill-opacity="0.40"/><polygon points="618.7,262.2 620.9,262.7 620.8,262.9 618.5,262.4" fill-opacity="0.41"/><polygon points="618.4,262.5 622.2,263.3 622.0,263.6 618.2,262.8" fill-opacity="0.41"/><polygon points="618.2,262.9 621.4,263.6 621.3,263.8 618.0,263.1" fill-opacity="0.41"/><polygon points="613.9,268.2 616.2,268.8 616.0,269.0 613.7,268.5" fill-opacity="0.42"/><polygon points="613.6,268.6 617.5,269.5 617.3,269.7 613.4,268.8" fill-opacity="0.42"/><polygon points="613.3,268.9 616.7,269.7 616.5,269.9 613.1,269.2" fill-opacity="0.42"/><polygon points="608.6,274.8 611.0,275.4 610.8,275.7 608.4,275.1" fill-opacity="0.43"/><polygon points="608.3,275.2 612.4,276.2 612.2,276.5 608.1,275.5" fill-opacity="0.43"/><polygon points="608.0,275.6 611.5,276.4 611.3,276.7 607.8,275.8" fill-opacity="0.43"/><polygon points="602.8,282.1 605.3,282.7 605.1,283.0 602.6,282.3" fill-opacity="0.43"/><polygon points="602.5,282.5 606.7,283.6 606.5,283.9 602.2,282.8" fill-opacity="0.44"/><polygon points="602.1,282.9 605.8,283.9 605.6,284.1 601.9,283.2" fill-opacity="0.44"/><polygon points="596.4,290.1 599.1,290.8 598.8,291.1 596.2,290.4" fill-opacity="0.44"/><polygon points="596.1,290.5 600.5,291.7 600.2,292.1 595.8,290.9" fill-opacity="0.45"/><polygon points="595.7,291.0 599.5,292.0 599.3,292.3 595.5,291.3" fill-opacity="0.45"/><polygon points="589.4,298.9 592.1,299.7 591.8,300.1 589.1,299.3" fill-opacity="0.45"/><polygon points="588.9,299.5 593.5,300.8 593.3,301.2 588.6,299.8" fill-opacity="0.46"/><polygon points="588.5,300.0 592.5,301.1 592.3,301.5 588.3,300.3" fill-opacity="0.46"/><polygon points="581.5,308.8 584.3,309.7 584.0,310.1 581.2,309.2" fill-opacity="0.47"/><polygon points="581.0,309.4 585.8,310.9 585.5,311.3 580.7,309.8" fill-opacity="0.47"/><polygon points="580.5,310.0 584.7,311.3 584.4,311.7 580.2,310.4" fill-opacity="0.47"/><polygon points="572.6,320.0 575.6,321.0 575.3,321.4 572.3,320.4" fill-opacity="0.48"/><polygon points="572.1,320.6 577.1,322.3 576.7,322.8 571.7,321.1" fill-opacity="0.48"/><polygon points="571.5,321.3 575.9,322.7 575.6,323.2 571.2,321.7" fill-opacity="0.48"/><polygon points="562.6,332.5 565.7,333.7 565.3,334.1 562.2,333.0" fill-opacity="0.50"/><polygon points="562.0,333.3 567.2,335.2 566.8,335.7 561.5,333.8" fill-opacity="0.50"/><polygon points="561.4,334.0 565.9,335.7 565.6,336.2 561.0,334.5" fill-opacity="0.50"/><polygon points="551.1,346.9 554.4,348.2 554.0,348.7 550.7,347.4" fill-opacity="0.51"/><polygon points="550.4,347.7 556.0,349.9 555.5,350.5 549.9,348.3" fill-opacity="0.51"/><polygon points="549.8,348.6 554.6,350.5 554.1,351.0 549.3,349.1" fill-opacity="0.51"/><polygon points="538.0,363.4 541.4,364.9 540.9,365.5 537.5,364.0" fill-opacity="0.53"/><polygon points="537.2,364.3 543.0,366.9 542.4,367.6 536.6,365.1" fill-opacity="0.53"/><polygon points="536.4,365.3 541.4,367.5 540.9,368.2 535.9,366.0" fill-opacity="0.54"/><polygon points="522.6,382.5 526.3,384.3 525.7,385.0 522.1,383.3" fill-opacity="0.56"/><polygon points="521.7,383.7 527.8,386.6 527.2,387.5 521.1,384.5" fill-opacity="0.56"/><polygon points="520.8,384.8 526.1,387.4 525.5,388.2 520.2,385.6" fill-opacity="0.56"/><polygon points="504.6,405.1 508.4,407.2 507.8,408.1 503.9,406.0" fill-opacity="0.58"/><polygon points="503.5,406.5 510.0,410.0 509.2,411.0 502.7,407.5" fill-opacity="0.59"/><polygon points="502.4,407.9 508.0,410.9 507.3,411.8 501.7,408.7" fill-opacity="0.59"/><polygon points="483.1,432.1 487.1,434.6 486.3,435.7 482.3,433.2" fill-opacity="0.62"/><polygon points="481.8,433.7 488.5,438.0 487.6,439.2 480.8,435.0" fill-opacity="0.62"/><polygon points="480.5,435.4 486.3,439.1 485.5,440.2 479.6,436.5" fill-opacity="0.62"/><polygon points="456.9,464.9 461.1,468.0 460.1,469.3 455.9,466.2" fill-opacity="0.66"/><polygon points="455.3,466.9 462.4,472.1 461.2,473.7 454.1,468.4" fill-opacity="0.66"/><polygon points="453.7,469.0 459.8,473.5 458.8,474.9 452.6,470.3" fill-opacity="0.66"/><polygon points="424.4,505.7 428.8,509.5 427.5,511.2 423.1,507.3" fill-opacity="0.70"/><polygon points="422.4,508.2 429.8,514.8 428.3,516.7 420.9,510.0" fill-opacity="0.71"/><polygon points="420.3,510.7 426.8,516.5 425.5,518.2 419.0,512.4" fill-opacity="0.71"/><polygon points="661.9,238.2 663.9,238.5 663.8,238.7 661.8,238.3" fill-opacity="0.38"/><polygon points="661.8,238.4 665.1,239.0 665.0,239.1 661.7,238.6" fill-opacity="0.38"/><polygon points="661.6,238.6 664.5,239.1 664.4,239.2 661.5,238.8" fill-opacity="0.38"/><polygon points="659.5,242.2 661.6,242.6 661.5,242.7 659.5,242.4" fill-opacity="0.39"/><polygon points="659.4,242.5 662.8,243.1 662.7,243.2 659.3,242.6" fill-opacity="0.39"/><polygon points="659.3,242.7 662.2,243.2 662.2,243.4 659.2,242.8" fill-opacity="0.39"/><polygon points="657.0,246.6 659.1,246.9 659.1,247.1 656.9,246.7" fill-opacity="0.39"/><polygon points="656.9,246.8 660.4,247.5 660.3,247.6 656.8,247.0" fill-opacity="0.39"/><polygon points="656.7,247.1 659.8,247.6 659.7,247.8 656.6,247.2" fill-opacity="0.39"/><polygon points="654.3,251.2 656.5,251.7 656.4,251.8 654.2,251.4" fill-opacity="0.40"/><polygon points="654.2,251.5 657.8,252.2 657.7,252.4 654.0,251.7" fill-opacity="0.40"/><polygon points="654.0,251.8 657.2,252.4 657.1,252.6 653.9,252.0" fill-opacity="0.40"/><polygon points="651.4,256.3 653.6,256.8 653.5,256.9 651.3,256.5" fill-opacity="0.40"/><polygon points="651.2,256.6 655.0,257.3 654.9,257.6 651.1,256.8" fill-opacity="0.40"/><polygon points="651.0,256.9 654.3,257.5 654.2,257.7 650.9,257.1" fill-opacity="0.40"/><polygon points="648.2,261.8 650.5,262.3 650.4,262.5 648.1,262.0" fill-opacity="0.41"/><polygon points="648.0,262.1 651.9,262.9 651.8,263.2 647.9,262.4" fill-opacity="0.41"/><polygon points="647.8,262.4 651.2,263.1 651.1,263.4 647.7,262.6" fill-opacity="0.41"/><polygon points="644.7,267.8 647.2,268.3 647.0,268.5 644.6,268.0" fill-opacity="0.42"/><polygon points="644.5,268.1 648.6,269.0 648.5,269.3 644.4,268.4" fill-opacity="0.42"/><polygon points="644.3,268.5 647.9,269.3 647.7,269.5 644.2,268.7" fill-opacity="0.42"/><polygon points="640.9,274.4 643.5,274.9 643.3,275.2 640.8,274.6" fill-opacity="0.43"/><polygon points="640.7,274.7 645.0,275.7 644.8,276.0 640.5,275.0" fill-opacity="0.43"/><polygon points="640.5,275.1 644.2,276.0 644.0,276.2 640.3,275.4" fill-opacity="0.43"/><polygon points="636.7,281.5 639.4,282.2 639.2,282.5 636.6,281.8" fill-opacity="0.43"/><polygon points="636.5,282.0 641.0,283.0 640.8,283.3 636.3,282.3" fill-opacity="0.43"/><polygon points="636.3,282.4 640.1,283.3 640.0,283.6 636.1,282.7" fill-opacity="0.44"/><polygon points="632.1,289.5 634.9,290.2 634.7,290.5 632.0,289.8" fill-opacity="0.44"/><polygon points="631.9,289.9 636.5,291.1 636.3,291.5 631.7,290.3" fill-opacity="0.44"/><polygon points="631.6,290.4 635.6,291.4 635.5,291.7 631.4,290.7" fill-opacity="0.44"/><polygon points="627.0,298.3 629.9,299.1 629.8,299.4 626.8,298.6" fill-opacity="0.45"/><polygon points="626.7,298.8 631.6,300.1 631.4,300.5 626.5,299.2" fill-opacity="0.46"/><polygon points="626.4,299.3 630.7,300.5 630.5,300.8 626.2,299.7" fill-opacity="0.46"/><polygon points="621.3,308.1 624.4,309.0 624.2,309.4 621.1,308.5" fill-opacity="0.47"/><polygon points="621.0,308.7 626.1,310.2 625.9,310.6 620.8,309.1" fill-opacity="0.47"/><polygon points="620.7,309.3 625.1,310.5 624.9,310.9 620.5,309.6" fill-opacity="0.47"/><polygon points="614.9,319.1 618.1,320.1 617.9,320.5 614.7,319.6" fill-opacity="0.48"/><polygon points="614.6,319.8 619.9,321.4 619.7,321.9 614.3,320.3" fill-opacity="0.48"/><polygon points="614.2,320.4 618.9,321.9 618.6,322.3 613.9,320.9" fill-opacity="0.48"/><polygon points="607.7,331.6 611.1,332.7 610.8,333.2 607.4,332.1" fill-opacity="0.49"/><polygon points="607.3,332.3 612.9,334.2 612.6,334.8 607.0,332.9" fill-opacity="0.50"/><polygon points="606.9,333.1 611.8,334.7 611.5,335.2 606.6,333.5" fill-opacity="0.50"/><polygon points="599.5,345.8 603.0,347.1 602.7,347.6 599.2,346.3" fill-opacity="0.51"/><polygon points="599.0,346.6 605.0,348.8 604.6,349.4 598.6,347.3" fill-opacity="0.51"/><polygon points="598.5,347.5 603.7,349.4 603.4,349.9 598.2,348.0" fill-opacity="0.51"/><polygon points="590.0,362.1 593.8,363.6 593.4,364.2 589.7,362.7" fill-opacity="0.53"/><polygon points="589.5,363.1 595.8,365.6 595.4,366.3 589.0,363.8" fill-opacity="0.53"/><polygon points="588.9,364.1 594.4,366.2 594.0,366.9 588.5,364.7" fill-opacity="0.53"/><polygon points="579.0,381.1 583.0,382.8 582.6,383.6 578.6,381.8" fill-opacity="0.55"/><polygon points="578.4,382.2 585.1,385.2 584.6,386.0 577.9,383.1" fill-opacity="0.56"/><polygon points="577.7,383.4 583.5,385.9 583.1,386.7 577.3,384.1" fill-opacity="0.56"/><polygon points="566.1,403.4 570.3,405.5 569.8,406.3 565.6,404.3" fill-opacity="0.58"/><polygon points="565.3,404.8 572.5,408.2 571.9,409.2 564.7,405.7" fill-opacity="0.58"/><polygon points="564.5,406.1 570.7,409.1 570.2,410.0 564.0,407.0" fill-opacity="0.58"/><polygon points="550.6,430.1 555.2,432.5 554.6,433.6 550.0,431.1" fill-opacity="0.61"/><polygon points="549.7,431.7 557.3,435.8 556.7,437.1 549.0,432.9" fill-opacity="0.62"/><polygon points="548.7,433.3 555.4,437.0 554.8,438.0 548.1,434.4" fill-opacity="0.62"/><polygon points="531.9,462.4 536.7,465.4 536.0,466.7 531.1,463.7" fill-opacity="0.65"/><polygon points="530.7,464.4 538.9,469.5 538.1,471.0 529.9,465.8" fill-opacity="0.66"/><polygon points="529.6,466.4 536.7,470.9 535.9,472.2 528.8,467.7" fill-opacity="0.66"/><polygon points="508.6,502.5 513.8,506.3 512.9,507.9 507.7,504.1" fill-opacity="0.70"/><polygon points="507.2,505.0 516.0,511.4 514.9,513.3 506.1,506.8" fill-opacity="0.71"/><polygon points="505.7,507.5 513.4,513.2 512.4,514.8 504.8,509.1" fill-opacity="0.71"/></g>
<path d="M697.5 150.6L702.2 139.5M702.2 139.5L707.0 128.0M707.0 128.0L712.0 116.1M714.5 173.6L719.5 162.7M719.5 162.7L724.6 151.5M724.6 151.5L729.9 139.9M706.0 162.1L719.5 162.7M702.2 139.5L715.8 139.7M715.8 139.7L729.9 139.9M685.1 116.6L698.3 116.4M698.3 116.4L712.0 116.1" stroke="#ffe2ec" stroke-width="1.0" stroke-opacity="0.42" fill="none"/>
<path d="M509.1 212.8L510.3 205.9M510.3 205.9L511.6 198.8M511.6 198.8L512.9 191.6M522.4 215.0L523.8 208.0M509.1 212.8L515.7 213.9M515.7 213.9L522.4 215.0M522.4 215.0L529.4 216.2M511.6 198.8L518.4 199.8" stroke="#ffe2ec" stroke-width="1.2" stroke-opacity="0.25" fill="none"/>
<path d="M512.9 191.6L514.2 184.3M514.2 184.3L515.6 176.7M515.6 176.7L517.0 169.0M517.0 169.0L518.4 161.2M518.4 161.2L519.9 153.2M519.9 153.2L521.3 145.0M521.3 145.0L522.9 136.6M522.9 136.6L524.4 128.0M524.4 128.0L526.0 119.2M523.8 208.0L525.3 200.7M525.3 200.7L526.8 193.3M526.8 193.3L528.3 185.8M528.3 185.8L529.9 178.1M529.9 178.1L531.5 170.2M531.5 170.2L533.1 162.1M533.1 162.1L534.7 153.9M534.7 153.9L536.4 145.4M536.4 145.4L538.2 136.8M538.2 136.8L539.9 128.0M539.9 128.0L541.8 119.0M536.5 217.4L538.1 210.1M538.1 210.1L539.8 202.7M539.8 202.7L541.5 195.1M541.5 195.1L543.2 187.4M543.2 187.4L545.0 179.5M545.0 179.5L546.8 171.4M546.8 171.4L548.6 163.1M548.6 163.1L550.5 154.6M550.5 154.6L552.4 146.0M552.4 146.0L554.4 137.1M554.4 137.1L556.4 128.0M556.4 128.0L558.5 118.7M551.4 219.8L553.2 212.4M553.2 212.4L555.1 204.8M555.1 204.8L557.0 197.0M557.0 197.0L558.9 189.1M558.9 189.1L560.9 181.0M560.9 181.0L562.9 172.6M562.9 172.6L565.0 164.1M565.0 164.1L567.2 155.4M567.2 155.4L569.4 146.5M569.4 146.5L571.6 137.4M571.6 137.4L573.9 128.0M573.9 128.0L576.3 118.4M567.1 222.4L569.1 214.8M569.1 214.8L571.2 207.0M571.2 207.0L573.4 199.0M573.4 199.0L575.6 190.9M575.6 190.9L577.8 182.5M577.8 182.5L580.1 174.0M580.1 174.0L582.5 165.2M582.5 165.2L584.9 156.3M584.9 156.3L587.4 147.1M587.4 147.1L589.9 137.7M589.9 137.7L592.5 128.0M592.5 128.0L595.2 118.1M583.6 225.1L586.0 217.3M586.0 217.3L588.3 209.3M588.3 209.3L590.7 201.2M590.7 201.2L593.2 192.8M593.2 192.8L595.8 184.2M595.8 184.2L598.4 175.4M598.4 175.4L601.0 166.4M601.0 166.4L603.8 157.2M603.8 157.2L606.6 147.7M606.6 147.7L609.4 138.0M609.4 138.0L612.4 128.0M612.4 128.0L615.4 117.7M601.2 228.0L603.8 220.0M603.8 220.0L606.5 211.8M606.5 211.8L609.2 203.4M609.2 203.4L612.0 194.8M612.0 194.8L614.8 186.0M614.8 186.0L617.8 176.9M617.8 176.9L620.8 167.7M620.8 167.7L623.9 158.1M623.9 158.1L627.0 148.4M619.9 231.1L622.8 222.9M622.8 222.9L625.8 214.5M625.8 214.5L628.8 205.8M628.8 205.8L632.0 197.0M632.0 197.0L635.2 187.9M635.2 187.9L638.5 178.6M638.5 178.6L641.8 169.0M639.7 234.3L643.0 225.9M643.0 225.9L646.3 217.3M646.3 217.3L649.8 208.4M649.8 208.4L653.3 199.3M660.9 237.8L664.5 229.2M664.5 229.2L668.3 220.3M529.4 216.2L536.5 217.4M536.5 217.4L543.8 218.6M543.8 218.6L551.4 219.8M551.4 219.8L559.1 221.1M559.1 221.1L567.1 222.4M567.1 222.4L575.2 223.7M575.2 223.7L583.6 225.1M583.6 225.1L592.3 226.5M592.3 226.5L601.2 228.0M601.2 228.0L610.4 229.5M610.4 229.5L619.9 231.1M619.9 231.1L629.7 232.7M629.7 232.7L639.7 234.3M639.7 234.3L650.2 236.1M650.2 236.1L660.9 237.8M660.9 237.8L672.0 239.7M672.0 239.7L683.5 241.5M518.4 199.8L525.3 200.7M525.3 200.7L532.4 201.7M532.4 201.7L539.8 202.7M539.8 202.7L547.3 203.7M547.3 203.7L555.1 204.8M555.1 204.8L563.0 205.9M563.0 205.9L571.2 207.0M571.2 207.0L579.6 208.2M579.6 208.2L588.3 209.3M588.3 209.3L597.3 210.6M597.3 210.6L606.5 211.8M606.5 211.8L616.0 213.1M616.0 213.1L625.8 214.5M625.8 214.5L635.9 215.8M635.9 215.8L646.3 217.3M646.3 217.3L657.1 218.7M657.1 218.7L668.3 220.3M514.2 184.3L521.2 185.0M521.2 185.0L528.3 185.8M528.3 185.8L535.6 186.6M535.6 186.6L543.2 187.4M543.2 187.4L550.9 188.2M550.9 188.2L558.9 189.1M558.9 189.1L567.1 190.0M567.1 190.0L575.6 190.9M575.6 190.9L584.3 191.8M584.3 191.8L593.2 192.8M593.2 192.8L602.5 193.8M602.5 193.8L612.0 194.8M612.0 194.8L621.8 195.9M621.8 195.9L632.0 197.0M632.0 197.0L642.4 198.1M642.4 198.1L653.3 199.3M517.0 169.0L524.1 169.6M524.1 169.6L531.5 170.2M531.5 170.2L539.0 170.8M539.0 170.8L546.8 171.4M546.8 171.4L554.7 172.0M554.7 172.0L562.9 172.6M562.9 172.6L571.4 173.3M571.4 173.3L580.1 174.0M580.1 174.0L589.1 174.7M589.1 174.7L598.4 175.4M598.4 175.4L607.9 176.2M607.9 176.2L617.8 176.9M617.8 176.9L627.9 177.7M627.9 177.7L638.5 178.6M638.5 178.6L649.3 179.4M519.9 153.2L527.2 153.5M527.2 153.5L534.7 153.9M534.7 153.9L542.5 154.2M542.5 154.2L550.5 154.6M550.5 154.6L558.7 155.0M558.7 155.0L567.2 155.4M567.2 155.4L575.9 155.8M575.9 155.8L584.9 156.3M584.9 156.3L594.2 156.7M594.2 156.7L603.8 157.2M603.8 157.2L613.6 157.6M613.6 157.6L623.9 158.1M623.9 158.1L634.4 158.6M522.9 136.6L530.4 136.7M530.4 136.7L538.2 136.8M538.2 136.8L546.2 136.9M546.2 136.9L554.4 137.1M554.4 137.1L562.9 137.2M562.9 137.2L571.6 137.4M571.6 137.4L580.6 137.5M580.6 137.5L589.9 137.7M589.9 137.7L599.5 137.8M599.5 137.8L609.4 138.0M609.4 138.0L619.7 138.1M619.7 138.1L630.3 138.3M526.0 119.2L533.8 119.1M533.8 119.1L541.8 119.0M541.8 119.0L550.0 118.8M550.0 118.8L558.5 118.7M558.5 118.7L567.3 118.5M567.3 118.5L576.3 118.4M576.3 118.4L585.6 118.2M585.6 118.2L595.2 118.1M595.2 118.1L605.2 117.9M605.2 117.9L615.4 117.7" stroke="#ffe2ec" stroke-width="1.2" stroke-opacity="0.34" fill="none"/>
<path d="M627.0 148.4L630.3 138.3M630.3 138.3L633.6 128.0M633.6 128.0L637.1 117.4M641.8 169.0L645.3 159.2M645.3 159.2L648.9 149.1M648.9 149.1L652.6 138.7M652.6 138.7L656.3 128.0M656.3 128.0L660.2 117.0M653.3 199.3L656.9 189.9M656.9 189.9L660.6 180.3M660.6 180.3L664.4 170.4M664.4 170.4L668.3 160.3M668.3 160.3L672.3 149.8M672.3 149.8L676.5 139.1M676.5 139.1L680.7 128.0M680.7 128.0L685.1 116.6M668.3 220.3L672.1 211.1M672.1 211.1L676.0 201.7M676.0 201.7L680.1 192.1M680.1 192.1L684.3 182.2M684.3 182.2L688.5 171.9M688.5 171.9L693.0 161.4M693.0 161.4L697.5 150.6M683.5 241.5L687.5 232.6M687.5 232.6L691.7 223.5M691.7 223.5L696.0 214.1M696.0 214.1L700.4 204.4M700.4 204.4L705.0 194.4M705.0 194.4L709.7 184.2M709.7 184.2L714.5 173.6M668.3 220.3L679.8 221.8M679.8 221.8L691.7 223.5M653.3 199.3L664.5 200.5M664.5 200.5L676.0 201.7M676.0 201.7L688.0 203.0M688.0 203.0L700.4 204.4M649.3 179.4L660.6 180.3M660.6 180.3L672.2 181.2M672.2 181.2L684.3 182.2M684.3 182.2L696.7 183.1M696.7 183.1L709.7 184.2M634.4 158.6L645.3 159.2M645.3 159.2L656.6 159.7M656.6 159.7L668.3 160.3M668.3 160.3L680.4 160.8M680.4 160.8L693.0 161.4M693.0 161.4L706.0 162.1M630.3 138.3L641.2 138.5M641.2 138.5L652.6 138.7M652.6 138.7L664.3 138.9M664.3 138.9L676.5 139.1M676.5 139.1L689.1 139.3M689.1 139.3L702.2 139.5M615.4 117.7L626.1 117.6M626.1 117.6L637.1 117.4M637.1 117.4L648.4 117.2M648.4 117.2L660.2 117.0M660.2 117.0L672.4 116.8M672.4 116.8L685.1 116.6" stroke="#ffe2ec" stroke-width="1.2" stroke-opacity="0.42" fill="none"/>
<path d="M729.9 139.9L735.3 128.0M735.3 128.0L741.0 115.7M712.0 116.1L726.2 115.9M726.2 115.9L741.0 115.7" stroke="#ffe2ec" stroke-width="1.5" stroke-opacity="0.42" fill="none"/>
<g fill="#fff6f4" stroke="#fff6f4" stroke-opacity=".25" stroke-width=".9"><polygon points="526.9,120.0 528.6,120.0 528.5,120.6 526.8,120.6" fill-opacity="0.37"/><polygon points="526.7,121.0 530.0,120.9 529.8,121.7 526.6,121.8" fill-opacity="0.37"/><polygon points="523.8,137.3 525.4,137.4 525.3,138.0 523.7,137.9" fill-opacity="0.36"/><polygon points="523.6,138.3 526.7,138.3 526.6,139.1 523.5,139.0" fill-opacity="0.36"/><polygon points="520.7,153.9 522.3,154.0 522.2,154.6 520.6,154.5" fill-opacity="0.36"/><polygon points="520.6,154.8 523.6,155.0 523.5,155.7 520.4,155.6" fill-opacity="0.36"/><polygon points="517.8,169.8 519.4,169.9 519.3,170.5 517.7,170.4" fill-opacity="0.36"/><polygon points="517.7,170.7 520.7,170.9 520.5,171.6 517.6,171.4" fill-opacity="0.36"/><polygon points="515.1,185.0 516.6,185.2 516.5,185.7 515.0,185.6" fill-opacity="0.36"/><polygon points="514.9,185.9 517.8,186.2 517.7,186.8 514.8,186.5" fill-opacity="0.36"/><polygon points="512.4,199.6 513.9,199.8 513.8,200.3 512.3,200.1" fill-opacity="0.35"/><polygon points="512.3,200.4 515.1,200.8 515.0,201.4 512.1,201.0" fill-opacity="0.35"/><polygon points="542.7,119.8 544.5,119.7 544.4,120.4 542.6,120.4" fill-opacity="0.37"/><polygon points="542.5,120.8 546.0,120.7 545.8,121.5 542.4,121.6" fill-opacity="0.37"/><polygon points="539.1,137.6 540.9,137.7 540.7,138.3 539.0,138.2" fill-opacity="0.37"/><polygon points="538.9,138.6 542.3,138.6 542.1,139.4 538.8,139.4" fill-opacity="0.37"/><polygon points="535.7,154.7 537.4,154.8 537.2,155.3 535.5,155.3" fill-opacity="0.36"/><polygon points="535.5,155.6 538.7,155.8 538.6,156.5 535.3,156.3" fill-opacity="0.36"/><polygon points="532.4,171.0 534.0,171.1 533.9,171.7 532.2,171.5" fill-opacity="0.36"/><polygon points="532.2,171.9 535.3,172.1 535.2,172.8 532.0,172.6" fill-opacity="0.36"/><polygon points="529.2,186.6 530.8,186.8 530.7,187.3 529.1,187.1" fill-opacity="0.36"/><polygon points="529.0,187.4 532.1,187.8 531.9,188.4 528.9,188.1" fill-opacity="0.36"/><polygon points="526.2,201.5 527.7,201.7 527.6,202.2 526.1,202.0" fill-opacity="0.36"/><polygon points="526.0,202.3 529.0,202.7 528.8,203.4 525.9,203.0" fill-opacity="0.36"/><polygon points="559.5,119.5 561.4,119.5 561.3,120.1 559.4,120.2" fill-opacity="0.37"/><polygon points="559.3,120.5 562.9,120.5 562.7,121.3 559.1,121.4" fill-opacity="0.37"/><polygon points="555.4,137.9 557.2,137.9 557.1,138.6 555.2,138.5" fill-opacity="0.37"/><polygon points="555.2,138.9 558.7,139.0 558.5,139.8 555.0,139.7" fill-opacity="0.37"/><polygon points="551.5,155.5 553.2,155.5 553.1,156.1 551.3,156.1" fill-opacity="0.37"/><polygon points="551.2,156.4 554.7,156.6 554.5,157.3 551.1,157.2" fill-opacity="0.37"/><polygon points="547.7,172.2 549.4,172.3 549.3,172.9 547.6,172.8" fill-opacity="0.36"/><polygon points="547.5,173.1 550.8,173.4 550.6,174.1 547.3,173.8" fill-opacity="0.36"/><polygon points="544.1,188.2 545.8,188.4 545.7,188.9 544.0,188.8" fill-opacity="0.36"/><polygon points="543.9,189.1 547.1,189.4 547.0,190.1 543.8,189.8" fill-opacity="0.36"/><polygon points="540.7,203.5 542.3,203.7 542.2,204.3 540.5,204.0" fill-opacity="0.36"/><polygon points="540.5,204.3 543.6,204.8 543.5,205.5 540.3,205.0" fill-opacity="0.36"/><polygon points="577.4,119.2 579.4,119.2 579.2,119.9 577.2,119.9" fill-opacity="0.38"/><polygon points="577.1,120.3 581.0,120.3 580.7,121.1 576.9,121.2" fill-opacity="0.38"/><polygon points="572.7,138.2 574.6,138.2 574.5,138.9 572.5,138.9" fill-opacity="0.37"/><polygon points="572.4,139.2 576.2,139.3 576.0,140.1 572.2,140.1" fill-opacity="0.37"/><polygon points="568.2,156.3 570.1,156.4 569.9,157.0 568.0,156.9" fill-opacity="0.37"/><polygon points="568.0,157.2 571.6,157.4 571.4,158.2 567.8,158.0" fill-opacity="0.37"/><polygon points="563.9,173.5 565.8,173.6 565.6,174.2 563.8,174.1" fill-opacity="0.37"/><polygon points="563.7,174.4 567.2,174.7 567.0,175.5 563.5,175.2" fill-opacity="0.37"/><polygon points="559.9,189.9 561.7,190.1 561.5,190.7 559.7,190.5" fill-opacity="0.36"/><polygon points="559.6,190.8 563.1,191.2 562.9,191.9 559.5,191.5" fill-opacity="0.36"/><polygon points="556.0,205.6 557.7,205.9 557.6,206.4 555.8,206.2" fill-opacity="0.36"/><polygon points="555.8,206.5 559.1,206.9 558.9,207.6 555.6,207.2" fill-opacity="0.36"/><polygon points="596.4,119.0 598.5,118.9 598.3,119.6 596.2,119.7" fill-opacity="0.38"/><polygon points="596.1,120.1 600.2,120.0 599.9,120.9 595.8,121.0" fill-opacity="0.38"/><polygon points="591.0,138.5 593.1,138.6 592.9,139.2 590.8,139.2" fill-opacity="0.38"/><polygon points="590.7,139.6 594.7,139.7 594.5,140.5 590.5,140.4" fill-opacity="0.38"/><polygon points="586.0,157.2 588.0,157.3 587.8,157.9 585.8,157.8" fill-opacity="0.37"/><polygon points="585.7,158.1 589.6,158.3 589.3,159.2 585.5,159.0" fill-opacity="0.37"/><polygon points="581.2,174.9 583.1,175.0 582.9,175.6 581.0,175.5" fill-opacity="0.37"/><polygon points="580.9,175.8 584.6,176.1 584.4,176.9 580.7,176.6" fill-opacity="0.37"/><polygon points="576.6,191.8 578.5,192.0 578.3,192.5 576.4,192.3" fill-opacity="0.37"/><polygon points="576.3,192.7 579.9,193.1 579.7,193.8 576.1,193.4" fill-opacity="0.37"/><polygon points="572.2,207.9 574.0,208.1 573.9,208.7 572.0,208.4" fill-opacity="0.37"/><polygon points="571.9,208.7 575.5,209.2 575.3,209.9 571.8,209.4" fill-opacity="0.37"/><polygon points="616.6,118.7 618.9,118.6 618.7,119.3 616.4,119.4" fill-opacity="0.39"/><polygon points="616.3,119.8 620.7,119.7 620.4,120.7 616.0,120.7" fill-opacity="0.39"/><polygon points="610.6,138.9 612.8,138.9 612.6,139.6 610.4,139.6" fill-opacity="0.38"/><polygon points="610.3,140.0 614.5,140.0 614.3,140.9 610.0,140.8" fill-opacity="0.38"/><polygon points="604.9,158.1 607.0,158.2 606.8,158.8 604.7,158.7" fill-opacity="0.38"/><polygon points="604.6,159.1 608.7,159.3 608.4,160.2 604.3,159.9" fill-opacity="0.38"/><polygon points="599.4,176.3 601.5,176.5 601.3,177.1 599.3,177.0" fill-opacity="0.37"/><polygon points="599.1,177.3 603.1,177.6 602.9,178.4 598.9,178.1" fill-opacity="0.37"/><polygon points="594.3,193.7 596.3,193.9 596.1,194.5 594.1,194.3" fill-opacity="0.37"/><polygon points="594.0,194.6 597.8,195.1 597.6,195.8 593.8,195.4" fill-opacity="0.37"/><polygon points="589.3,210.2 591.3,210.5 591.1,211.1 589.2,210.8" fill-opacity="0.37"/><polygon points="589.1,211.1 592.8,211.6 592.6,212.4 588.9,211.8" fill-opacity="0.37"/><polygon points="638.3,118.3 640.8,118.3 640.5,119.0 638.1,119.1" fill-opacity="0.39"/><polygon points="637.9,119.5 642.7,119.4 642.3,120.4 637.6,120.5" fill-opacity="0.39"/><polygon points="631.5,139.3 633.9,139.3 633.6,140.0 631.3,140.0" fill-opacity="0.39"/><polygon points="631.1,140.4 635.7,140.5 635.4,141.4 630.8,141.3" fill-opacity="0.39"/><polygon points="625.0,159.1 627.3,159.2 627.1,159.9 624.8,159.7" fill-opacity="0.38"/><polygon points="624.7,160.1 629.1,160.4 628.8,161.2 624.4,161.0" fill-opacity="0.38"/><polygon points="618.9,177.9 621.1,178.1 620.9,178.7 618.7,178.5" fill-opacity="0.38"/><polygon points="618.6,178.9 622.8,179.2 622.5,180.1 618.3,179.7" fill-opacity="0.38"/><polygon points="613.1,195.8 615.2,196.0 615.0,196.6 612.9,196.4" fill-opacity="0.38"/><polygon points="612.8,196.7 616.9,197.2 616.6,197.9 612.5,197.5" fill-opacity="0.38"/><polygon points="607.5,212.7 609.6,213.0 609.4,213.6 607.4,213.3" fill-opacity="0.37"/><polygon points="607.3,213.7 611.2,214.2 611.0,215.0 607.0,214.4" fill-opacity="0.37"/><polygon points="661.6,118.0 664.2,117.9 663.9,118.7 661.3,118.8" fill-opacity="0.39"/><polygon points="661.1,119.2 666.2,119.1 665.8,120.1 660.8,120.2" fill-opacity="0.39"/><polygon points="653.8,139.6 656.4,139.7 656.1,140.4 653.6,140.4" fill-opacity="0.39"/><polygon points="653.4,140.8 658.3,140.9 658.0,141.8 653.1,141.7" fill-opacity="0.39"/><polygon points="646.6,160.1 649.0,160.3 648.8,161.0 646.3,160.8" fill-opacity="0.39"/><polygon points="646.2,161.2 650.9,161.5 650.5,162.4 645.9,162.1" fill-opacity="0.39"/><polygon points="639.7,179.5 642.0,179.7 641.8,180.4 639.4,180.2" fill-opacity="0.38"/><polygon points="639.3,180.6 643.8,180.9 643.5,181.8 639.0,181.4" fill-opacity="0.38"/><polygon points="633.1,197.9 635.4,198.2 635.2,198.8 632.9,198.6" fill-opacity="0.38"/><polygon points="632.8,198.9 637.1,199.4 636.8,200.2 632.5,199.7" fill-opacity="0.38"/><polygon points="626.9,215.4 629.1,215.7 628.9,216.3 626.7,216.0" fill-opacity="0.38"/><polygon points="626.6,216.4 630.8,216.9 630.5,217.7 626.3,217.1" fill-opacity="0.38"/><polygon points="686.5,117.6 689.4,117.6 689.1,118.4 686.2,118.4" fill-opacity="0.40"/><polygon points="686.0,118.9 691.5,118.8 691.1,119.8 685.6,119.9" fill-opacity="0.40"/><polygon points="677.8,140.1 680.6,140.1 680.3,140.9 677.5,140.8" fill-opacity="0.40"/><polygon points="677.4,141.3 682.6,141.4 682.2,142.4 677.0,142.2" fill-opacity="0.40"/><polygon points="669.6,161.3 672.2,161.4 672.0,162.1 669.3,162.0" fill-opacity="0.39"/><polygon points="669.2,162.4 674.2,162.7 673.8,163.6 668.8,163.3" fill-opacity="0.39"/><polygon points="661.8,181.3 664.4,181.5 664.1,182.2 661.6,182.0" fill-opacity="0.39"/><polygon points="661.4,182.4 666.3,182.8 665.9,183.6 661.1,183.2" fill-opacity="0.39"/><polygon points="654.5,200.3 656.9,200.5 656.7,201.2 654.2,200.9" fill-opacity="0.38"/><polygon points="654.1,201.3 658.8,201.8 658.4,202.6 653.8,202.1" fill-opacity="0.38"/><polygon points="647.5,218.3 649.9,218.6 649.6,219.2 647.3,218.9" fill-opacity="0.38"/><polygon points="647.1,219.2 651.6,219.8 651.3,220.6 646.8,220.0" fill-opacity="0.38"/><polygon points="713.5,117.2 716.6,117.2 716.2,118.0 713.1,118.0" fill-opacity="0.41"/><polygon points="712.9,118.5 718.8,118.4 718.3,119.5 712.5,119.6" fill-opacity="0.41"/><polygon points="703.6,140.5 706.6,140.6 706.2,141.4 703.3,141.3" fill-opacity="0.40"/><polygon points="703.1,141.8 708.7,141.9 708.3,142.9 702.7,142.8" fill-opacity="0.40"/><polygon points="694.3,162.5 697.2,162.6 696.9,163.4 694.0,163.2" fill-opacity="0.40"/><polygon points="693.8,163.7 699.3,163.9 698.8,164.9 693.4,164.6" fill-opacity="0.40"/><polygon points="685.6,183.2 688.3,183.4 688.0,184.1 685.3,183.9" fill-opacity="0.39"/><polygon points="685.1,184.3 690.3,184.7 689.9,185.6 684.8,185.2" fill-opacity="0.39"/><polygon points="677.3,202.8 679.9,203.1 679.7,203.7 677.1,203.4" fill-opacity="0.39"/><polygon points="676.9,203.8 681.9,204.4 681.5,205.2 676.5,204.7" fill-opacity="0.39"/><polygon points="669.5,221.3 672.0,221.6 671.8,222.3 669.2,221.9" fill-opacity="0.39"/><polygon points="669.1,222.3 673.9,223.0 673.5,223.8 668.8,223.1" fill-opacity="0.39"/></g>
<path d="M301.6 294.1L299.9 282.0M320.6 262.0L319.3 249.5M319.3 249.5L317.9 236.5M338.1 217.9L337.2 204.4M337.2 204.4L336.2 190.4M356.4 187.1L355.9 173.2M355.9 173.2L355.3 158.7M374.1 142.9L373.8 128.0M373.8 128.0L373.6 112.5M290.0 298.6L301.6 294.1M301.6 294.1L312.6 289.8M309.7 265.6L320.6 262.0M317.9 236.5L328.8 233.6M328.8 233.6L339.0 230.9M337.2 204.4L347.3 202.4M345.8 174.4L355.9 173.2M355.9 173.2L365.4 172.0M364.6 143.3L374.1 142.9M373.6 112.5L382.9 112.9M382.9 112.9L391.8 113.3" stroke="#ffe2ec" stroke-width="1.0" stroke-opacity="0.37" fill="none"/>
<path d="M475.0 226.2L476.0 218.3M482.6 223.2L483.7 215.5M483.7 215.5L484.9 207.7M484.9 207.7L486.0 199.7M486.0 199.7L487.2 191.4M489.8 220.4L491.0 212.9M491.0 212.9L492.1 205.3M492.1 205.3L493.4 197.5M493.4 197.5L494.6 189.5M494.6 189.5L495.8 181.3M495.8 181.3L497.1 172.9M496.6 217.7L497.8 210.4M497.8 210.4L499.0 203.0M499.0 203.0L500.3 195.4M500.3 195.4L501.5 187.6M501.5 187.6L502.8 179.7M502.8 179.7L504.2 171.6M504.2 171.6L505.5 163.3M505.5 163.3L506.9 154.7M506.9 154.7L508.3 146.0M503.0 215.2L504.2 208.1M504.2 208.1L505.5 200.9M505.5 200.9L506.8 193.5M506.8 193.5L508.1 185.9M508.1 185.9L509.4 178.2M509.4 178.2L510.8 170.3M510.8 170.3L512.2 162.2M512.2 162.2L513.6 153.9M513.6 153.9L515.0 145.5M515.0 145.5L516.5 136.8M516.5 136.8L518.1 128.0M518.1 128.0L519.6 118.9M509.1 212.8L510.3 205.9M510.3 205.9L511.6 198.8M511.6 198.8L512.9 191.6M512.9 191.6L514.2 184.3M514.2 184.3L515.6 176.7M515.6 176.7L517.0 169.0M517.0 169.0L518.4 161.2M518.4 161.2L519.9 153.2M519.9 153.2L521.3 145.0M521.3 145.0L522.9 136.6M522.9 136.6L524.4 128.0M524.4 128.0L526.0 119.2M471.0 227.8L475.0 226.2M475.0 226.2L478.9 224.7M478.9 224.7L482.6 223.2M482.6 223.2L486.3 221.8M486.3 221.8L489.8 220.4M489.8 220.4L493.3 219.0M493.3 219.0L496.6 217.7M496.6 217.7L499.8 216.5M499.8 216.5L503.0 215.2M503.0 215.2L506.1 214.0M506.1 214.0L509.1 212.8M481.0 209.0L484.9 207.7M484.9 207.7L488.6 206.5M488.6 206.5L492.1 205.3M492.1 205.3L495.6 204.1M495.6 204.1L499.0 203.0M499.0 203.0L502.3 201.9M502.3 201.9L505.5 200.9M505.5 200.9L508.6 199.8M508.6 199.8L511.6 198.8M487.2 191.4L491.0 190.4M491.0 190.4L494.6 189.5M494.6 189.5L498.1 188.5M498.1 188.5L501.5 187.6M501.5 187.6L504.8 186.8M504.8 186.8L508.1 185.9M508.1 185.9L511.2 185.1M511.2 185.1L514.2 184.3M497.1 172.9L500.7 172.2M500.7 172.2L504.2 171.6M504.2 171.6L507.5 170.9M507.5 170.9L510.8 170.3M510.8 170.3L513.9 169.6M513.9 169.6L517.0 169.0M503.4 155.2L506.9 154.7M506.9 154.7L510.3 154.3M510.3 154.3L513.6 153.9M513.6 153.9L516.8 153.5M516.8 153.5L519.9 153.2M513.2 137.0L516.5 136.8M516.5 136.8L519.7 136.7M519.7 136.7L522.9 136.6M519.6 118.9L522.9 119.1M522.9 119.1L526.0 119.2" stroke="#ffe2ec" stroke-width="1.2" stroke-opacity="0.09" fill="none"/>
<path d="M404.2 253.9L404.5 244.2M416.7 249.0L417.1 239.6M417.1 239.6L417.6 229.9M417.6 229.9L418.1 220.0M418.1 220.0L418.5 209.7M428.2 244.5L428.8 235.4M428.8 235.4L429.4 226.0M429.4 226.0L430.0 216.4M430.0 216.4L430.7 206.5M430.7 206.5L431.3 196.3M431.3 196.3L432.0 185.7M432.0 185.7L432.7 174.9M438.9 240.3L439.6 231.5M439.6 231.5L440.4 222.4M440.4 222.4L441.1 213.1M441.1 213.1L441.9 203.5M441.9 203.5L442.7 193.6M442.7 193.6L443.5 183.5M443.5 183.5L444.4 173.0M444.4 173.0L445.2 162.3M445.2 162.3L446.1 151.2M448.9 236.4L449.7 227.8M449.7 227.8L450.5 219.0M450.5 219.0L451.4 210.0M451.4 210.0L452.3 200.7M452.3 200.7L453.2 191.2M453.2 191.2L454.1 181.4M454.1 181.4L455.1 171.3M455.1 171.3L456.1 161.0M456.1 161.0L457.1 150.3M457.1 150.3L458.2 139.3M458.2 139.3L459.2 128.0M459.2 128.0L460.4 116.3M458.2 232.8L459.1 224.5M459.1 224.5L460.0 215.9M460.0 215.9L461.0 207.2M461.0 207.2L461.9 198.2M461.9 198.2L462.9 188.9M462.9 188.9L464.0 179.5M464.0 179.5L465.0 169.7M465.0 169.7L466.1 159.7M466.1 159.7L467.3 149.4M467.3 149.4L468.4 138.9M468.4 138.9L469.6 128.0M469.6 128.0L470.8 116.8M466.8 229.4L467.8 221.3M467.8 221.3L468.8 213.0M468.8 213.0L469.9 204.5M469.9 204.5L470.9 195.8M470.9 195.8L472.0 186.8M472.0 186.8L473.1 177.7M473.1 177.7L474.3 168.3M474.3 168.3L475.5 158.6M475.5 158.6L476.7 148.7M476.7 148.7L477.9 138.5M477.9 138.5L479.2 128.0M479.2 128.0L480.5 117.2M476.0 218.3L477.1 210.3M477.1 210.3L478.2 202.0M478.2 202.0L479.3 193.5M479.3 193.5L480.5 184.9M480.5 184.9L481.7 176.0M481.7 176.0L482.9 166.9M482.9 166.9L484.1 157.5M484.1 157.5L485.4 147.9M485.4 147.9L486.7 138.1M486.7 138.1L488.1 128.0M488.1 128.0L489.5 117.6M487.2 191.4L488.4 183.0M488.4 183.0L489.7 174.4M489.7 174.4L490.9 165.6M490.9 165.6L492.2 156.5M492.2 156.5L493.6 147.3M493.6 147.3L495.0 137.7M495.0 137.7L496.4 128.0M496.4 128.0L497.8 118.0M497.1 172.9L498.5 164.4M498.5 164.4L499.8 155.6M499.8 155.6L501.2 146.6M501.2 146.6L502.6 137.4M502.6 137.4L504.1 128.0M504.1 128.0L505.6 118.3M508.3 146.0L509.8 137.1M509.8 137.1L511.3 128.0M511.3 128.0L512.8 118.6M397.6 256.5L404.2 253.9M404.2 253.9L410.6 251.4M410.6 251.4L416.7 249.0M416.7 249.0L422.5 246.7M422.5 246.7L428.2 244.5M428.2 244.5L433.6 242.4M433.6 242.4L438.9 240.3M438.9 240.3L444.0 238.3M444.0 238.3L448.9 236.4M448.9 236.4L453.6 234.6M453.6 234.6L458.2 232.8M458.2 232.8L462.6 231.0M462.6 231.0L466.8 229.4M466.8 229.4L471.0 227.8M411.3 232.0L417.6 229.9M417.6 229.9L423.6 228.0M423.6 228.0L429.4 226.0M429.4 226.0L435.0 224.2M435.0 224.2L440.4 222.4M440.4 222.4L445.5 220.7M445.5 220.7L450.5 219.0M450.5 219.0L455.3 217.5M455.3 217.5L460.0 215.9M460.0 215.9L464.5 214.4M464.5 214.4L468.8 213.0M468.8 213.0L473.0 211.6M473.0 211.6L477.1 210.3M477.1 210.3L481.0 209.0M418.5 209.7L424.7 208.1M424.7 208.1L430.7 206.5M430.7 206.5L436.4 205.0M436.4 205.0L441.9 203.5M441.9 203.5L447.2 202.1M447.2 202.1L452.3 200.7M452.3 200.7L457.2 199.4M457.2 199.4L461.9 198.2M461.9 198.2L466.5 197.0M466.5 197.0L470.9 195.8M470.9 195.8L475.2 194.6M475.2 194.6L479.3 193.5M479.3 193.5L483.3 192.5M483.3 192.5L487.2 191.4M432.0 185.7L437.9 184.6M437.9 184.6L443.5 183.5M443.5 183.5L448.9 182.4M448.9 182.4L454.1 181.4M454.1 181.4L459.1 180.4M459.1 180.4L464.0 179.5M464.0 179.5L468.6 178.6M468.6 178.6L473.1 177.7M473.1 177.7L477.5 176.8M477.5 176.8L481.7 176.0M481.7 176.0L485.7 175.2M485.7 175.2L489.7 174.4M489.7 174.4L493.5 173.7M493.5 173.7L497.1 172.9M439.5 163.0L445.2 162.3M445.2 162.3L450.8 161.6M450.8 161.6L456.1 161.0M456.1 161.0L461.2 160.3M461.2 160.3L466.1 159.7M466.1 159.7L470.9 159.1M470.9 159.1L475.5 158.6M475.5 158.6L479.9 158.0M479.9 158.0L484.1 157.5M484.1 157.5L488.3 157.0M488.3 157.0L492.2 156.5M492.2 156.5L496.1 156.1M496.1 156.1L499.8 155.6M499.8 155.6L503.4 155.2M452.7 139.5L458.2 139.3M458.2 139.3L463.4 139.1M463.4 139.1L468.4 138.9M468.4 138.9L473.3 138.7M473.3 138.7L477.9 138.5M477.9 138.5L482.4 138.3M482.4 138.3L486.7 138.1M486.7 138.1L490.9 137.9M490.9 137.9L495.0 137.7M495.0 137.7L498.9 137.6M498.9 137.6L502.6 137.4M502.6 137.4L506.3 137.3M506.3 137.3L509.8 137.1M509.8 137.1L513.2 137.0M460.4 116.3L465.7 116.6M465.7 116.6L470.8 116.8M470.8 116.8L475.8 117.0M475.8 117.0L480.5 117.2M480.5 117.2L485.1 117.4M485.1 117.4L489.5 117.6M489.5 117.6L493.7 117.8M493.7 117.8L497.8 118.0M497.8 118.0L501.8 118.1M501.8 118.1L505.6 118.3M505.6 118.3L509.3 118.5M509.3 118.5L512.8 118.6M512.8 118.6L516.3 118.8M516.3 118.8L519.6 118.9" stroke="#ffe2ec" stroke-width="1.2" stroke-opacity="0.18" fill="none"/>
<path d="M342.4 278.1L341.6 266.9M360.0 271.2L359.5 260.5M359.5 260.5L359.1 249.3M359.1 249.3L358.6 237.8M376.0 264.9L375.8 254.5M375.8 254.5L375.7 243.8M375.7 243.8L375.5 232.7M375.5 232.7L375.3 221.2M375.3 221.2L375.1 209.3M375.1 209.3L374.9 197.0M390.7 259.2L390.8 249.1M390.8 249.1L390.9 238.8M390.9 238.8L390.9 228.1M390.9 228.1L391.0 217.0M391.0 217.0L391.1 205.6M391.1 205.6L391.2 193.8M391.2 193.8L391.3 181.5M391.3 181.5L391.4 168.9M391.4 168.9L391.5 155.7M404.5 244.2L404.8 234.2M404.8 234.2L405.1 223.9M405.1 223.9L405.4 213.2M405.4 213.2L405.7 202.2M405.7 202.2L406.0 190.9M406.0 190.9L406.3 179.1M406.3 179.1L406.7 167.0M406.7 167.0L407.0 154.4M407.0 154.4L407.4 141.4M407.4 141.4L407.8 128.0M418.5 209.7L419.0 199.1M419.0 199.1L419.6 188.2M419.6 188.2L420.1 176.9M420.1 176.9L420.7 165.3M420.7 165.3L421.2 153.3M421.2 153.3L421.8 140.8M421.8 140.8L422.4 128.0M422.4 128.0L423.1 114.7M432.7 174.9L433.5 163.7M433.5 163.7L434.2 152.2M434.2 152.2L435.0 140.3M435.0 140.3L435.8 128.0M435.8 128.0L436.6 115.3M446.1 151.2L447.1 139.8M447.1 139.8L448.0 128.0M448.0 128.0L449.0 115.8M342.4 278.1L351.4 274.6M351.4 274.6L360.0 271.2M360.0 271.2L368.2 268.0M368.2 268.0L376.0 264.9M376.0 264.9L383.5 262.0M383.5 262.0L390.7 259.2M390.7 259.2L397.6 256.5M350.1 252.3L359.1 249.3M359.1 249.3L367.6 246.5M367.6 246.5L375.7 243.8M375.7 243.8L383.4 241.2M383.4 241.2L390.9 238.8M390.9 238.8L398.0 236.4M398.0 236.4L404.8 234.2M404.8 234.2L411.3 232.0M366.9 223.4L375.3 221.2M375.3 221.2L383.3 219.1M383.3 219.1L391.0 217.0M391.0 217.0L398.3 215.1M398.3 215.1L405.4 213.2M405.4 213.2L412.1 211.4M412.1 211.4L418.5 209.7M374.9 197.0L383.2 195.3M383.2 195.3L391.2 193.8M391.2 193.8L398.8 192.3M398.8 192.3L406.0 190.9M406.0 190.9L412.9 189.5M412.9 189.5L419.6 188.2M419.6 188.2L425.9 186.9M425.9 186.9L432.0 185.7M391.4 168.9L399.2 167.9M399.2 167.9L406.7 167.0M406.7 167.0L413.8 166.1M413.8 166.1L420.7 165.3M420.7 165.3L427.2 164.5M427.2 164.5L433.5 163.7M433.5 163.7L439.5 163.0M399.7 141.8L407.4 141.4M407.4 141.4L414.8 141.1M414.8 141.1L421.8 140.8M421.8 140.8L428.5 140.6M428.5 140.6L435.0 140.3M435.0 140.3L441.1 140.0M441.1 140.0L447.1 139.8M447.1 139.8L452.7 139.5M415.8 114.4L423.1 114.7M423.1 114.7L430.0 115.0M430.0 115.0L436.6 115.3M436.6 115.3L442.9 115.6M442.9 115.6L449.0 115.8M449.0 115.8L454.8 116.1M454.8 116.1L460.4 116.3" stroke="#ffe2ec" stroke-width="1.2" stroke-opacity="0.28" fill="none"/>
<path d="M323.0 285.7L321.8 274.1M321.8 274.1L320.6 262.0M341.6 266.9L340.8 255.4M340.8 255.4L339.9 243.3M339.9 243.3L339.0 230.9M339.0 230.9L338.1 217.9M358.6 237.8L358.1 225.8M358.1 225.8L357.5 213.4M357.5 213.4L357.0 200.5M357.0 200.5L356.4 187.1M374.9 197.0L374.7 184.2M374.7 184.2L374.5 170.9M374.5 170.9L374.3 157.2M374.3 157.2L374.1 142.9M391.5 155.7L391.6 142.1M391.6 142.1L391.7 128.0M391.7 128.0L391.8 113.3M407.8 128.0L408.2 114.0M312.6 289.8L323.0 285.7M323.0 285.7L332.9 281.8M332.9 281.8L342.4 278.1M320.6 262.0L330.9 258.6M330.9 258.6L340.8 255.4M340.8 255.4L350.1 252.3M339.0 230.9L348.8 228.3M348.8 228.3L358.1 225.8M358.1 225.8L366.9 223.4M347.3 202.4L357.0 200.5M357.0 200.5L366.2 198.7M366.2 198.7L374.9 197.0M365.4 172.0L374.5 170.9M374.5 170.9L383.1 169.9M383.1 169.9L391.4 168.9M374.1 142.9L383.0 142.5M383.0 142.5L391.6 142.1M391.6 142.1L399.7 141.8M391.8 113.3L400.2 113.7M400.2 113.7L408.2 114.0M408.2 114.0L415.8 114.4" stroke="#ffe2ec" stroke-width="1.2" stroke-opacity="0.37" fill="none"/>
<path d="M277.8 303.4L275.5 290.8M299.9 282.0L298.1 269.5M298.1 269.5L296.3 256.4M296.3 256.4L294.4 242.7M317.9 236.5L316.5 222.9M316.5 222.9L315.1 208.7M315.1 208.7L313.5 194.0M336.2 190.4L335.1 175.7M335.1 175.7L334.0 160.5M334.0 160.5L332.9 144.6M355.3 158.7L354.6 143.7M354.6 143.7L354.0 128.0M354.0 128.0L353.3 111.6M264.9 308.5L277.8 303.4M277.8 303.4L290.0 298.6M273.1 277.7L286.0 273.5M286.0 273.5L298.1 269.5M298.1 269.5L309.7 265.6M294.4 242.7L306.5 239.5M306.5 239.5L317.9 236.5M303.0 211.1L315.1 208.7M315.1 208.7L326.4 206.5M326.4 206.5L337.2 204.4M323.9 177.1L335.1 175.7M335.1 175.7L345.8 174.4M332.9 144.6L344.1 144.1M344.1 144.1L354.6 143.7M354.6 143.7L364.6 143.3M353.3 111.6L363.7 112.1M363.7 112.1L373.6 112.5" stroke="#ffe2ec" stroke-width="1.5" stroke-opacity="0.37" fill="none"/>
<path d="M148.0 354.2L141.4 339.3M141.4 339.3L134.5 323.6M187.0 338.9L181.9 324.7M181.9 324.7L176.5 309.7M176.5 309.7L170.9 293.9M170.9 293.9L164.9 277.2M164.9 277.2L158.5 259.5M221.1 325.6L217.2 311.9M217.2 311.9L213.0 297.6M213.0 297.6L208.6 282.6M208.6 282.6L204.0 266.8M204.0 266.8L199.2 250.1M199.2 250.1L194.1 232.5M194.1 232.5L188.7 214.0M251.1 313.8L248.1 300.7M248.1 300.7L244.9 287.1M244.9 287.1L241.6 272.7M241.6 272.7L238.1 257.7M238.1 257.7L234.4 241.9M234.4 241.9L230.5 225.4M230.5 225.4L226.5 207.9M226.5 207.9L222.2 189.6M222.2 189.6L217.7 170.2M217.7 170.2L212.9 149.7M275.5 290.8L273.1 277.7M273.1 277.7L270.6 264.1M270.6 264.1L268.0 249.8M268.0 249.8L265.2 234.8M265.2 234.8L262.3 219.1M262.3 219.1L259.3 202.7M259.3 202.7L256.1 185.4M256.1 185.4L252.8 167.2M252.8 167.2L249.3 148.1M249.3 148.1L245.6 128.0M245.6 128.0L241.7 106.7M294.4 242.7L292.4 228.5M292.4 228.5L290.3 213.6M290.3 213.6L288.1 198.1M288.1 198.1L285.8 181.8M285.8 181.8L283.4 164.7M283.4 164.7L280.9 146.8M280.9 146.8L278.2 128.0M278.2 128.0L275.4 108.2M313.5 194.0L311.9 178.6M311.9 178.6L310.3 162.5M310.3 162.5L308.5 145.6M308.5 145.6L306.7 128.0M306.7 128.0L304.8 109.5M332.9 144.6L331.7 128.0M331.7 128.0L330.5 110.6M126.3 362.7L148.0 354.2M148.0 354.2L168.2 346.3M168.2 346.3L187.0 338.9M187.0 338.9L204.6 332.0M204.6 332.0L221.1 325.6M221.1 325.6L236.6 319.5M236.6 319.5L251.1 313.8M251.1 313.8L264.9 308.5M134.5 323.6L156.3 316.4M156.3 316.4L176.5 309.7M176.5 309.7L195.4 303.4M195.4 303.4L213.0 297.6M213.0 297.6L229.5 292.2M229.5 292.2L244.9 287.1M244.9 287.1L259.4 282.3M259.4 282.3L273.1 277.7M164.9 277.2L185.1 271.8M185.1 271.8L204.0 266.8M204.0 266.8L221.6 262.1M221.6 262.1L238.1 257.7M238.1 257.7L253.5 253.6M253.5 253.6L268.0 249.8M268.0 249.8L281.6 246.1M281.6 246.1L294.4 242.7M173.7 236.5L194.1 232.5M194.1 232.5L213.0 228.8M213.0 228.8L230.5 225.4M230.5 225.4L247.0 222.1M247.0 222.1L262.3 219.1M262.3 219.1L276.7 216.3M276.7 216.3L290.3 213.6M290.3 213.6L303.0 211.1M203.3 191.9L222.2 189.6M222.2 189.6L239.8 187.4M239.8 187.4L256.1 185.4M256.1 185.4L271.4 183.5M271.4 183.5L285.8 181.8M285.8 181.8L299.3 180.1M299.3 180.1L311.9 178.6M311.9 178.6L323.9 177.1M212.9 149.7L231.8 148.9M231.8 148.9L249.3 148.1M249.3 148.1L265.6 147.4M265.6 147.4L280.9 146.8M280.9 146.8L295.1 146.2M295.1 146.2L308.5 145.6M308.5 145.6L321.1 145.1M321.1 145.1L332.9 144.6M241.7 106.7L259.2 107.5M259.2 107.5L275.4 108.2M275.4 108.2L290.6 108.9M290.6 108.9L304.8 109.5M304.8 109.5L318.0 110.1M318.0 110.1L330.5 110.6M330.5 110.6L342.2 111.1M342.2 111.1L353.3 111.6" stroke="#ffe2ec" stroke-width="1.5" stroke-opacity="0.46" fill="none"/>
<path d="M102.9 371.9L94.5 356.3M94.5 356.3L85.5 339.8M85.5 339.8L75.9 322.2M75.9 322.2L65.8 303.5M65.8 303.5L54.9 283.6M54.9 283.6L43.3 262.2M43.3 262.2L30.8 239.2M134.5 323.6L127.1 306.9M127.1 306.9L119.3 289.3M119.3 289.3L111.1 270.5M111.1 270.5L102.2 250.6M102.2 250.6L92.8 229.3M92.8 229.3L82.8 206.6M82.8 206.6L72.0 182.3M72.0 182.3L60.5 156.1M158.5 259.5L151.8 240.8M151.8 240.8L144.7 221.0M144.7 221.0L137.1 200.0M137.1 200.0L129.1 177.5M129.1 177.5L120.5 153.6M120.5 153.6L111.3 128.0M111.3 128.0L101.4 100.6M188.7 214.0L183.0 194.3M183.0 194.3L176.9 173.5M176.9 173.5L170.5 151.5M170.5 151.5L163.7 128.0M163.7 128.0L156.4 103.0M212.9 149.7L207.9 128.0M207.9 128.0L202.5 105.0M102.9 371.9L126.3 362.7M85.5 339.8L111.0 331.4M111.0 331.4L134.5 323.6M65.8 303.5L93.7 296.1M93.7 296.1L119.3 289.3M119.3 289.3L143.0 283.0M143.0 283.0L164.9 277.2M43.3 262.2L74.1 256.1M74.1 256.1L102.2 250.6M102.2 250.6L128.0 245.5M128.0 245.5L151.8 240.8M151.8 240.8L173.7 236.5M51.7 210.4L82.8 206.6M82.8 206.6L111.2 203.1M111.2 203.1L137.1 200.0M137.1 200.0L161.0 197.0M161.0 197.0L183.0 194.3M183.0 194.3L203.3 191.9M60.5 156.1L91.9 154.8M91.9 154.8L120.5 153.6M120.5 153.6L146.6 152.5M146.6 152.5L170.5 151.5M170.5 151.5L192.6 150.5M192.6 150.5L212.9 149.7M101.4 100.6L130.2 101.8M130.2 101.8L156.4 103.0M156.4 103.0L180.4 104.0M180.4 104.0L202.5 105.0M202.5 105.0L222.9 105.9M222.9 105.9L241.7 106.7" stroke="#ffe2ec" stroke-width="2.0" stroke-opacity="0.46" fill="none"/>
<path d="M30.8 239.2L17.4 214.6M17.4 214.6L3.0 188.0M60.5 156.1L48.1 128.0M48.1 128.0L34.7 97.6M17.4 214.6L51.7 210.4M-12.7 159.2L25.8 157.6M25.8 157.6L60.5 156.1M-4.4 95.9L34.7 97.6M34.7 97.6L69.7 99.2M69.7 99.2L101.4 100.6" stroke="#ffe2ec" stroke-width="2.5" stroke-opacity="0.46" fill="none"/>
<g fill="#fff6f4" stroke="#fff6f4" stroke-opacity=".25" stroke-width=".9"><polygon points="48.8,263.3 55.7,261.9 56.5,263.4 49.7,264.8" fill-opacity="0.60"/><polygon points="50.1,265.7 63.1,263.0 64.1,264.9 51.2,267.6" fill-opacity="0.59"/><polygon points="70.8,304.2 77.0,302.5 77.7,303.8 71.5,305.5" fill-opacity="0.57"/><polygon points="71.9,306.3 83.6,303.1 84.5,304.8 72.8,308.0" fill-opacity="0.57"/><polygon points="90.0,340.1 95.7,338.2 96.3,339.4 90.6,341.3" fill-opacity="0.55"/><polygon points="91.0,342.0 101.7,338.3 102.5,339.8 91.8,343.5" fill-opacity="0.55"/><polygon points="42.5,104.1 57.3,104.6 58.4,107.3 43.7,106.8" fill-opacity="0.64"/><polygon points="66.1,158.3 73.2,158.0 74.0,159.9 66.9,160.2" fill-opacity="0.61"/><polygon points="67.4,161.3 80.6,160.6 81.6,162.9 68.4,163.6" fill-opacity="0.61"/><polygon points="87.8,208.2 94.2,207.4 94.9,209.0 88.5,209.8" fill-opacity="0.59"/><polygon points="88.9,210.7 100.9,209.2 101.7,211.2 89.8,212.8" fill-opacity="0.59"/><polygon points="106.8,251.7 112.6,250.5 113.2,252.0 107.4,253.1" fill-opacity="0.57"/><polygon points="107.8,253.9 118.6,251.7 119.4,253.5 108.5,255.7" fill-opacity="0.56"/><polygon points="123.5,290.0 128.8,288.6 129.3,289.8 124.0,291.3" fill-opacity="0.55"/><polygon points="124.3,292.0 134.3,289.3 135.0,290.9 125.0,293.6" fill-opacity="0.55"/><polygon points="138.3,324.0 143.1,322.4 143.6,323.5 138.8,325.1" fill-opacity="0.53"/><polygon points="139.0,325.8 148.2,322.7 148.8,324.1 139.7,327.2" fill-opacity="0.53"/><polygon points="106.5,103.3 112.9,103.5 113.6,105.5 107.2,105.2" fill-opacity="0.60"/><polygon points="107.6,106.4 119.7,106.8 120.5,109.2 108.5,108.8" fill-opacity="0.60"/><polygon points="125.0,155.6 130.9,155.4 131.5,157.1 125.6,157.3" fill-opacity="0.58"/><polygon points="126.0,158.3 137.0,157.8 137.7,159.9 126.8,160.5" fill-opacity="0.58"/><polygon points="141.3,201.5 146.6,200.8 147.1,202.3 141.8,203.0" fill-opacity="0.56"/><polygon points="142.1,203.8 152.2,202.5 152.8,204.4 142.8,205.7" fill-opacity="0.56"/><polygon points="155.6,241.9 160.5,241.0 160.9,242.3 156.1,243.3" fill-opacity="0.54"/><polygon points="156.3,244.0 165.6,242.1 166.1,243.8 156.9,245.7" fill-opacity="0.54"/><polygon points="168.3,277.9 172.9,276.7 173.3,277.9 168.8,279.1" fill-opacity="0.53"/><polygon points="169.0,279.8 177.5,277.5 178.1,279.0 169.5,281.3" fill-opacity="0.52"/><polygon points="179.7,310.2 183.9,308.8 184.3,309.8 180.1,311.2" fill-opacity="0.51"/><polygon points="180.3,311.8 188.3,309.2 188.7,310.5 180.8,313.2" fill-opacity="0.51"/><polygon points="160.6,105.4 165.9,105.6 166.4,107.4 161.1,107.2" fill-opacity="0.57"/><polygon points="161.4,108.2 171.5,108.6 172.1,110.8 162.0,110.5" fill-opacity="0.57"/><polygon points="174.3,153.4 179.2,153.1 179.6,154.7 174.7,154.9" fill-opacity="0.55"/><polygon points="175.0,155.8 184.3,155.4 184.8,157.3 175.6,157.8" fill-opacity="0.55"/><polygon points="186.4,195.8 191.0,195.2 191.4,196.6 186.8,197.2" fill-opacity="0.54"/><polygon points="187.1,198.0 195.6,196.9 196.1,198.6 187.6,199.8" fill-opacity="0.53"/><polygon points="197.3,233.6 201.5,232.8 201.8,234.0 197.6,234.9" fill-opacity="0.52"/><polygon points="197.8,235.6 205.8,234.0 206.2,235.5 198.3,237.2" fill-opacity="0.52"/><polygon points="207.0,267.5 210.9,266.5 211.2,267.6 207.3,268.7" fill-opacity="0.51"/><polygon points="207.5,269.3 214.9,267.3 215.3,268.7 207.9,270.7" fill-opacity="0.51"/><polygon points="215.7,298.2 219.4,296.9 219.7,297.9 216.0,299.2" fill-opacity="0.49"/><polygon points="216.2,299.8 223.1,297.4 223.5,298.7 216.6,301.1" fill-opacity="0.49"/><polygon points="205.9,107.2 210.5,107.4 210.9,109.0 206.3,108.9" fill-opacity="0.55"/><polygon points="206.5,109.8 215.1,110.1 215.6,112.2 207.0,111.9" fill-opacity="0.55"/><polygon points="216.1,151.4 220.3,151.2 220.6,152.7 216.4,152.9" fill-opacity="0.53"/><polygon points="216.6,153.7 224.5,153.3 224.9,155.2 217.0,155.6" fill-opacity="0.53"/><polygon points="225.1,190.9 229.0,190.4 229.3,191.7 225.4,192.2" fill-opacity="0.52"/><polygon points="225.6,193.0 233.0,192.0 233.4,193.7 226.0,194.6" fill-opacity="0.51"/><polygon points="233.3,226.4 236.9,225.7 237.2,226.9 233.5,227.6" fill-opacity="0.50"/><polygon points="233.7,228.3 240.6,226.9 240.9,228.3 234.0,229.8" fill-opacity="0.50"/><polygon points="240.6,258.5 244.0,257.6 244.3,258.6 240.9,259.6" fill-opacity="0.49"/><polygon points="241.0,260.2 247.5,258.4 247.8,259.8 241.3,261.5" fill-opacity="0.49"/><polygon points="247.3,287.6 250.5,286.6 250.7,287.5 247.5,288.6" fill-opacity="0.48"/><polygon points="247.6,289.2 253.7,287.1 254.0,288.3 247.9,290.4" fill-opacity="0.48"/><polygon points="244.6,108.8 248.5,108.9 248.7,110.4 244.8,110.3" fill-opacity="0.53"/><polygon points="245.0,111.2 252.4,111.4 252.7,113.3 245.3,113.1" fill-opacity="0.52"/><polygon points="252.0,149.8 255.6,149.6 255.8,151.0 252.2,151.1" fill-opacity="0.51"/><polygon points="252.4,151.9 259.2,151.6 259.5,153.3 252.7,153.7" fill-opacity="0.51"/><polygon points="258.6,186.7 262.0,186.3 262.3,187.5 258.9,187.9" fill-opacity="0.50"/><polygon points="259.0,188.6 265.4,187.8 265.7,189.3 259.3,190.2" fill-opacity="0.50"/><polygon points="264.7,220.1 267.9,219.5 268.1,220.6 264.9,221.3" fill-opacity="0.49"/><polygon points="265.0,221.9 271.0,220.7 271.3,222.1 265.2,223.3" fill-opacity="0.49"/><polygon points="270.1,250.6 273.2,249.7 273.4,250.7 270.3,251.6" fill-opacity="0.48"/><polygon points="270.4,252.1 276.2,250.6 276.4,251.9 270.7,253.4" fill-opacity="0.47"/><polygon points="275.2,278.3 278.0,277.4 278.2,278.3 275.3,279.3" fill-opacity="0.47"/><polygon points="275.4,279.8 280.8,278.0 281.0,279.1 275.6,281.0" fill-opacity="0.47"/><polygon points="277.9,110.1 281.2,110.3 281.4,111.6 278.1,111.5" fill-opacity="0.51"/><polygon points="278.2,112.3 284.6,112.5 284.8,114.3 278.4,114.1" fill-opacity="0.51"/><polygon points="283.1,148.4 286.3,148.2 286.5,149.5 283.3,149.6" fill-opacity="0.49"/><polygon points="283.4,150.3 289.4,150.0 289.6,151.6 283.6,152.0" fill-opacity="0.49"/><polygon points="287.9,183.0 290.9,182.7 291.1,183.8 288.1,184.2" fill-opacity="0.48"/><polygon points="288.2,184.8 293.9,184.1 294.1,185.6 288.4,186.3" fill-opacity="0.48"/><polygon points="292.3,214.6 295.1,214.1 295.3,215.1 292.4,215.7" fill-opacity="0.47"/><polygon points="292.5,216.3 297.9,215.2 298.1,216.5 292.7,217.6" fill-opacity="0.47"/><polygon points="296.3,243.5 299.0,242.8 299.1,243.8 296.4,244.5" fill-opacity="0.46"/><polygon points="296.5,245.0 301.6,243.6 301.8,244.9 296.7,246.3" fill-opacity="0.46"/><polygon points="300.0,270.1 302.5,269.2 302.6,270.1 300.1,270.9" fill-opacity="0.45"/><polygon points="300.2,271.5 305.0,269.8 305.2,270.9 300.3,272.6" fill-opacity="0.45"/><polygon points="306.8,111.3 309.8,111.4 309.9,112.7 307.0,112.6" fill-opacity="0.49"/><polygon points="307.1,113.3 312.6,113.5 312.8,115.2 307.2,115.0" fill-opacity="0.49"/><polygon points="310.5,147.1 313.3,147.0 313.4,148.2 310.6,148.3" fill-opacity="0.48"/><polygon points="310.7,149.0 316.0,148.7 316.1,150.2 310.8,150.5" fill-opacity="0.48"/><polygon points="313.8,179.8 316.4,179.4 316.5,180.5 313.9,180.9" fill-opacity="0.47"/><polygon points="314.0,181.5 319.0,180.8 319.1,182.2 314.1,182.9" fill-opacity="0.47"/><polygon points="316.8,209.7 319.3,209.2 319.4,210.2 316.9,210.7" fill-opacity="0.46"/><polygon points="317.0,211.3 321.8,210.3 321.9,211.6 317.1,212.6" fill-opacity="0.46"/><polygon points="319.6,237.2 322.0,236.6 322.1,237.5 319.7,238.2" fill-opacity="0.45"/><polygon points="319.7,238.7 324.3,237.5 324.4,238.6 319.9,239.9" fill-opacity="0.45"/><polygon points="322.2,262.6 324.5,261.9 324.6,262.7 322.3,263.5" fill-opacity="0.44"/><polygon points="322.3,264.0 326.7,262.5 326.8,263.6 322.4,265.1" fill-opacity="0.44"/><polygon points="332.3,112.3 334.9,112.4 335.0,113.6 332.4,113.5" fill-opacity="0.48"/><polygon points="332.4,114.2 337.4,114.4 337.5,115.9 332.5,115.8" fill-opacity="0.47"/><polygon points="334.6,146.0 337.1,145.9 337.2,147.0 334.7,147.1" fill-opacity="0.47"/><polygon points="334.7,147.8 339.4,147.5 339.5,148.9 334.8,149.2" fill-opacity="0.46"/><polygon points="336.7,176.9 339.1,176.6 339.2,177.6 336.8,177.9" fill-opacity="0.46"/><polygon points="336.9,178.5 341.3,177.9 341.4,179.2 336.9,179.8" fill-opacity="0.46"/><polygon points="338.7,205.3 341.0,204.9 341.0,205.8 338.8,206.3" fill-opacity="0.45"/><polygon points="338.8,206.8 343.1,206.0 343.2,207.2 338.9,208.1" fill-opacity="0.45"/><polygon points="340.5,231.6 342.7,231.0 342.7,231.9 340.6,232.5" fill-opacity="0.44"/><polygon points="340.6,233.0 344.7,231.9 344.8,233.0 340.7,234.1" fill-opacity="0.44"/><polygon points="342.2,256.0 344.3,255.3 344.3,256.1 342.2,256.8" fill-opacity="0.43"/><polygon points="342.3,257.3 346.2,255.9 346.3,257.0 342.3,258.3" fill-opacity="0.43"/><polygon points="354.8,113.2 357.2,113.3 357.2,114.4 354.9,114.3" fill-opacity="0.46"/><polygon points="354.9,115.0 359.3,115.2 359.4,116.6 355.0,116.5" fill-opacity="0.46"/><polygon points="356.1,145.0 358.3,144.9 358.4,146.0 356.2,146.1" fill-opacity="0.45"/><polygon points="356.2,146.7 360.4,146.5 360.4,147.8 356.2,148.0" fill-opacity="0.45"/><polygon points="357.3,174.3 359.4,174.0 359.4,175.0 357.3,175.3" fill-opacity="0.45"/><polygon points="357.3,175.9 361.4,175.3 361.4,176.6 357.4,177.1" fill-opacity="0.45"/><polygon points="358.4,201.4 360.4,201.0 360.4,201.9 358.4,202.3" fill-opacity="0.44"/><polygon points="358.4,202.8 362.3,202.1 362.3,203.2 358.5,204.0" fill-opacity="0.44"/><polygon points="359.4,226.6 361.3,226.0 361.4,226.9 359.4,227.4" fill-opacity="0.43"/><polygon points="359.4,227.9 363.1,226.9 363.2,227.9 359.5,229.0" fill-opacity="0.43"/><polygon points="360.3,249.9 362.2,249.3 362.2,250.1 360.3,250.7" fill-opacity="0.43"/><polygon points="360.4,251.2 363.9,250.0 364.0,251.0 360.4,252.2" fill-opacity="0.42"/><polygon points="374.9,114.0 377.0,114.1 377.0,115.2 375.0,115.1" fill-opacity="0.45"/><polygon points="375.0,115.7 378.9,115.8 378.9,117.2 375.0,117.1" fill-opacity="0.45"/><polygon points="375.4,144.1 377.4,144.0 377.4,145.0 375.4,145.1" fill-opacity="0.44"/><polygon points="375.4,145.7 379.2,145.5 379.2,146.8 375.4,147.0" fill-opacity="0.44"/><polygon points="375.8,172.0 377.7,171.7 377.7,172.7 375.8,172.9" fill-opacity="0.44"/><polygon points="375.8,173.5 379.4,173.0 379.4,174.2 375.8,174.7" fill-opacity="0.44"/><polygon points="376.1,197.9 378.0,197.5 378.0,198.4 376.1,198.7" fill-opacity="0.43"/><polygon points="376.2,199.2 379.7,198.5 379.7,199.6 376.2,200.4" fill-opacity="0.43"/><polygon points="376.5,222.0 378.3,221.5 378.3,222.3 376.5,222.8" fill-opacity="0.42"/><polygon points="376.5,223.2 379.9,222.3 379.9,223.3 376.5,224.3" fill-opacity="0.42"/><polygon points="376.8,244.4 378.5,243.8 378.5,244.6 376.8,245.2" fill-opacity="0.42"/><polygon points="376.8,245.6 380.1,244.5 380.1,245.5 376.8,246.6" fill-opacity="0.42"/><polygon points="393.0,114.7 394.8,114.8 394.8,115.8 393.0,115.7" fill-opacity="0.44"/><polygon points="393.0,116.3 396.5,116.5 396.5,117.8 392.9,117.7" fill-opacity="0.44"/><polygon points="392.7,143.3 394.5,143.2 394.5,144.2 392.7,144.3" fill-opacity="0.43"/><polygon points="392.7,144.8 396.1,144.7 396.1,145.9 392.7,146.1" fill-opacity="0.43"/><polygon points="392.5,169.9 394.2,169.7 394.2,170.6 392.5,170.8" fill-opacity="0.43"/><polygon points="392.5,171.3 395.8,170.9 395.8,172.0 392.5,172.4" fill-opacity="0.43"/><polygon points="392.3,194.6 393.9,194.3 393.9,195.1 392.3,195.5" fill-opacity="0.42"/><polygon points="392.2,196.0 395.4,195.3 395.4,196.4 392.2,197.0" fill-opacity="0.42"/><polygon points="392.1,217.8 393.7,217.3 393.7,218.1 392.0,218.5" fill-opacity="0.42"/><polygon points="392.0,219.0 395.1,218.1 395.1,219.1 392.0,220.0" fill-opacity="0.42"/><polygon points="391.9,239.4 393.4,238.9 393.4,239.6 391.9,240.1" fill-opacity="0.41"/><polygon points="391.8,240.5 394.8,239.5 394.8,240.5 391.8,241.5" fill-opacity="0.41"/><polygon points="409.2,115.4 410.9,115.4 410.9,116.4 409.2,116.3" fill-opacity="0.43"/><polygon points="409.2,116.9 412.4,117.0 412.4,118.3 409.2,118.2" fill-opacity="0.43"/><polygon points="408.4,142.6 410.1,142.5 410.0,143.4 408.4,143.5" fill-opacity="0.43"/><polygon points="408.4,144.0 411.5,143.9 411.5,145.0 408.4,145.2" fill-opacity="0.42"/><polygon points="407.7,168.0 409.3,167.8 409.2,168.6 407.6,168.8" fill-opacity="0.42"/><polygon points="407.6,169.3 410.6,168.9 410.6,170.0 407.6,170.4" fill-opacity="0.42"/><polygon points="407.0,191.7 408.5,191.4 408.5,192.2 406.9,192.5" fill-opacity="0.41"/><polygon points="406.9,193.0 409.8,192.4 409.8,193.4 406.9,194.0" fill-opacity="0.41"/><polygon points="406.3,213.9 407.8,213.5 407.8,214.3 406.3,214.7" fill-opacity="0.41"/><polygon points="406.3,215.1 409.1,214.3 409.1,215.3 406.2,216.1" fill-opacity="0.41"/><polygon points="405.7,234.8 407.1,234.3 407.1,235.0 405.7,235.5" fill-opacity="0.40"/><polygon points="405.6,235.9 408.4,235.0 408.4,235.9 405.6,236.8" fill-opacity="0.40"/><polygon points="424.0,115.9 425.5,116.0 425.5,116.9 424.0,116.9" fill-opacity="0.42"/><polygon points="423.9,117.4 426.8,117.5 426.8,118.7 423.9,118.6" fill-opacity="0.42"/><polygon points="422.7,141.9 424.2,141.9 424.2,142.7 422.7,142.8" fill-opacity="0.42"/><polygon points="422.7,143.3 425.5,143.2 425.4,144.3 422.6,144.4" fill-opacity="0.42"/><polygon points="421.5,166.2 423.0,166.1 422.9,166.9 421.5,167.1" fill-opacity="0.41"/><polygon points="421.5,167.5 424.2,167.2 424.2,168.2 421.4,168.6" fill-opacity="0.41"/><polygon points="420.4,189.0 421.8,188.7 421.8,189.5 420.4,189.8" fill-opacity="0.41"/><polygon points="420.4,190.2 423.0,189.7 423.0,190.7 420.3,191.2" fill-opacity="0.41"/><polygon points="419.4,210.4 420.8,210.0 420.7,210.8 419.3,211.1" fill-opacity="0.40"/><polygon points="419.3,211.5 421.9,210.8 421.9,211.8 419.3,212.5" fill-opacity="0.40"/><polygon points="418.4,230.5 419.7,230.1 419.7,230.8 418.4,231.2" fill-opacity="0.40"/><polygon points="418.3,231.6 420.9,230.8 420.8,231.6 418.3,232.5" fill-opacity="0.40"/><polygon points="437.4,116.5 438.8,116.5 438.8,117.4 437.4,117.4" fill-opacity="0.42"/><polygon points="437.3,117.9 440.0,118.0 439.9,119.1 437.3,119.0" fill-opacity="0.41"/><polygon points="435.8,141.3 437.2,141.3 437.1,142.1 435.7,142.2" fill-opacity="0.41"/><polygon points="435.7,142.7 438.3,142.5 438.2,143.6 435.6,143.7" fill-opacity="0.41"/><polygon points="434.2,164.6 435.6,164.5 435.5,165.3 434.2,165.4" fill-opacity="0.41"/><polygon points="434.2,165.9 436.7,165.5 436.6,166.6 434.1,166.9" fill-opacity="0.40"/><polygon points="432.8,186.5 434.1,186.3 434.0,187.0 432.7,187.3" fill-opacity="0.40"/><polygon points="432.7,187.7 435.2,187.2 435.1,188.2 432.7,188.7" fill-opacity="0.40"/><polygon points="431.4,207.2 432.7,206.8 432.6,207.5 431.4,207.9" fill-opacity="0.40"/><polygon points="431.4,208.3 433.8,207.6 433.7,208.5 431.3,209.2" fill-opacity="0.40"/><polygon points="430.1,226.6 431.4,226.2 431.3,226.9 430.1,227.3" fill-opacity="0.39"/><polygon points="430.1,227.7 432.4,226.9 432.4,227.7 430.0,228.5" fill-opacity="0.39"/><polygon points="449.7,117.0 451.0,117.0 450.9,117.9 449.7,117.8" fill-opacity="0.41"/><polygon points="449.6,118.3 452.1,118.4 452.0,119.5 449.5,119.4" fill-opacity="0.41"/><polygon points="447.8,140.8 449.0,140.7 449.0,141.5 447.7,141.6" fill-opacity="0.40"/><polygon points="447.7,142.0 450.1,141.9 450.0,143.0 447.6,143.1" fill-opacity="0.40"/><polygon points="445.9,163.2 447.2,163.0 447.1,163.8 445.9,163.9" fill-opacity="0.40"/><polygon points="445.8,164.4 448.2,164.1 448.1,165.0 445.8,165.3" fill-opacity="0.40"/><polygon points="444.2,184.3 445.4,184.0 445.3,184.7 444.1,185.0" fill-opacity="0.39"/><polygon points="444.1,185.4 446.4,184.9 446.3,185.8 444.0,186.3" fill-opacity="0.39"/><polygon points="442.6,204.2 443.7,203.9 443.7,204.5 442.5,204.8" fill-opacity="0.39"/><polygon points="442.5,205.2 444.7,204.6 444.6,205.5 442.4,206.1" fill-opacity="0.39"/><polygon points="441.0,223.0 442.2,222.6 442.1,223.2 441.0,223.6" fill-opacity="0.39"/><polygon points="440.9,224.0 443.1,223.3 443.1,224.1 440.9,224.8" fill-opacity="0.39"/><polygon points="461.0,117.4 462.2,117.5 462.1,118.3 460.9,118.2" fill-opacity="0.40"/><polygon points="460.9,118.7 463.1,118.8 463.0,119.8 460.8,119.8" fill-opacity="0.40"/><polygon points="458.8,140.3 460.0,140.2 459.9,141.0 458.7,141.0" fill-opacity="0.40"/><polygon points="458.7,141.5 460.9,141.4 460.8,142.4 458.6,142.5" fill-opacity="0.40"/><polygon points="456.7,161.8 457.9,161.7 457.8,162.4 456.7,162.5" fill-opacity="0.39"/><polygon points="456.6,163.0 458.8,162.7 458.7,163.6 456.5,163.9" fill-opacity="0.39"/><polygon points="454.8,182.2 455.9,181.9 455.8,182.6 454.7,182.8" fill-opacity="0.39"/><polygon points="454.7,183.2 456.8,182.8 456.7,183.7 454.6,184.1" fill-opacity="0.39"/><polygon points="452.9,201.4 454.0,201.1 453.9,201.8 452.8,202.0" fill-opacity="0.39"/><polygon points="452.8,202.4 454.9,201.9 454.8,202.7 452.7,203.3" fill-opacity="0.39"/><polygon points="451.1,219.6 452.2,219.3 452.1,219.9 451.1,220.2" fill-opacity="0.38"/><polygon points="451.0,220.6 453.1,219.9 453.0,220.7 451.0,221.4" fill-opacity="0.38"/><polygon points="471.4,117.8 472.5,117.9 472.4,118.7 471.3,118.6" fill-opacity="0.40"/><polygon points="471.3,119.1 473.4,119.2 473.2,120.2 471.2,120.1" fill-opacity="0.40"/><polygon points="469.0,139.8 470.1,139.8 470.0,140.5 468.9,140.5" fill-opacity="0.39"/><polygon points="468.9,141.0 470.9,140.9 470.8,141.8 468.8,141.9" fill-opacity="0.39"/><polygon points="466.7,160.6 467.8,160.4 467.7,161.1 466.6,161.3" fill-opacity="0.39"/><polygon points="466.6,161.7 468.6,161.4 468.5,162.3 466.5,162.6" fill-opacity="0.39"/><polygon points="464.5,180.2 465.6,180.0 465.5,180.7 464.5,180.9" fill-opacity="0.38"/><polygon points="464.4,181.2 466.4,180.8 466.3,181.7 464.3,182.1" fill-opacity="0.38"/><polygon points="462.5,198.8 463.5,198.5 463.4,199.2 462.4,199.4" fill-opacity="0.38"/><polygon points="462.4,199.8 464.3,199.3 464.2,200.1 462.3,200.6" fill-opacity="0.38"/><polygon points="460.5,216.5 461.5,216.1 461.5,216.7 460.5,217.1" fill-opacity="0.38"/><polygon points="460.4,217.4 462.3,216.8 462.3,217.6 460.4,218.2" fill-opacity="0.38"/><polygon points="481.0,118.2 482.0,118.3 482.0,119.0 480.9,119.0" fill-opacity="0.39"/><polygon points="480.9,119.4 482.8,119.5 482.7,120.4 480.8,120.4" fill-opacity="0.39"/><polygon points="478.4,139.4 479.4,139.3 479.3,140.0 478.4,140.1" fill-opacity="0.39"/><polygon points="478.3,140.5 480.2,140.4 480.1,141.3 478.2,141.4" fill-opacity="0.39"/><polygon points="476.0,159.4 477.0,159.3 476.9,159.9 475.9,160.1" fill-opacity="0.38"/><polygon points="475.9,160.5 477.7,160.2 477.6,161.1 475.7,161.3" fill-opacity="0.38"/><polygon points="473.7,178.4 474.6,178.2 474.5,178.8 473.6,179.0" fill-opacity="0.38"/><polygon points="473.5,179.4 475.4,179.0 475.3,179.8 473.4,180.2" fill-opacity="0.38"/><polygon points="471.4,196.4 472.4,196.2 472.3,196.8 471.4,197.0" fill-opacity="0.38"/><polygon points="471.3,197.4 473.1,196.9 473.0,197.7 471.2,198.2" fill-opacity="0.38"/><polygon points="469.3,213.5 470.3,213.2 470.2,213.8 469.3,214.1" fill-opacity="0.37"/><polygon points="469.2,214.5 471.0,213.9 470.9,214.6 469.1,215.2" fill-opacity="0.37"/><polygon points="489.9,118.6 490.9,118.6 490.8,119.3 489.9,119.3" fill-opacity="0.39"/><polygon points="489.8,119.7 491.6,119.8 491.5,120.7 489.7,120.7" fill-opacity="0.39"/><polygon points="487.2,139.0 488.1,138.9 488.0,139.6 487.1,139.7" fill-opacity="0.38"/><polygon points="487.1,140.1 488.8,140.0 488.7,140.8 486.9,140.9" fill-opacity="0.38"/><polygon points="484.6,158.3 485.5,158.2 485.4,158.8 484.5,159.0" fill-opacity="0.38"/><polygon points="484.5,159.3 486.2,159.1 486.1,160.0 484.4,160.2" fill-opacity="0.38"/><polygon points="482.1,176.7 483.0,176.5 483.0,177.1 482.1,177.3" fill-opacity="0.38"/><polygon points="482.0,177.7 483.7,177.3 483.6,178.1 481.9,178.5" fill-opacity="0.37"/><polygon points="479.8,194.2 480.7,193.9 480.6,194.5 479.7,194.8" fill-opacity="0.37"/><polygon points="479.7,195.1 481.4,194.6 481.3,195.4 479.6,195.9" fill-opacity="0.37"/><polygon points="477.6,210.8 478.4,210.5 478.4,211.1 477.5,211.4" fill-opacity="0.37"/><polygon points="477.4,211.7 479.1,211.1 479.0,211.9 477.3,212.4" fill-opacity="0.37"/><polygon points="498.2,118.9 499.1,118.9 499.0,119.6 498.1,119.6" fill-opacity="0.38"/><polygon points="498.1,120.0 499.7,120.1 499.6,121.0 497.9,120.9" fill-opacity="0.38"/><polygon points="495.4,138.6 496.2,138.5 496.2,139.2 495.3,139.3" fill-opacity="0.38"/><polygon points="495.2,139.6 496.9,139.6 496.7,140.4 495.1,140.5" fill-opacity="0.38"/><polygon points="492.7,157.3 493.5,157.2 493.4,157.8 492.6,157.9" fill-opacity="0.37"/><polygon points="492.5,158.3 494.1,158.1 494.0,158.9 492.4,159.1" fill-opacity="0.37"/><polygon points="490.1,175.1 490.9,174.9 490.8,175.5 490.0,175.7" fill-opacity="0.37"/><polygon points="490.0,176.0 491.6,175.7 491.4,176.5 489.8,176.8" fill-opacity="0.37"/><polygon points="487.6,192.1 488.5,191.8 488.4,192.4 487.5,192.6" fill-opacity="0.37"/><polygon points="487.5,193.0 489.1,192.5 489.0,193.3 487.4,193.7" fill-opacity="0.37"/><polygon points="485.3,208.2 486.1,208.0 486.0,208.5 485.2,208.8" fill-opacity="0.37"/><polygon points="485.2,209.1 486.7,208.6 486.6,209.3 485.1,209.8" fill-opacity="0.37"/><polygon points="506.0,119.2 506.8,119.2 506.7,119.9 505.9,119.9" fill-opacity="0.38"/><polygon points="505.8,120.3 507.4,120.3 507.2,121.2 505.7,121.2" fill-opacity="0.38"/><polygon points="503.0,138.2 503.8,138.2 503.7,138.8 502.9,138.9" fill-opacity="0.37"/><polygon points="502.9,139.3 504.4,139.2 504.3,140.0 502.7,140.1" fill-opacity="0.37"/><polygon points="500.2,156.3 501.0,156.2 500.9,156.9 500.1,157.0" fill-opacity="0.37"/><polygon points="500.1,157.3 501.6,157.1 501.5,157.9 499.9,158.1" fill-opacity="0.37"/><polygon points="497.5,173.6 498.3,173.4 498.2,174.0 497.4,174.2" fill-opacity="0.37"/><polygon points="497.4,174.5 498.9,174.2 498.8,175.0 497.3,175.3" fill-opacity="0.37"/><polygon points="495.0,190.1 495.8,189.9 495.7,190.4 494.9,190.6" fill-opacity="0.36"/><polygon points="494.8,191.0 496.3,190.6 496.2,191.3 494.7,191.7" fill-opacity="0.36"/><polygon points="492.5,205.8 493.3,205.6 493.2,206.1 492.5,206.3" fill-opacity="0.36"/><polygon points="492.4,206.7 493.9,206.2 493.8,206.8 492.3,207.3" fill-opacity="0.36"/><polygon points="513.2,119.5 513.9,119.5 513.8,120.2 513.1,120.2" fill-opacity="0.37"/><polygon points="513.0,120.5 514.5,120.6 514.3,121.4 512.9,121.4" fill-opacity="0.37"/><polygon points="510.2,137.9 510.9,137.9 510.8,138.5 510.1,138.5" fill-opacity="0.37"/><polygon points="510.0,138.9 511.4,138.8 511.3,139.6 509.9,139.7" fill-opacity="0.37"/><polygon points="507.3,155.5 508.0,155.4 507.9,156.0 507.2,156.1" fill-opacity="0.37"/><polygon points="507.1,156.4 508.5,156.2 508.4,157.0 507.0,157.2" fill-opacity="0.37"/><polygon points="504.5,172.2 505.3,172.1 505.2,172.6 504.4,172.8" fill-opacity="0.36"/><polygon points="504.4,173.1 505.8,172.8 505.7,173.6 504.2,173.8" fill-opacity="0.36"/><polygon points="501.9,188.2 502.6,188.0 502.5,188.6 501.8,188.8" fill-opacity="0.36"/><polygon points="501.7,189.1 503.1,188.7 503.0,189.4 501.6,189.8" fill-opacity="0.36"/><polygon points="499.4,203.5 500.1,203.3 500.0,203.8 499.3,204.1" fill-opacity="0.36"/><polygon points="499.2,204.4 500.6,203.9 500.5,204.6 499.1,205.0" fill-opacity="0.36"/><polygon points="519.9,119.8 520.7,119.8 520.5,120.4 519.8,120.4" fill-opacity="0.37"/><polygon points="519.8,120.8 521.1,120.8 521.0,121.6 519.6,121.6" fill-opacity="0.37"/><polygon points="516.9,137.6 517.6,137.6 517.5,138.2 516.7,138.2" fill-opacity="0.37"/><polygon points="516.7,138.6 518.0,138.5 517.9,139.3 516.5,139.3" fill-opacity="0.37"/><polygon points="513.9,154.6 514.6,154.5 514.5,155.1 513.8,155.2" fill-opacity="0.36"/><polygon points="513.7,155.5 515.1,155.4 515.0,156.1 513.6,156.3" fill-opacity="0.36"/><polygon points="511.1,170.9 511.8,170.8 511.7,171.3 511.0,171.5" fill-opacity="0.36"/><polygon points="510.9,171.8 512.3,171.5 512.1,172.2 510.8,172.5" fill-opacity="0.36"/><polygon points="508.4,186.5 509.1,186.3 509.0,186.8 508.3,187.0" fill-opacity="0.36"/><polygon points="508.2,187.3 509.6,186.9 509.4,187.6 508.1,188.0" fill-opacity="0.36"/><polygon points="505.8,201.4 506.5,201.2 506.4,201.7 505.7,201.9" fill-opacity="0.36"/><polygon points="505.7,202.2 507.0,201.7 506.9,202.4 505.5,202.8" fill-opacity="0.36"/></g>
<path d="M412.1 1310.5L712.6 177.9" stroke="#ffe2ec" stroke-width="1.1" stroke-opacity="0.55" fill="none"/>
<path d="M394.8 1033.6L687.5 232.6" stroke="#ffe6d0" stroke-width="1" stroke-opacity="0.7" stroke-dasharray="1 1.6" fill="none"/>
<path d="M396.3 1056.9L692.6 221.6" stroke="#ffe6d0" stroke-width="1" stroke-opacity="0.7" stroke-dasharray="1 1.6" fill="none"/>
<path d="M397.5 1077.2L696.0 214.1" stroke="#ffe6d0" stroke-width="1" stroke-opacity="0.7" stroke-dasharray="1 1.6" fill="none"/>
<path d="M400.4 1123.8L701.8 201.4" stroke="#ffe6d0" stroke-width="1" stroke-opacity="0.7" stroke-dasharray="1 1.6" fill="none"/>
<path d="M393.9 1018.7L683.5 241.5" stroke="#ffe2ec" stroke-width="1.6" stroke-opacity="0.55" fill="none"/>
<path d="M503.1 725.6L1179.1 -239.9" stroke="#ffe2ec" stroke-width="2.4" stroke-opacity="0.55" fill="none"/>
<path d="M545.5 611.7L900.5 -13.8" stroke="#ffe2ec" stroke-width="1.1" stroke-opacity="0.5" fill="none"/>
<path d="M61.5 295.7L400.7 1128.4" stroke="#ffe2ec" stroke-width="1.3" stroke-opacity="0.5" fill="none"/>
<path d="M48.0 270.9L405.3 1201.9" stroke="#ffe2ec" stroke-width="1.3" stroke-opacity="0.5" fill="none"/>
<path d="M35.9 248.6L412.1 1310.5" stroke="#ffe2ec" stroke-width="1.3" stroke-opacity="0.5" fill="none"/>
<path d="M96.2 359.5L394.6 1030.3" stroke="#ffe6d0" stroke-width="1" stroke-opacity="0.7" stroke-dasharray="1 1.6" fill="none"/>
<path d="M83.6 336.4L396.3 1056.9" stroke="#ffe6d0" stroke-width="1" stroke-opacity="0.7" stroke-dasharray="1 1.6" fill="none"/>
<path d="M72.0 314.9L398.3 1089.4" stroke="#ffe6d0" stroke-width="1" stroke-opacity="0.7" stroke-dasharray="1 1.6" fill="none"/>
<path d="M102.9 371.9L393.9 1018.7" stroke="#ffe2ec" stroke-width="1.6" stroke-opacity="0.55" fill="none"/>
<path d="M102.9 371.9L-48.1 94.0" stroke="#ffe2ec" stroke-width="1.5" stroke-opacity="0.5" fill="none"/>
<path d="M105.8 370.7L-42.6 94.2" stroke="#ffe6d0" stroke-width="1" stroke-opacity="0.7" stroke-dasharray="1 1.6" fill="none"/>
<path d="M108.7 369.6L-37.1 94.5" stroke="#ffe6d0" stroke-width="1" stroke-opacity="0.7" stroke-dasharray="1 1.6" fill="none"/>
<path d="M111.5 368.5L-31.8 94.7" stroke="#ffe6d0" stroke-width="1" stroke-opacity="0.7" stroke-dasharray="1 1.6" fill="none"/>
<g stroke="#fff0ea" stroke-opacity=".7" stroke-width="2.200" filter="url(#bl)"><path d="M706 380l10-24M705 392l11-26M704 404l12-28M703 416l13-30M703 428l13-30M705 436l11-24"/></g>
<polygon points="618.7,241.4 629.7,243.4 639.3,217.7 627.8,216.1" fill="#6f7d06" /><polygon points="629.7,243.4 631.5,241.3 641.0,216.0 639.3,217.7" fill="#b4b414" /><polygon points="627.8,216.1 639.3,217.7 641.0,216.0 629.6,214.5" fill="#d6d600" />
<polygon points="496.2,283.7 508.4,287.5 515.2,253.9 502.1,250.7" fill="#6f7d06" /><polygon points="508.4,287.5 513.9,283.4 520.8,250.5 515.2,253.9" fill="#b4b414" /><polygon points="502.1,250.7 515.2,253.9 520.8,250.5 508.0,247.5" fill="#d6d600" />
<g fill="#2a322e"><ellipse cx="376" cy="271.500" rx="3" ry="3.500" fill="#1e2422"/><path d="M371 276l10-1 4 6 3 9-2 1-4-7-1 8-9 1 0-8-3 4-2-1 3-8z"/><path d="M372 291l9-1 1 9-1 8-4 1 0-9-1 9-4 0-1-9z" fill="#1a1e1c"/><path d="M373 278l6 0 1 6-7 1z" fill="#3c4a44"/></g>
<polygon points="267.5,308.7 275.2,313.8 268.0,276.0 259.9,271.7" fill="#6f7d06" /><polygon points="275.2,313.8 288.5,308.3 282.3,271.4 268.0,276.0" fill="#b4b414" /><polygon points="259.9,271.7 268.0,276.0 282.3,271.4 274.1,267.3" fill="#d6d600" />
<polygon points="197.5,353.1 204.1,360.3 191.2,322.7 184.6,316.2" fill="#7a0c86" /><polygon points="204.1,360.3 221.5,352.6 210.3,315.7 191.2,322.7" fill="#ac14b4" /><polygon points="184.6,316.2 191.2,322.7 210.3,315.7 203.3,309.7" fill="#cc22cc" />
<polygon points="110.1,361.7 134.6,352.4 116.9,314.5 89.9,322.8" fill="#0cc814" /><polygon points="86.3,315.5 89.9,322.8 116.9,314.5 112.5,307.8" fill="#22ee1c" />
<path d="M385.500 297v12M379 303.500h13" stroke="#000" stroke-width="3"/><path d="M385.500 298v10M380 303.500h11" stroke="#fff" stroke-width="1"/>
<rect x="55" y="74" width="52" height="16" fill="#000"/>
<text x="56" y="86.500" font-family="Liberation Sans, sans-serif" font-size="13" fill="#f0f0f0" letter-spacing=".15">camera</text>
<defs><filter id="bl"><feGaussianBlur stdDeviation="1"/></filter></defs>
</svg>

<svg style="position:absolute;left:724px;top:74px" width="637" height="440" viewBox="724 74 637 440" shape-rendering="crispEdges"><rect x="724" y="74" width="637" height="440" fill="#000"/><path d="M736.5 74V514M767.5 74V514M829.5 74V514M860.5 74V514M890.5 74V514M952.5 74V514M983.5 74V514M1014.5 74V514M1076.5 74V514M1106.5 74V514M1137.5 74V514M1199.5 74V514M1230.5 74V514M1261.5 74V514M1322.5 74V514M1353.5 74V514M724 105.5H1361M724 135.5H1361M724 197.5H1361M724 228.5H1361M724 259.5H1361M724 320.5H1361M724 351.5H1361M724 382.5H1361M724 444.5H1361M724 475.5H1361M724 506.5H1361" stroke="#6e6e6e"/><path d="M798.5 74V514M921.5 74V514M1168.5 74V514M1292.5 74V514M724 166.5H1361M724 290.5H1361" stroke="#703610"/><path d="M1045.2 74V514M724 413.5H1361" stroke="#1f6f6a"/><path d="M1037.5 230V412" stroke="#46b49e"/><path d="M1045.5 230V412" stroke="#46b49e"/><path d="M1122.5 230V412" stroke="#46b49e"/><path d="M1130.5 230V412" stroke="#46b49e"/><path d="M1040 220.5H1128" stroke="#46b49e"/><path d="M1040 228.5H1128" stroke="#46b49e"/><path d="M1040 413.5H1128" stroke="#46b49e"/><path d="M1040 421.5H1128" stroke="#46b49e"/><path d="M1037.5 222V227" stroke="#46b49e"/><path d="M1130.5 222V227" stroke="#46b49e"/><path d="M1037.5 415V420" stroke="#46b49e"/><path d="M1130.5 415V420" stroke="#46b49e"/><rect x="1036" y="219" width="3" height="3" fill="#fff"/><rect x="1129" y="219" width="3" height="3" fill="#fff"/><rect x="1036" y="227" width="3" height="3" fill="#fff"/><rect x="1129" y="227" width="3" height="3" fill="#fff"/><rect x="1036" y="412" width="3" height="3" fill="#fff"/><rect x="1129" y="412" width="3" height="3" fill="#fff"/><rect x="1036" y="420" width="3" height="3" fill="#fff"/><rect x="1129" y="420" width="3" height="3" fill="#fff"/><rect x="1044" y="227" width="3" height="3" fill="#bfe8e0"/><rect x="1121" y="227" width="3" height="3" fill="#bfe8e0"/><rect x="1044" y="412" width="3" height="3" fill="#bfe8e0"/><rect x="1121" y="412" width="3" height="3" fill="#bfe8e0"/><rect x="1105.5" y="273.5" width="3" height="3" fill="none" stroke="#d4d44a"/><rect x="1074.5" y="365.5" width="3" height="3" fill="none" stroke="#d4d44a"/><rect x="1059.5" y="381.5" width="3" height="3" fill="none" stroke="#d4d44a"/><rect x="1059.5" y="396.5" width="3" height="3" fill="none" stroke="#c83cc8"/><rect x="1046.5" y="408.5" width="3" height="3" fill="none" stroke="#28c828"/><circle cx="1091.5" cy="336.5" r="2" fill="none" stroke="#d4d44a" shape-rendering="auto"/></svg>
<svg style="position:absolute;left:55px;top:538px" width="645" height="434" viewBox="55 538 645 434" shape-rendering="crispEdges"><rect x="55" y="538" width="645" height="434" fill="#000"/><path d="M56.5 538V972M60.5 538V972M65.5 538V972M75.5 538V972M80.5 538V972M84.5 538V972M89.5 538V972M94.5 538V972M99.5 538V972M104.5 538V972M113.5 538V972M118.5 538V972M123.5 538V972M128.5 538V972M132.5 538V972M137.5 538V972M142.5 538V972M152.5 538V972M156.5 538V972M161.5 538V972M166.5 538V972M171.5 538V972M176.5 538V972M180.5 538V972M190.5 538V972M195.5 538V972M200.5 538V972M204.5 538V972M209.5 538V972M214.5 538V972M219.5 538V972M228.5 538V972M233.5 538V972M238.5 538V972M243.5 538V972M248.5 538V972M252.5 538V972M257.5 538V972M267.5 538V972M272.5 538V972M276.5 538V972M281.5 538V972M286.5 538V972M291.5 538V972M296.5 538V972M305.5 538V972M310.5 538V972M315.5 538V972M320.5 538V972M324.5 538V972M329.5 538V972M334.5 538V972M344.5 538V972M348.5 538V972M353.5 538V972M358.5 538V972M363.5 538V972M368.5 538V972M372.5 538V972M382.5 538V972M387.5 538V972M392.5 538V972M396.5 538V972M401.5 538V972M406.5 538V972M411.5 538V972M420.5 538V972M425.5 538V972M430.5 538V972M435.5 538V972M440.5 538V972M444.5 538V972M449.5 538V972M459.5 538V972M464.5 538V972M468.5 538V972M473.5 538V972M478.5 538V972M483.5 538V972M488.5 538V972M497.5 538V972M502.5 538V972M507.5 538V972M512.5 538V972M516.5 538V972M521.5 538V972M526.5 538V972M536.5 538V972M540.5 538V972M545.5 538V972M550.5 538V972M555.5 538V972M560.5 538V972M564.5 538V972M574.5 538V972M579.5 538V972M584.5 538V972M588.5 538V972M593.5 538V972M598.5 538V972M603.5 538V972M612.5 538V972M617.5 538V972M622.5 538V972M627.5 538V972M632.5 538V972M636.5 538V972M641.5 538V972M651.5 538V972M656.5 538V972M660.5 538V972M665.5 538V972M670.5 538V972M675.5 538V972M680.5 538V972M689.5 538V972M694.5 538V972M699.5 538V972M55 541.5H700M55 546.5H700M55 550.5H700M55 560.5H700M55 565.5H700M55 570.5H700M55 574.5H700M55 579.5H700M55 584.5H700M55 589.5H700M55 598.5H700M55 603.5H700M55 608.5H700M55 613.5H700M55 618.5H700M55 622.5H700M55 627.5H700M55 637.5H700M55 642.5H700M55 646.5H700M55 651.5H700M55 656.5H700M55 661.5H700M55 666.5H700M55 675.5H700M55 680.5H700M55 685.5H700M55 690.5H700M55 694.5H700M55 699.5H700M55 704.5H700M55 714.5H700M55 718.5H700M55 723.5H700M55 728.5H700M55 733.5H700M55 738.5H700M55 742.5H700M55 752.5H700M55 757.5H700M55 762.5H700M55 766.5H700M55 771.5H700M55 776.5H700M55 781.5H700M55 790.5H700M55 795.5H700M55 800.5H700M55 805.5H700M55 810.5H700M55 814.5H700M55 819.5H700M55 829.5H700M55 834.5H700M55 838.5H700M55 843.5H700M55 848.5H700M55 853.5H700M55 858.5H700M55 867.5H700M55 872.5H700M55 877.5H700M55 882.5H700M55 886.5H700M55 891.5H700M55 896.5H700M55 906.5H700M55 910.5H700M55 915.5H700M55 920.5H700M55 925.5H700M55 930.5H700M55 934.5H700M55 944.5H700M55 949.5H700M55 954.5H700M55 958.5H700M55 963.5H700M55 968.5H700" stroke="#585858"/><path d="M70.5 538V972M108.5 538V972M147.5 538V972M185.5 538V972M224.5 538V972M300.5 538V972M339.5 538V972M377.5 538V972M416.5 538V972M454.5 538V972M492.5 538V972M531.5 538V972M608.5 538V972M646.5 538V972M684.5 538V972M55 555.5H700M55 594.5H700M55 632.5H700M55 670.5H700M55 709.5H700M55 747.5H700M55 786.5H700M55 862.5H700M55 901.5H700M55 939.5H700" stroke="#7e7e7e"/><path d="M569.5 538V972" stroke="#703610"/><path d="M262.5 538V972M55 824.5H700" stroke="#1f6f6a"/><path d="M243.5 673V822" stroke="#46b49e"/><path d="M262.5 673V822" stroke="#46b49e"/><path d="M246 670.5H701" stroke="#46b49e"/><path d="M265 690.5H701" stroke="#46b49e"/><path d="M265 805.5H701" stroke="#46b49e"/><path d="M246 824.5H701" stroke="#46b49e"/><rect x="242" y="669" width="3" height="3" fill="#fff"/><rect x="261" y="669" width="3" height="3" fill="#fff"/><rect x="261" y="689" width="3" height="3" fill="#fff"/><rect x="242" y="823" width="3" height="3" fill="#fff"/><rect x="261" y="823" width="3" height="3" fill="#fff"/><rect x="261" y="804" width="3" height="3" fill="#bfe8e0"/><rect x="266.5" y="773.5" width="11" height="22" fill="none" stroke="#28c828"/><rect x="296.5" y="774.5" width="9" height="21" fill="none" stroke="#c83cc8"/><rect x="335.5" y="764.5" width="9" height="22" fill="none" stroke="#d4d44a"/><rect x="373.5" y="764.5" width="9" height="22" fill="none" stroke="#d4d44a"/><rect x="450.5" y="764.5" width="9" height="22" fill="none" stroke="#d4d44a"/><rect x="604.5" y="764.5" width="9" height="22" fill="none" stroke="#d4d44a"/></svg>
<svg style="position:absolute;left:724px;top:538px" width="637" height="434" viewBox="724 538 637 434" shape-rendering="crispEdges"><rect x="724" y="538" width="637" height="434" fill="#000"/><path d="M739.5 538V972M765.5 538V972M792.5 538V972M819.5 538V972M845.5 538V972M872.5 538V972M899.5 538V972M952.5 538V972M979.5 538V972M1005.5 538V972M1032.5 538V972M1059.5 538V972M1085.5 538V972M1112.5 538V972M1165.5 538V972M1192.5 538V972M1219.5 538V972M1245.5 538V972M1272.5 538V972M1299.5 538V972M1325.5 538V972M724 563.5H1361M724 590.5H1361M724 643.5H1361M724 670.5H1361M724 697.5H1361M724 723.5H1361M724 750.5H1361M724 777.5H1361M724 803.5H1361M724 857.5H1361M724 883.5H1361M724 910.5H1361M724 937.5H1361M724 963.5H1361" stroke="#6e6e6e"/><path d="M1139.5 538V972M1352.5 538V972M724 617.5H1361" stroke="#703610"/><path d="M925.95 538V972M724 830.5H1361" stroke="#1f6f6a"/><path d="M912.5 726V828" stroke="#46b49e"/><path d="M925.5 726V828" stroke="#46b49e"/><path d="M1059.5 726V828" stroke="#46b49e"/><path d="M1072.5 726V828" stroke="#46b49e"/><path d="M915 723.5H1070" stroke="#46b49e"/><path d="M915 736.5H1070" stroke="#46b49e"/><path d="M928 816.5H1070" stroke="#46b49e"/><path d="M915 830.5H1070" stroke="#46b49e"/><rect x="911" y="722" width="3" height="3" fill="#fff"/><rect x="1071" y="722" width="3" height="3" fill="#fff"/><rect x="911" y="735" width="3" height="3" fill="#fff"/><rect x="1071" y="735" width="3" height="3" fill="#fff"/><rect x="911" y="829" width="3" height="3" fill="#fff"/><rect x="1071" y="829" width="3" height="3" fill="#fff"/><rect x="924" y="722" width="3" height="3" fill="#bfe8e0"/><rect x="1058" y="722" width="3" height="3" fill="#bfe8e0"/><rect x="924" y="815" width="3" height="3" fill="#bfe8e0"/><rect x="1071" y="815" width="3" height="3" fill="#bfe8e0"/><rect x="924" y="829" width="3" height="3" fill="#bfe8e0"/><rect x="1058" y="829" width="3" height="3" fill="#bfe8e0"/><rect x="949.5" y="795.5" width="6" height="15" fill="none" stroke="#c83cc8"/><rect x="927.5" y="794.5" width="6" height="15" fill="none" stroke="#28c828"/><rect x="949.5" y="788.5" width="6" height="15" fill="none" stroke="#d4d44a"/><rect x="976.5" y="788.5" width="5" height="15" fill="none" stroke="#d4d44a"/><rect x="1003.5" y="788.5" width="5" height="15" fill="none" stroke="#d4d44a"/><rect x="1029.5" y="788.5" width="6" height="15" fill="none" stroke="#d4d44a"/></svg>
<div style="position:absolute;left:1380px;top:73px;width:150px;height:658px;background:#f0f0f0"></div><div style="position:absolute;left:1380px;top:73px;width:150px;height:100px;background:#f0f0f0;box-sizing:border-box;border:1px solid;border-color:#fff #a0a0a0 #a0a0a0 #fff"></div><div style="position:absolute;left:1380px;top:174px;width:150px;height:171px;background:#f0f0f0;box-sizing:border-box;border:1px solid;border-color:#fff #a0a0a0 #a0a0a0 #fff"></div><div style="position:absolute;left:1380px;top:346px;width:150px;height:220px;background:#f0f0f0;box-sizing:border-box;border:1px solid;border-color:#fff #a0a0a0 #a0a0a0 #fff"></div><div style="position:absolute;left:1380px;top:567px;width:150px;height:164px;background:#f0f0f0;box-sizing:border-box;border:1px solid;border-color:#fff #a0a0a0 #a0a0a0 #fff"></div><div style="position:absolute;left:1529px;top:73px;width:1px;height:658px;background:#909090"></div><div style="position:absolute;left:1380px;top:730px;width:150px;height:1px;background:#696969"></div><span class="rl" style="position:absolute;left:1389px;top:84px;font:11px/12px 'Liberation Sans',sans-serif;color:#000;white-space:nowrap;letter-spacing:-0.194px;">Select:</span><div style="position:absolute;left:1389px;top:100px;width:132px;height:16px;background:repeating-conic-gradient(#fff 0 25%,#f0f0f0 0 50%) 0 0/2px 2px;box-sizing:border-box;border:1px solid;border-color:#696969 #fff #fff #696969;box-shadow:inset 1px 1px 0 #a0a0a0"><span style="position:absolute;left:0;right:0;top:1px;text-align:center;font:11px/12px 'Liberation Sans',sans-serif;color:#000;white-space:nowrap;letter-spacing:-0.316px;">Groups</span></div><div style="position:absolute;left:1389px;top:124px;width:132px;height:16px;background:#f0f0f0;box-sizing:border-box;border:1px solid;border-color:#fff #696969 #696969 #fff;box-shadow:inset -1px -1px 0 #a0a0a0"><span style="position:absolute;left:0;right:0;top:1px;text-align:center;font:11px/12px 'Liberation Sans',sans-serif;color:#000;white-space:nowrap;letter-spacing:-0.202px;">Objects</span></div><div style="position:absolute;left:1389px;top:147px;width:132px;height:16px;background:#f0f0f0;box-sizing:border-box;border:1px solid;border-color:#fff #696969 #696969 #fff;box-shadow:inset -1px -1px 0 #a0a0a0"><span style="position:absolute;left:0;right:0;top:1px;text-align:center;font:11px/12px 'Liberation Sans',sans-serif;color:#000;white-space:nowrap;letter-spacing:-0.278px;">Solids</span></div><span class="rl" style="position:absolute;left:1384px;top:178px;font:11px/12px 'Liberation Sans',sans-serif;color:#000;white-space:nowrap;letter-spacing:-0.184px;">Texture group:</span><div style="position:absolute;left:1389px;top:193px;width:136px;height:19px;background:#fff;box-sizing:border-box;border:1px solid;border-color:#a0a0a0 #fff #fff #a0a0a0;box-shadow:inset 1px 1px 0 #696969,inset -1px -1px 0 #e3e3e3"><span style="position:absolute;left:3px;top:2px;font:11px/12px 'Liberation Sans',sans-serif;white-space:nowrap;letter-spacing:-0.081px;">All Textures</span><div style="position:absolute;right:1px;top:1px;bottom:1px;width:16px;background:#f0f0f0;box-sizing:border-box;border:1px solid;border-color:#fff #696969 #696969 #fff;box-shadow:inset -1px -1px 0 #a0a0a0"><svg width="14" height="13" style="position:absolute;left:0;top:0"><polygon points="3.500,5.0 10.500,5.0 7,9.0" fill="#000"/></svg></div></div><span class="rl" style="position:absolute;left:1384px;top:216px;font:11px/12px 'Liberation Sans',sans-serif;color:#000;white-space:nowrap;letter-spacing:-0.361px;">Current texture:</span><div style="position:absolute;left:1389px;top:230px;width:136px;height:21px;background:#fff;box-sizing:border-box;border:1px solid;border-color:#a0a0a0 #fff #fff #a0a0a0;box-shadow:inset 1px 1px 0 #696969,inset -1px -1px 0 #e3e3e3"><span style="position:absolute;left:6px;top:3px;font:11px/12px 'Liberation Sans',sans-serif;white-space:nowrap;letter-spacing:-0.14px;">tools/toolsplayerclip</span><div style="position:absolute;right:1px;top:1px;bottom:1px;width:16px;background:#f0f0f0;box-sizing:border-box;border:1px solid;border-color:#fff #696969 #696969 #fff;box-shadow:inset -1px -1px 0 #a0a0a0"><svg width="14" height="15" style="position:absolute;left:0;top:0"><polygon points="3.500,6.0 10.500,6.0 7,10.0" fill="#000"/></svg></div></div><div style="position:absolute;left:1389px;top:257px;width:74px;height:80px;background:#c4047c"><div style="position:absolute;left:0;right:0;top:24px;text-align:center;font:bold 14px/17px 'Liberation Sans',sans-serif;color:#fbe8f2;letter-spacing:-.1px;text-shadow:0 0 1px #fff">PLAYER<br>CLIP</div></div><span class="rl" style="position:absolute;left:1467px;top:260px;font:11px/12px 'Liberation Sans',sans-serif;color:#000;white-space:nowrap;letter-spacing:-0.22px;">64x64</span><div style="position:absolute;left:1467px;top:286px;width:60px;height:23px;background:#f0f0f0;box-sizing:border-box;border:1px solid;border-color:#fff #696969 #696969 #fff;box-shadow:inset -1px -1px 0 #a0a0a0"><span style="position:absolute;left:0;right:0;top:4px;text-align:center;font:11px/12px 'Liberation Sans',sans-serif;color:#000;white-space:nowrap;letter-spacing:-0.308px;"><u>B</u>rowse...</span></div><div style="position:absolute;left:1467px;top:314px;width:60px;height:23px;background:#f0f0f0;box-sizing:border-box;border:1px solid;border-color:#fff #696969 #696969 #fff;box-shadow:inset -1px -1px 0 #a0a0a0"><span style="position:absolute;left:0;right:0;top:4px;text-align:center;font:11px/12px 'Liberation Sans',sans-serif;color:#000;white-space:nowrap;letter-spacing:-0.106px;"><u>R</u>eplace...</span></div><span class="rl" style="position:absolute;left:1384px;top:348px;font:11px/12px 'Liberation Sans',sans-serif;color:#000;white-space:nowrap;letter-spacing:-0.333px;">VisGroups:</span><div style="position:absolute;left:1384px;top:382px;width:142px;height:158px;box-sizing:border-box;border:1px solid;border-color:#fff #696969 #696969 #fff;box-shadow:inset -1px -1px 0 #a0a0a0"></div><div style="position:absolute;left:1384px;top:363px;width:45px;height:21px;background:#f0f0f0;box-sizing:border-box;border:1px solid;border-color:#fff #696969 #f0f0f0 #fff;border-radius:2px 2px 0 0;box-shadow:inset -1px 0 0 #a0a0a0"><span style="position:absolute;left:6px;top:3px;font:11px/12px 'Liberation Sans',sans-serif;letter-spacing:-0.33px;">User</span></div><div style="position:absolute;left:1429px;top:365px;width:40px;height:17px;box-sizing:border-box;border:1px solid;border-color:#fff #696969 transparent #fff;border-radius:2px 2px 0 0;box-shadow:inset -1px 0 0 #a0a0a0"><span style="position:absolute;left:4px;top:3px;font:11px/12px 'Liberation Sans',sans-serif;letter-spacing:-0.114px;">Auto</span></div><div style="position:absolute;left:1386px;top:386px;width:135px;height:151px;background:#fff;box-sizing:border-box;border:1px solid;border-color:#a0a0a0 #fff #fff #a0a0a0;box-shadow:inset 1px 1px 0 #696969,inset -1px -1px 0 #e3e3e3"></div><div style="position:absolute;left:1381px;top:546px;width:35px;height:18px;background:#f0f0f0;box-sizing:border-box;border:1px solid;border-color:#fff #696969 #696969 #fff;box-shadow:inset -1px -1px 0 #a0a0a0"><span style="position:absolute;left:0;right:0;top:2px;text-align:center;font:11px/12px 'Liberation Sans',sans-serif;color:#000;white-space:nowrap;letter-spacing:-0.133px;"><u>S</u>how</span></div><div style="position:absolute;left:1417px;top:546px;width:36px;height:18px;background:#f0f0f0;box-sizing:border-box;border:1px solid;border-color:#fff #696969 #696969 #fff;box-shadow:inset -1px -1px 0 #a0a0a0"><span style="position:absolute;left:0;right:0;top:2px;text-align:center;font:11px/12px 'Liberation Sans',sans-serif;color:#000;white-space:nowrap;letter-spacing:-0.242px;"><u>E</u>dit</span></div><div style="position:absolute;left:1455px;top:546px;width:36px;height:18px;background:#f0f0f0;box-sizing:border-box;border:1px solid;border-color:#fff #696969 #696969 #fff;box-shadow:inset -1px -1px 0 #a0a0a0"><span style="position:absolute;left:0;right:0;top:2px;text-align:center;font:11px/12px 'Liberation Sans',sans-serif;color:#000;white-space:nowrap;letter-spacing:-0.209px;"><u>M</u>ark</span></div><div style="position:absolute;left:1494px;top:546px;width:17px;height:18px;background:#f0f0f0;box-sizing:border-box;border:1px solid;border-color:#fff #696969 #696969 #fff;box-shadow:inset -1px -1px 0 #a0a0a0"><span style="position:absolute;left:0;right:0;top:2px;text-align:center;font:11px/12px 'Liberation Sans',sans-serif;color:#000;white-space:nowrap;"></span></div><div style="position:absolute;left:1512px;top:546px;width:17px;height:18px;background:#f0f0f0;box-sizing:border-box;border:1px solid;border-color:#fff #696969 #696969 #fff;box-shadow:inset -1px -1px 0 #a0a0a0"><span style="position:absolute;left:0;right:0;top:2px;text-align:center;font:11px/12px 'Liberation Sans',sans-serif;color:#000;white-space:nowrap;"></span></div><svg style="position:absolute;left:1494px;top:546px" width="35" height="18"><path d="M8 3.500l4.500 5h-3v5.500h-3v-5.500h-3zM26 14l4.500-5h-3v-5.500h-3v5.500h-3z" fill="#000"/></svg><span class="rl" style="position:absolute;left:1384px;top:569px;font:11px/12px 'Liberation Sans',sans-serif;color:#000;white-space:nowrap;letter-spacing:-0.077px;">Move</span><span class="rl" style="position:absolute;left:1384px;top:582px;font:11px/12px 'Liberation Sans',sans-serif;color:#000;white-space:nowrap;letter-spacing:-0.251px;">selected:</span><div style="position:absolute;left:1429px;top:571px;width:48px;height:22px;background:#f0f0f0;box-sizing:border-box;border:1px solid;border-color:#fff #696969 #696969 #fff;box-shadow:inset -1px -1px 0 #a0a0a0"><span style="position:absolute;left:0;right:0;top:4px;text-align:center;font:11px/12px 'Liberation Sans',sans-serif;color:#a0a0a0;white-space:nowrap;letter-spacing:-0.143px;">to<u>W</u>orld</span></div><div style="position:absolute;left:1479px;top:571px;width:48px;height:22px;background:#f0f0f0;box-sizing:border-box;border:1px solid;border-color:#fff #696969 #696969 #fff;box-shadow:inset -1px -1px 0 #a0a0a0"><span style="position:absolute;left:0;right:0;top:4px;text-align:center;font:11px/12px 'Liberation Sans',sans-serif;color:#a0a0a0;white-space:nowrap;letter-spacing:-0.24px;">to<u>E</u>ntity</span></div><span class="rl" style="position:absolute;left:1384px;top:600px;font:11px/12px 'Liberation Sans',sans-serif;color:#000;white-space:nowrap;letter-spacing:-0.362px;"><u>C</u>ategories:</span><div style="position:absolute;left:1383px;top:614px;width:142px;height:20px;background:#f0f0f0;box-sizing:border-box;border:1px solid;border-color:#a0a0a0 #fff #fff #a0a0a0;box-shadow:inset 1px 1px 0 #696969,inset -1px -1px 0 #e3e3e3"><span style="position:absolute;left:6px;top:3px;font:11px/12px 'Liberation Sans',sans-serif;white-space:nowrap;"></span><div style="position:absolute;right:1px;top:1px;bottom:1px;width:16px;background:#f0f0f0;box-sizing:border-box;border:1px solid;border-color:#fff #696969 #696969 #fff;box-shadow:inset -1px -1px 0 #a0a0a0"><svg width="14" height="14" style="position:absolute;left:0;top:0"><polygon points="3.500,5.5 10.500,5.5 7,9.5" fill="#a0a0a0"/></svg></div></div><span class="rl" style="position:absolute;left:1384px;top:639px;font:11px/12px 'Liberation Sans',sans-serif;color:#000;white-space:nowrap;letter-spacing:-0.347px;"><u>O</u>bjects:</span><div style="position:absolute;left:1383px;top:653px;width:142px;height:23px;background:#f0f0f0;box-sizing:border-box;border:1px solid;border-color:#a0a0a0 #fff #fff #a0a0a0;box-shadow:inset 1px 1px 0 #696969,inset -1px -1px 0 #e3e3e3"><span style="position:absolute;left:6px;top:4px;font:11px/12px 'Liberation Sans',sans-serif;white-space:nowrap;"></span><div style="position:absolute;right:1px;top:1px;bottom:1px;width:16px;background:#f0f0f0;box-sizing:border-box;border:1px solid;border-color:#fff #696969 #696969 #fff;box-shadow:inset -1px -1px 0 #a0a0a0"><svg width="14" height="17" style="position:absolute;left:0;top:0"><polygon points="3.500,7.0 10.500,7.0 7,11.0" fill="#a0a0a0"/></svg></div></div><div style="position:absolute;left:1383px;top:683px;width:13px;height:13px;background:#fff;box-sizing:border-box;border:1px solid;border-color:#a0a0a0 #fff #fff #a0a0a0;box-shadow:inset 1px 1px 0 #696969,inset -1px -1px 0 #e3e3e3"></div><span class="rl" style="position:absolute;left:1401px;top:684px;font:11px/12px 'Liberation Sans',sans-serif;color:#000;white-space:nowrap;letter-spacing:-0.135px;">Random Yaw</span><div style="position:absolute;left:1401px;top:705px;width:107px;height:23px;background:#f0f0f0;box-sizing:border-box;border:1px solid;border-color:#fff #696969 #696969 #fff;box-shadow:inset -1px -1px 0 #a0a0a0"><span style="position:absolute;left:0;right:0;top:4px;text-align:center;font:11px/12px 'Liberation Sans',sans-serif;color:#000;white-space:nowrap;letter-spacing:-0.272px;"><u>C</u>reate Prefab</span></div><div style="position:absolute;left:1530px;top:73px;width:149px;height:221px;background:#f0f0f0;border-top:1px solid #fff;border-left:1px solid #fff;box-sizing:border-box"></div><span class="rl" style="position:absolute;left:1536px;top:76px;font:11px/12px 'Liberation Sans',sans-serif;color:#000;white-space:nowrap;letter-spacing:-0.317px;">Manifest:</span><div style="position:absolute;left:1531px;top:90px;width:148px;height:2px;background:#696969;border-bottom:1px solid #a0a0a0;box-sizing:border-box"></div><div style="position:absolute;left:1530px;top:294px;width:149px;height:1px;background:#fff"></div>
<div style="position:absolute;left:0px;top:989px;width:1679px;height:22px;background:#f0f0f0"></div><div style="position:absolute;left:0px;top:989px;width:1679px;height:1px;background:#fff"></div><div style="position:absolute;left:0px;top:1010px;width:1679px;height:1px;background:#333"></div><div style="position:absolute;left:0px;top:992px;width:786px;height:17px;border-left:1px solid #a0a0a0;border-top:1px solid #a0a0a0;border-right:1px solid #fff;border-bottom:1px solid #fff;box-sizing:border-box"><span style="position:absolute;left:2px;top:2px;font:12px 'Liberation Sans',sans-serif;color:#000;white-space:nowrap;letter-spacing:-0.422px">For Help, press F1</span></div><div style="position:absolute;left:788px;top:992px;width:306px;height:17px;border-left:1px solid #a0a0a0;border-top:1px solid #a0a0a0;border-right:1px solid #fff;border-bottom:1px solid #fff;box-sizing:border-box"><span style="position:absolute;left:2px;top:2px;font:12px 'Liberation Sans',sans-serif;color:#000;white-space:nowrap;letter-spacing:-0.005px">no selection.</span></div><div style="position:absolute;left:1096px;top:992px;width:106px;height:17px;border-left:1px solid #a0a0a0;border-top:1px solid #a0a0a0;border-right:1px solid #fff;border-bottom:1px solid #fff;box-sizing:border-box"><span style="position:absolute;left:2px;top:2px;font:12px 'Liberation Sans',sans-serif;color:#000;white-space:nowrap;"></span></div><div style="position:absolute;left:1204px;top:992px;width:187px;height:17px;border-left:1px solid #a0a0a0;border-top:1px solid #a0a0a0;border-right:1px solid #fff;border-bottom:1px solid #fff;box-sizing:border-box"><span style="position:absolute;left:2px;top:2px;font:12px 'Liberation Sans',sans-serif;color:#000;white-space:nowrap;"></span></div><div style="position:absolute;left:1393px;top:992px;width:86px;height:17px;border-left:1px solid #a0a0a0;border-top:1px solid #a0a0a0;border-right:1px solid #fff;border-bottom:1px solid #fff;box-sizing:border-box"><span style="position:absolute;left:2px;top:2px;font:12px 'Liberation Sans',sans-serif;color:#000;white-space:nowrap;"></span></div><div style="position:absolute;left:1481px;top:992px;width:140px;height:17px;border-left:1px solid #a0a0a0;border-top:1px solid #a0a0a0;border-right:1px solid #fff;border-bottom:1px solid #fff;box-sizing:border-box"><span style="position:absolute;left:2px;top:2px;font:12px 'Liberation Sans',sans-serif;color:#000;white-space:nowrap;letter-spacing:-0.375px">Snap: On Grid: 16</span></div><div style="position:absolute;left:1623px;top:992px;width:56px;height:17px;border-left:1px solid #a0a0a0;border-top:1px solid #a0a0a0;border-right:1px solid #fff;border-bottom:1px solid #fff;box-sizing:border-box"><span style="position:absolute;left:2px;top:2px;font:12px 'Liberation Sans',sans-serif;color:#000;white-space:nowrap;letter-spacing:0.656px">&lt;-&gt;</span></div>
</body></html>
